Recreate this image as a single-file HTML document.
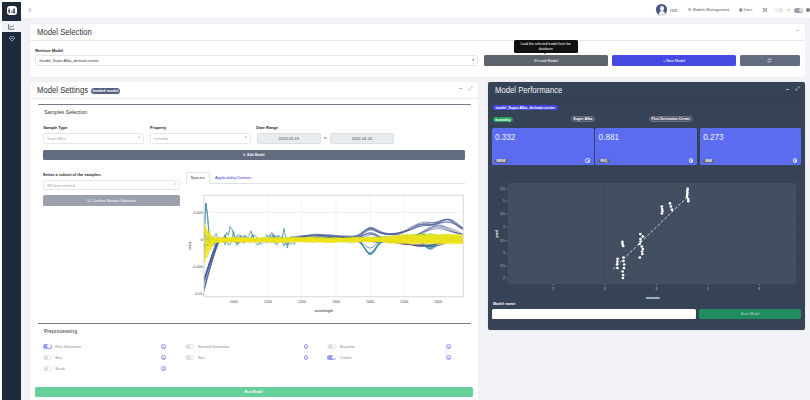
<!DOCTYPE html>
<html><head><meta charset="utf-8">
<style>
html,body{margin:0;padding:0;width:810px;height:400px;overflow:hidden;background:#fff;font-family:"Liberation Sans",sans-serif;}
.a{position:absolute;box-sizing:border-box;}
.t{position:absolute;white-space:nowrap;line-height:1;}
.main{left:21px;top:18px;width:789px;height:382px;background:#f1f3f6;}
.side{left:2px;top:2px;width:19px;height:398px;background:#1e293b;}
.card{background:#fff;border-radius:2px;box-shadow:0 0 1px rgba(0,0,0,.12);}
.hdr{border-bottom:0.6px solid #e7e9ec;}
.title{font-size:8.3px;color:#2f3338;transform:scaleX(0.93);transform-origin:0 0;}
.lbl{font-size:3.9px;font-weight:bold;color:#1a1a1a;}
.sel{background:#fff;border:0.5px solid #e5e8eb;border-radius:1.5px;}
.seltxt{font-size:3.8px;color:#666;}
.btn{border-radius:1.5px;color:#fff;font-size:3.8px;text-align:center;padding-top:0.9px;}
.tk{position:absolute;font-size:3.2px;color:#555;white-space:nowrap;line-height:4px;}
.tkx{position:absolute;font-size:3.2px;color:#555;white-space:nowrap;width:20px;text-align:center;line-height:4px;}
.pill{border-radius:3px;color:#fff;font-size:3.65px;font-weight:bold;text-align:center;line-height:6.1px;height:5.4px;white-space:nowrap;overflow:hidden;}
.tog{width:9.2px;height:5.2px;border-radius:2.6px;}
.toff{background:#fff;border:0.5px solid #e3e5e8;}
.toff::after{content:"";position:absolute;left:0.2px;top:0.2px;width:4.2px;height:4.2px;border-radius:50%;background:#dcdfe3;}
.ton{background:#9a9bf3;}
.ton::after{content:"";position:absolute;right:0.7px;top:0.7px;width:3.8px;height:3.8px;border-radius:50%;background:#fff;}
.plbl{font-size:3.9px;color:#858585;}
.info{width:4.4px;height:4.4px;border-radius:50%;border:0.6px solid #9e9ff4;background:#e9e9fd;}
.info::after{content:"";position:absolute;left:0.9px;top:1.4px;width:1.4px;height:0.6px;border-top:0.5px solid #9e9ff4;}
.metric{background:#5c6cf0;border-radius:1.5px;}
.mval{font-size:8.2px;color:#eef0ff;}
.mpill{background:#5d6372;height:4.4px;line-height:5.2px;font-size:3.1px;font-weight:bold;color:#fff;border-radius:2.2px;padding:0 2.4px;}
.minfo{width:4.4px;height:4.4px;border-radius:50%;border:0.6px solid #e8eaff;}
.minfo::after{content:"";position:absolute;left:1.45px;top:0.7px;width:0.9px;height:1.1px;border-left:0.5px solid #e8eaff;border-bottom:0.5px solid #e8eaff;}
</style></head><body>
<!-- header -->
<div class="a main"></div>
<div class="a side"></div>
<div class="a" style="left:2px;top:21px;width:19px;height:11px;background:#f1f3f6"></div>
<!-- logo -->
<div class="a" style="left:7px;top:5.6px;width:9.8px;height:9.6px;background:#fff;border-radius:3px"></div>
<svg class="a" style="left:7px;top:5.6px" width="10" height="10" viewBox="0 0 10 10">
 <g fill="#1e293b">
  <rect x="1.7" y="2.4" width="0.9" height="4.8"/><rect x="1.2" y="4" width="1.9" height="0.8"/><rect x="1.2" y="5.6" width="1.9" height="0.8"/>
  <rect x="4.3" y="4.6" width="1.2" height="0.9"/><rect x="4.3" y="6.2" width="1.2" height="0.9"/>
  <rect x="6.6" y="2.4" width="0.9" height="4.8"/><rect x="6.1" y="3.3" width="1.9" height="0.8"/><rect x="6.1" y="4.8" width="1.9" height="0.8"/><rect x="6.1" y="6.3" width="1.9" height="0.8"/>
 </g>
</svg>
<!-- side icons -->
<svg class="a" style="left:8px;top:23.5px" width="7" height="6" viewBox="0 0 7 6">
 <path d="M0.6 0.3 V5.2 H6.4" stroke="#3a3f4a" stroke-width="0.75" fill="none"/>
 <path d="M1.6 3.6 L2.8 2.2 L4 3 L5.8 1.2" stroke="#3a3f4a" stroke-width="0.65" fill="none"/>
</svg>
<svg class="a" style="left:8.6px;top:35.6px" width="6" height="6" viewBox="0 0 6 6">
 <path d="M3 5.2 L0.6 2.6 A1.3 1.3 0 0 1 3 1.3 A1.3 1.3 0 0 1 5.4 2.6 Z" stroke="#c3cad6" stroke-width="0.7" fill="none"/>
 <path d="M1.3 2.6 H4.7" stroke="#c3cad6" stroke-width="0.5"/>
</svg>
<!-- hamburger -->
<svg class="a" style="left:27.5px;top:7.5px" width="4" height="4" viewBox="0 0 4 4">
 <path d="M0.3 0.8H3.3M0.3 2H3.3M0.3 3.2H3.3" stroke="#9ca3af" stroke-width="0.5"/>
</svg>
<!-- top right -->
<div class="a" style="left:656.4px;top:4.4px;width:10.8px;height:10.8px;border-radius:50%;background:#4a5683;overflow:hidden;box-shadow:0 0.5px 1px rgba(0,0,0,.3)">
 <div class="a" style="left:3.4px;top:1.8px;width:4px;height:4.6px;border-radius:50%;background:#f1f3f6"></div>
 <div class="a" style="left:2.2px;top:6.6px;width:6.4px;height:6px;border-radius:3px 3px 0 0;background:#f1f3f6"></div>
</div>
<div class="t" style="left:669.8px;top:8.9px;font-size:4.6px;color:#666;transform:scaleX(0.92);transform-origin:0 0">root</div>
<div class="t" style="left:687.5px;top:7.9px;font-size:4.4px;color:#555;transform:scaleX(0.89);transform-origin:0 0">&#9881; Models Management</div>
<div class="t" style="left:739px;top:7.9px;font-size:4.4px;color:#555;transform:scaleX(0.88);transform-origin:0 0">&#9641; Docs</div>
<svg class="a" style="left:762.6px;top:8px" width="4.6" height="4.4" viewBox="0 0 4.6 4.4"><path d="M0.5 0.5L4.1 3.9M4.1 0.5L0.5 3.9M0.4 0.4h1.3M0.4 0.4v1.3M4.2 0.4h-1.3M4.2 0.4v1.3M0.4 4h1.3M0.4 4v-1.3M4.2 4h-1.3M4.2 4v-1.3" stroke="#555" stroke-width="0.6" fill="none"/></svg>
<div class="a" style="left:774.4px;top:7.8px;width:9px;height:5px;border-radius:2.5px;background:#f0f2f5"><div class="a" style="left:4.6px;top:0.5px;width:4px;height:4px;border-radius:50%;background:#e3e6ea"></div></div>
<div class="t" style="left:786.9px;top:8.6px;font-size:4.4px;color:#6a707a">?</div>
<div class="a" style="left:794px;top:7.8px;width:9.3px;height:5.2px;border-radius:2.6px;background:#9aa1ab"><div class="a" style="left:4.7px;top:0.6px;width:4px;height:4px;border-radius:50%;background:#dfe3e8"></div></div>
<div class="a" style="left:806.3px;top:8.3px;width:3.8px;height:3.8px;border-radius:50%;background:#7d7f84"></div>

<!-- ============ Model Selection card ============ -->
<div class="a card" style="left:30px;top:23.7px;width:775px;height:53px"></div>
<div class="a hdr" style="left:30px;top:23.7px;width:775px;height:17.1px"></div>
<div class="t title" style="left:36.8px;top:27.6px">Model Selection</div>
<div class="a" style="left:795.5px;top:30.3px;width:3px;height:0.6px;background:#c5c5c5"></div>
<div class="t lbl" style="left:35.3px;top:48.6px">Retrieve Model</div>
<div class="a sel" style="left:35.4px;top:55px;width:443.1px;height:10.8px"></div>
<div class="t seltxt" style="left:39.3px;top:60.0px;color:#333">/model_Super.Alba_derivate.center</div>
<div class="t" style="left:471.8px;top:58.6px;font-size:3px;color:#555">&#9660;</div>
<div class="a btn" style="left:484.2px;top:55px;width:123.5px;height:10.7px;line-height:10.7px;background:#5d636a">&#10227; Load Model</div>
<div class="a btn" style="left:612.4px;top:55px;width:123.3px;height:10.7px;line-height:10.7px;background:#4649e1">+ New Model</div>
<div class="a btn" style="left:740.2px;top:55px;width:59.5px;height:10.5px;line-height:10.5px;background:#646c7f"><svg width="5" height="5" viewBox="0 0 5 5" style="vertical-align:middle"><path d="M1 2.2 A1.6 1.6 0 0 1 4 1.8 M4 2.8 A1.6 1.6 0 0 1 1 3.2" stroke="#fff" stroke-width="0.6" fill="none"/><path d="M3.2 1.2 L4.2 1.9 L4.3 0.8Z M1.8 3.8 L0.8 3.1 L0.7 4.2Z" fill="#fff"/></svg></div>
<!-- tooltip -->
<div class="a" style="left:513.5px;top:40.3px;width:64.6px;height:12.3px;background:#111;border-radius:1.5px;color:#fff;font-size:3.4px;text-align:center;line-height:5px;padding-top:1.4px">Load the selected model from the<br>database</div>
<div class="a" style="left:543.8px;top:52.5px;width:0;height:0;border-left:1.6px solid transparent;border-right:1.6px solid transparent;border-top:1.6px solid #111"></div>

<!-- ============ Model Settings card ============ -->
<div class="a card" style="left:30px;top:81.5px;width:448px;height:330px"></div>
<div class="a hdr" style="left:30px;top:81.5px;width:448px;height:17.2px"></div>
<div class="t title" style="left:36.9px;top:86px">Model Settings</div>
<div class="a pill" style="left:90.8px;top:87.9px;width:29.6px;height:5.8px;line-height:6.6px;background:#56607f;font-size:4px;letter-spacing:0.05px">loaded model</div>
<div class="a" style="left:458.5px;top:88.3px;width:3px;height:0.6px;background:#bbb"></div>
<svg class="a" style="left:467.5px;top:86px" width="5" height="5" viewBox="0 0 5 5"><path d="M0.8 4.2 L4.2 0.8 M2.6 0.8H4.2V2.4 M0.8 2.6V4.2H2.4" stroke="#aab" stroke-width="0.5" fill="none"/></svg>

<!-- Samples selection inner -->
<div class="a" style="left:38px;top:104px;width:432.5px;height:1.1px;background:#737a8a;border-radius:1px"></div>
<div class="t" style="left:44.2px;top:110.3px;font-size:5.2px;color:#333">Samples Selection</div>
<div class="t lbl" style="left:43.2px;top:126.4px;font-size:3.95px">Sample Type</div>
<div class="t lbl" style="left:150px;top:126.4px;font-size:3.95px">Property</div>
<div class="t lbl" style="left:256.3px;top:126.4px;font-size:3.95px">Date Range</div>
<div class="a sel" style="left:42.7px;top:132.8px;width:101.7px;height:11px"></div>
<div class="t seltxt" style="left:47px;top:137.7px;color:#aaa">Super Alba</div>
<div class="t" style="left:137.5px;top:136.3px;font-size:2.8px;color:#888">&#9660;</div>
<div class="a sel" style="left:149.7px;top:132.8px;width:101.6px;height:11px"></div>
<div class="t seltxt" style="left:154px;top:137.7px;color:#aaa">humidity</div>
<div class="t" style="left:244.5px;top:136.3px;font-size:2.8px;color:#888">&#9660;</div>
<div class="a" style="left:256.6px;top:132.8px;width:64.3px;height:11px;background:#e9ecef;border:0.5px solid #dcdfe3;border-radius:1.5px;font-size:4px;color:#444;text-align:center;line-height:10.4px">2024-03-19</div>
<div class="t" style="left:323.8px;top:136.9px;font-size:3.6px;color:#666">to</div>
<div class="a" style="left:329.8px;top:132.8px;width:64.2px;height:11px;background:#e9ecef;border:0.5px solid #dcdfe3;border-radius:1.5px;font-size:4px;color:#444;text-align:center;line-height:10.4px">2024-04-20</div>
<div class="a btn" style="left:42.7px;top:149.6px;width:422.5px;height:10px;line-height:10px;background:#636c80;font-weight:bold;font-size:3.4px">&#9998; Edit Model</div>

<div class="t lbl" style="left:42.8px;top:173.4px;font-size:3.95px">Select a subset of the samples:</div>
<div class="a sel" style="left:42.8px;top:180.4px;width:137.4px;height:9.3px"></div>
<div class="t seltxt" style="left:47px;top:184.7px;color:#999;font-size:3.3px">389 items selected</div>
<div class="t" style="left:174px;top:183.6px;font-size:2.6px;color:#aaa">&#9660;</div>
<div class="a btn" style="left:42.8px;top:195.2px;width:137.4px;height:10.9px;line-height:10.9px;background:#9aa1ad;font-size:3.8px">&#9745; Confirm Sample Selection</div>

<!-- tabs -->
<div class="a" style="left:185.5px;top:183px;width:279.5px;height:0.6px;background:#dfe3e8"></div>
<div class="a" style="left:185.5px;top:171.9px;width:24.1px;height:11.7px;background:#fff;border:0.6px solid #dfe3e8;border-bottom:none;border-radius:1.5px 1.5px 0 0"></div>
<div class="t" style="left:190.6px;top:175.9px;font-size:4px;color:#333">Spectra</div>
<div class="t" style="left:215.1px;top:175.9px;font-size:4px;color:#3d3ddc">Applicability Domain</div>

<!-- spectra plot -->
<svg class="a" style="left:0;top:0" width="810" height="400" viewBox="0 0 810 400">
 <defs><clipPath id="cp"><rect x="204" y="195.2" width="259.2" height="101.6"/></clipPath></defs>
 <g clip-path="url(#cp)">
<line x1="267.8" y1="296.8" x2="267.8" y2="298.0" stroke="#555" stroke-width="0.5"/>
<line x1="267.8" y1="195.2" x2="267.8" y2="296.8" stroke="#ebebeb" stroke-width="0.6"/>
<line x1="301.9" y1="296.8" x2="301.9" y2="298.0" stroke="#555" stroke-width="0.5"/>
<line x1="301.9" y1="195.2" x2="301.9" y2="296.8" stroke="#ebebeb" stroke-width="0.6"/>
<line x1="336.0" y1="296.8" x2="336.0" y2="298.0" stroke="#555" stroke-width="0.5"/>
<line x1="336.0" y1="195.2" x2="336.0" y2="296.8" stroke="#ebebeb" stroke-width="0.6"/>
<line x1="370.1" y1="296.8" x2="370.1" y2="298.0" stroke="#555" stroke-width="0.5"/>
<line x1="370.1" y1="195.2" x2="370.1" y2="296.8" stroke="#ebebeb" stroke-width="0.6"/>
<line x1="404.2" y1="296.8" x2="404.2" y2="298.0" stroke="#555" stroke-width="0.5"/>
<line x1="404.2" y1="195.2" x2="404.2" y2="296.8" stroke="#ebebeb" stroke-width="0.6"/>
<line x1="204.0" y1="212.5" x2="463.2" y2="212.5" stroke="#ebebeb" stroke-width="0.6"/>
<line x1="204.0" y1="239.8" x2="463.2" y2="239.8" stroke="#ebebeb" stroke-width="0.6"/>
<polyline points="204.0,246.6 205.8,245.6 207.5,244.6 209.2,243.6 211.0,242.4 212.7,241.2 214.5,240.1 216.2,240.0 217.9,239.9 219.7,239.9 221.4,239.9 223.1,240.0 224.9,240.1 226.6,240.3 228.4,240.6 230.1,241.0 231.8,241.3 233.6,241.6 235.3,241.9 237.0,242.0 238.8,241.9 240.5,241.8 242.2,241.6 244.0,241.5 245.7,241.4 247.5,241.3 249.2,241.3 250.9,241.3 252.7,241.3 254.4,241.2 256.1,241.2 257.9,241.0 259.6,240.9 261.4,240.7 263.1,240.4 264.8,240.2 266.6,240.1 268.3,240.0 270.0,240.0 271.8,240.0 273.5,240.0 275.3,240.0 277.0,240.0 278.7,239.9 280.5,239.8 282.2,239.7 283.9,239.5 285.7,239.4 287.4,239.3 289.1,239.2 290.9,239.2 292.6,239.3 294.4,239.3 296.1,239.3 297.8,239.2 299.6,239.2 301.3,239.2 303.0,239.2 304.8,239.4 306.5,239.5 308.3,239.8 310.0,240.0 311.7,240.1 313.5,240.2 315.2,240.2 316.9,240.2 318.7,240.2 320.4,240.2 322.2,240.3 323.9,240.4 325.6,240.4 327.4,240.4 329.1,240.2 330.8,240.0 332.6,239.8 334.3,239.7 336.0,239.6 337.8,239.5 339.5,239.5 341.3,239.6 343.0,239.7 344.7,239.8 346.5,239.9 348.2,240.0 349.9,240.0 351.7,240.0 353.4,239.8 355.2,239.7 356.9,239.5 358.6,239.3 360.4,239.3 362.1,239.3 363.8,239.4 365.6,239.7 367.3,240.0 369.1,240.4 370.8,240.9 372.5,241.2 374.3,241.5 376.0,241.6 377.7,241.6 379.5,241.4 381.2,241.3 382.9,241.2 384.7,241.2 386.4,241.3 388.2,241.4 389.9,241.7 391.6,242.0 393.4,242.3 395.1,242.6 396.8,243.0 398.6,243.4 400.3,243.7 402.1,244.0 403.8,244.2 405.5,244.4 407.3,244.5 409.0,244.7 410.7,244.9 412.5,245.1 414.2,245.5 416.0,245.8 417.7,246.0 419.4,246.2 421.2,246.3 422.9,246.3 424.6,246.2 426.4,246.0 428.1,245.8 429.8,245.5 431.6,245.2 433.3,244.9 435.1,244.5 436.8,244.1 438.5,243.7 440.3,243.4 442.0,243.1 443.7,242.8 445.5,242.5 447.2,242.2 449.0,241.9 450.7,241.6 452.4,241.3 454.2,241.0 455.9,240.6 457.6,240.3 459.4,240.0 461.1,239.8 462.9,239.7" stroke="#3b2a78" stroke-width="0.7" fill="none" opacity="1.0"/>
<polyline points="204.0,246.9 205.8,245.9 207.5,244.8 209.2,243.8 211.0,242.7 212.7,241.5 214.5,240.5 216.2,240.4 217.9,240.3 219.7,240.2 221.4,240.2 223.1,240.2 224.9,240.3 226.6,240.4 228.4,240.5 230.1,240.5 231.8,240.5 233.6,240.4 235.3,240.4 237.0,240.3 238.8,240.3 240.5,240.4 242.2,240.4 244.0,240.4 245.7,240.4 247.5,240.3 249.2,240.2 250.9,240.1 252.7,240.0 254.4,240.0 256.1,239.9 257.9,239.9 259.6,239.8 261.4,239.7 263.1,239.5 264.8,239.5 266.6,239.4 268.3,239.4 270.0,239.4 271.8,239.4 273.5,239.4 275.3,239.3 277.0,239.2 278.7,239.0 280.5,238.9 282.2,238.8 283.9,238.8 285.7,238.8 287.4,238.8 289.1,238.8 290.9,238.8 292.6,238.8 294.4,238.7 296.1,238.8 297.8,239.0 299.6,239.2 301.3,239.5 303.0,239.9 304.8,240.2 306.5,240.4 308.3,240.6 310.0,240.7 311.7,240.8 313.5,240.8 315.2,240.9 316.9,240.8 318.7,240.9 320.4,240.9 322.2,241.0 323.9,241.0 325.6,241.1 327.4,241.0 329.1,240.9 330.8,240.8 332.6,240.8 334.3,240.7 336.0,240.7 337.8,240.7 339.5,240.6 341.3,240.5 343.0,240.3 344.7,240.1 346.5,239.8 348.2,239.7 349.9,239.6 351.7,239.6 353.4,239.7 355.2,239.9 356.9,240.0 358.6,240.1 360.4,240.1 362.1,240.1 363.8,240.1 365.6,240.3 367.3,240.5 369.1,240.8 370.8,241.2 372.5,241.7 374.3,242.0 376.0,242.3 377.7,242.3 379.5,242.2 381.2,242.0 382.9,241.9 384.7,241.7 386.4,241.7 388.2,241.7 389.9,241.8 391.6,241.9 393.4,242.1 395.1,242.3 396.8,242.6 398.6,242.9 400.3,243.2 402.1,243.6 403.8,243.9 405.5,244.2 407.3,244.3 409.0,244.4 410.7,244.5 412.5,244.4 414.2,244.3 416.0,244.3 417.7,244.3 419.4,244.5 421.2,244.7 422.9,245.0 424.6,245.3 426.4,245.5 428.1,245.6 429.8,245.5 431.6,245.3 433.3,245.0 435.1,244.6 436.8,244.2 438.5,243.7 440.3,243.3 442.0,242.8 443.7,242.4 445.5,241.9 447.2,241.4 449.0,240.9 450.7,240.4 452.4,240.1 454.2,239.8 455.9,239.8 457.6,239.8 459.4,239.8 461.1,239.8 462.9,239.9" stroke="#3b2a78" stroke-width="0.7" fill="none" opacity="1.0"/>
<polyline points="204.0,245.6 205.8,244.5 207.5,243.4 209.2,242.4 211.0,241.4 212.7,240.4 214.5,239.5 216.2,239.7 217.9,239.8 219.7,240.0 221.4,240.1 223.1,240.2 224.9,240.4 226.6,240.5 228.4,240.6 230.1,240.7 231.8,240.7 233.6,240.6 235.3,240.4 237.0,240.1 238.8,239.8 240.5,239.6 242.2,239.5 244.0,239.5 245.7,239.6 247.5,239.6 249.2,239.6 250.9,239.6 252.7,239.6 254.4,239.7 256.1,239.8 257.9,240.0 259.6,240.2 261.4,240.3 263.1,240.3 264.8,240.0 266.6,239.6 268.3,239.2 270.0,238.8 271.8,238.5 273.5,238.3 275.3,238.4 277.0,238.7 278.7,239.0 280.5,239.2 282.2,239.5 283.9,239.6 285.7,239.8 287.4,239.9 289.1,240.0 290.9,240.1 292.6,240.1 294.4,240.1 296.1,240.0 297.8,239.8 299.6,239.7 301.3,239.5 303.0,239.3 304.8,239.2 306.5,239.0 308.3,239.0 310.0,239.2 311.7,239.5 313.5,240.0 315.2,240.4 316.9,240.8 318.7,241.0 320.4,241.0 322.2,240.9 323.9,240.8 325.6,240.7 327.4,240.4 329.1,240.2 330.8,240.0 332.6,239.8 334.3,239.8 336.0,239.9 337.8,240.1 339.5,240.3 341.3,240.5 343.0,240.5 344.7,240.4 346.5,240.1 348.2,239.8 349.9,239.5 351.7,239.3 353.4,239.3 355.2,239.4 356.9,239.7 358.6,240.1 360.4,240.5 362.1,240.7 363.8,240.9 365.6,240.9 367.3,240.9 369.1,240.8 370.8,240.7 372.5,240.7 374.3,240.8 376.0,240.8 377.7,240.8 379.5,240.9 381.2,241.0 382.9,241.2 384.7,241.4 386.4,241.6 388.2,241.8 389.9,242.0 391.6,242.0 393.4,242.1 395.1,242.1 396.8,242.2 398.6,242.4 400.3,242.6 402.1,242.7 403.8,242.9 405.5,243.1 407.3,243.4 409.0,243.7 410.7,244.1 412.5,244.5 414.2,244.8 416.0,245.0 417.7,245.1 419.4,245.2 421.2,245.3 422.9,245.5 424.6,245.8 426.4,246.0 428.1,246.2 429.8,246.4 431.6,246.5 433.3,246.5 435.1,246.3 436.8,246.0 438.5,245.6 440.3,245.1 442.0,244.5 443.7,243.9 445.5,243.3 447.2,242.6 449.0,242.0 450.7,241.4 452.4,240.9 454.2,240.6 455.9,240.3 457.6,240.2 459.4,240.1 461.1,240.0 462.9,239.9" stroke="#3b2a78" stroke-width="0.7" fill="none" opacity="1.0"/>
<polyline points="204.0,246.4 205.8,245.4 207.5,244.3 209.2,243.3 211.0,242.3 212.7,241.3 214.5,240.4 216.2,240.6 217.9,240.8 219.7,241.0 221.4,241.1 223.1,241.2 224.9,241.3 226.6,241.3 228.4,241.3 230.1,241.4 231.8,241.4 233.6,241.3 235.3,241.2 237.0,241.1 238.8,241.0 240.5,240.9 242.2,240.8 244.0,240.8 245.7,240.8 247.5,240.8 249.2,240.7 250.9,240.5 252.7,240.3 254.4,240.0 256.1,239.8 257.9,239.7 259.6,239.7 261.4,239.9 263.1,240.1 264.8,240.4 266.6,240.7 268.3,240.8 270.0,240.9 271.8,240.9 273.5,240.9 275.3,240.9 277.0,240.9 278.7,240.9 280.5,240.9 282.2,240.9 283.9,240.9 285.7,240.9 287.4,240.9 289.1,240.9 290.9,240.8 292.6,240.7 294.4,240.6 296.1,240.6 297.8,240.6 299.6,240.7 301.3,240.8 303.0,240.9 304.8,240.9 306.5,240.8 308.3,240.6 310.0,240.3 311.7,240.1 313.5,239.8 315.2,239.5 316.9,239.4 318.7,239.4 320.4,239.5 322.2,239.8 323.9,240.1 325.6,240.3 327.4,240.4 329.1,240.5 330.8,240.5 332.6,240.4 334.3,240.4 336.0,240.4 337.8,240.5 339.5,240.6 341.3,240.7 343.0,240.8 344.7,240.9 346.5,240.9 348.2,241.0 349.9,241.2 351.7,241.3 353.4,241.4 355.2,241.4 356.9,241.4 358.6,241.3 360.4,241.2 362.1,241.1 363.8,241.0 365.6,241.0 367.3,241.0 369.1,241.1 370.8,241.1 372.5,241.1 374.3,241.1 376.0,241.1 377.7,241.1 379.5,241.2 381.2,241.2 382.9,241.4 384.7,241.5 386.4,241.6 388.2,241.8 389.9,241.9 391.6,242.1 393.4,242.3 395.1,242.5 396.8,242.7 398.6,243.0 400.3,243.2 402.1,243.3 403.8,243.5 405.5,243.6 407.3,243.8 409.0,244.1 410.7,244.4 412.5,244.8 414.2,245.3 416.0,245.7 417.7,246.0 419.4,246.1 421.2,246.1 422.9,245.9 424.6,245.6 426.4,245.1 428.1,244.7 429.8,244.4 431.6,244.2 433.3,244.1 435.1,244.1 436.8,244.1 438.5,244.0 440.3,243.6 442.0,243.2 443.7,242.6 445.5,242.0 447.2,241.4 449.0,240.9 450.7,240.4 452.4,240.0 454.2,239.7 455.9,239.6 457.6,239.6 459.4,239.7 461.1,239.8 462.9,239.9" stroke="#3b2a78" stroke-width="0.7" fill="none" opacity="1.0"/>
<polyline points="204.0,289.2 205.8,282.9 207.5,276.8 209.2,270.9 211.0,265.2 212.7,259.5 214.5,254.1 216.2,249.0 217.9,244.2 219.7,240.5 221.4,240.3 223.1,240.2 224.9,240.1 226.6,240.1 228.4,239.9 230.1,239.7 231.8,239.4 233.6,239.2 235.3,239.0 237.0,238.9 238.8,238.8 240.5,238.9 242.2,238.9 244.0,239.0 245.7,239.0 247.5,239.0 249.2,238.9 250.9,239.0 252.7,239.0 254.4,239.0 256.1,239.1 257.9,239.2 259.6,239.3 261.4,239.4 263.1,239.6 264.8,239.7 266.6,239.9 268.3,240.0 270.0,240.1 271.8,240.2 273.5,240.2 275.3,240.1 277.0,240.0 278.7,239.8 280.5,239.7 282.2,239.6 283.9,239.5 285.7,239.4 287.4,239.2 289.1,239.0 290.9,238.9 292.6,238.7 294.4,238.4 296.1,238.1 297.8,237.8 299.6,237.4 301.3,237.0 303.0,236.5 304.8,236.0 306.5,235.6 308.3,235.3 310.0,234.9 311.7,234.5 313.5,234.3 315.2,234.2 316.9,234.2 318.7,234.4 320.4,234.7 322.2,235.1 323.9,235.5 325.6,235.9 327.4,236.3 329.1,236.5 330.8,236.8 332.6,236.9 334.3,236.9 336.0,236.9 337.8,236.8 339.5,236.8 341.3,236.8 343.0,236.9 344.7,237.0 346.5,237.1 348.2,237.2 349.9,237.2 351.7,237.2 353.4,237.0 355.2,236.8 356.9,236.5 358.6,235.9 360.4,234.9 362.1,233.5 363.8,231.9 365.6,230.4 367.3,229.0 369.1,227.9 370.8,227.5 372.5,227.8 374.3,228.4 376.0,229.4 377.7,230.4 379.5,231.3 381.2,232.0 382.9,232.6 384.7,232.9 386.4,233.2 388.2,233.4 389.9,233.5 391.6,233.6 393.4,233.6 395.1,233.6 396.8,233.4 398.6,233.1 400.3,232.7 402.1,232.2 403.8,231.6 405.5,231.0 407.3,230.3 409.0,229.4 410.7,228.6 412.5,227.6 414.2,226.6 416.0,225.7 417.7,225.0 419.4,224.4 421.2,224.2 422.9,224.1 424.6,224.3 426.4,224.5 428.1,224.7 429.8,224.8 431.6,224.7 433.3,224.5 435.1,224.1 436.8,223.5 438.5,222.8 440.3,222.0 442.0,221.3 443.7,220.6 445.5,220.0 447.2,219.5 449.0,219.3 450.7,219.5 452.4,220.0 454.2,220.9 455.9,222.1 457.6,223.6 459.4,225.1 461.1,226.6 462.9,228.0" stroke="#3e4f8c" stroke-width="0.6" fill="none" opacity="1.0"/>
<polyline points="204.0,281.2 205.8,275.8 207.5,270.5 209.2,265.3 211.0,260.2 212.7,255.3 214.5,250.6 216.2,246.3 217.9,242.5 219.7,239.5 221.4,239.4 223.1,239.4 224.9,239.4 226.6,239.4 228.4,239.3 230.1,239.4 231.8,239.4 233.6,239.6 235.3,239.7 237.0,239.9 238.8,240.0 240.5,240.1 242.2,240.0 244.0,240.0 245.7,239.8 247.5,239.8 249.2,239.8 250.9,239.9 252.7,240.0 254.4,240.3 256.1,240.5 257.9,240.7 259.6,240.9 261.4,241.0 263.1,241.0 264.8,240.9 266.6,240.6 268.3,240.4 270.0,240.3 271.8,240.3 273.5,240.4 275.3,240.6 277.0,240.8 278.7,240.9 280.5,240.9 282.2,240.9 283.9,240.7 285.7,240.3 287.4,239.8 289.1,239.2 290.9,238.7 292.6,238.1 294.4,237.7 296.1,237.3 297.8,237.0 299.6,236.8 301.3,236.6 303.0,236.4 304.8,236.3 306.5,236.2 308.3,236.2 310.0,236.2 311.7,236.1 313.5,236.1 315.2,236.2 316.9,236.3 318.7,236.3 320.4,236.3 322.2,236.3 323.9,236.2 325.6,236.1 327.4,236.0 329.1,235.9 330.8,235.8 332.6,235.8 334.3,235.8 336.0,236.0 337.8,236.3 339.5,236.6 341.3,237.0 343.0,237.3 344.7,237.6 346.5,237.9 348.2,238.1 349.9,238.3 351.7,238.5 353.4,238.4 355.2,238.2 356.9,237.9 358.6,237.2 360.4,236.3 362.1,234.9 363.8,233.5 365.6,232.2 367.3,231.0 369.1,230.2 370.8,229.9 372.5,230.2 374.3,230.7 376.0,231.4 377.7,232.2 379.5,232.8 381.2,233.2 382.9,233.5 384.7,233.6 386.4,233.7 388.2,233.7 389.9,233.6 391.6,233.4 393.4,233.3 395.1,233.1 396.8,233.0 398.6,232.8 400.3,232.5 402.1,232.1 403.8,231.7 405.5,231.1 407.3,230.4 409.0,229.5 410.7,228.6 412.5,227.7 414.2,226.8 416.0,226.1 417.7,225.4 419.4,224.9 421.2,224.5 422.9,224.2 424.6,224.2 426.4,224.2 428.1,224.4 429.8,224.5 431.6,224.6 433.3,224.5 435.1,224.3 436.8,224.0 438.5,223.6 440.3,223.2 442.0,222.7 443.7,222.3 445.5,221.9 447.2,221.8 449.0,221.9 450.7,222.2 452.4,222.9 454.2,223.7 455.9,224.7 457.6,225.7 459.4,226.7 461.1,227.7 462.9,228.5" stroke="#465a9b" stroke-width="0.6" fill="none" opacity="1.0"/>
<polyline points="204.0,288.9 205.8,282.3 207.5,275.9 209.2,269.7 211.0,263.7 212.7,257.9 214.5,252.5 216.2,247.4 217.9,242.9 219.7,239.3 221.4,239.4 223.1,239.5 224.9,239.6 226.6,239.7 228.4,239.8 230.1,239.9 231.8,239.9 233.6,239.8 235.3,239.7 237.0,239.6 238.8,239.6 240.5,239.6 242.2,239.7 244.0,239.8 245.7,239.8 247.5,239.9 249.2,239.9 250.9,240.0 252.7,240.0 254.4,240.0 256.1,240.0 257.9,239.9 259.6,239.8 261.4,239.7 263.1,239.6 264.8,239.5 266.6,239.4 268.3,239.5 270.0,239.5 271.8,239.7 273.5,239.8 275.3,239.9 277.0,240.0 278.7,240.0 280.5,240.0 282.2,239.8 283.9,239.6 285.7,239.2 287.4,238.7 289.1,238.1 290.9,237.6 292.6,237.2 294.4,236.8 296.1,236.5 297.8,236.3 299.6,236.1 301.3,235.9 303.0,235.7 304.8,235.5 306.5,235.5 308.3,235.4 310.0,235.3 311.7,235.2 313.5,235.0 315.2,235.0 316.9,235.0 318.7,235.1 320.4,235.3 322.2,235.5 323.9,235.7 325.6,235.9 327.4,236.1 329.1,236.3 330.8,236.5 332.6,236.8 334.3,237.0 336.0,237.1 337.8,237.2 339.5,237.1 341.3,237.0 343.0,236.8 344.7,236.6 346.5,236.4 348.2,236.3 349.9,236.3 351.7,236.2 353.4,236.2 355.2,236.1 356.9,235.8 358.6,235.4 360.4,234.6 362.1,233.4 363.8,232.0 365.6,230.7 367.3,229.5 369.1,228.6 370.8,228.2 372.5,228.3 374.3,228.8 376.0,229.5 377.7,230.3 379.5,231.2 381.2,232.0 382.9,232.8 384.7,233.4 386.4,233.9 388.2,234.3 389.9,234.6 391.6,234.8 393.4,234.9 395.1,234.9 396.8,234.7 398.6,234.3 400.3,233.7 402.1,233.1 403.8,232.4 405.5,231.8 407.3,231.1 409.0,230.4 410.7,229.6 412.5,228.8 414.2,227.9 416.0,226.9 417.7,226.1 419.4,225.3 421.2,224.7 422.9,224.2 424.6,223.9 426.4,223.6 428.1,223.4 429.8,223.2 431.6,223.0 433.3,222.9 435.1,222.6 436.8,222.2 438.5,221.6 440.3,221.0 442.0,220.3 443.7,219.8 445.5,219.4 447.2,219.3 449.0,219.6 450.7,220.2 452.4,221.0 454.2,222.1 455.9,223.3 457.6,224.5 459.4,225.7 461.1,226.9 462.9,227.9" stroke="#3e4f8c" stroke-width="0.6" fill="none" opacity="1.0"/>
<polyline points="204.0,284.0 205.8,278.2 207.5,272.6 209.2,267.1 211.0,261.9 212.7,256.9 214.5,252.2 216.2,247.9 217.9,244.0 219.7,240.9 221.4,240.8 223.1,240.6 224.9,240.3 226.6,239.9 228.4,239.6 230.1,239.4 231.8,239.2 233.6,239.3 235.3,239.5 237.0,239.7 238.8,240.0 240.5,240.3 242.2,240.5 244.0,240.7 245.7,240.8 247.5,240.8 249.2,240.8 250.9,240.6 252.7,240.5 254.4,240.3 256.1,240.2 257.9,240.2 259.6,240.2 261.4,240.3 263.1,240.3 264.8,240.3 266.6,240.3 268.3,240.1 270.0,240.0 271.8,239.8 273.5,239.5 275.3,239.2 277.0,238.9 278.7,238.7 280.5,238.6 282.2,238.5 283.9,238.5 285.7,238.5 287.4,238.5 289.1,238.4 290.9,238.4 292.6,238.4 294.4,238.3 296.1,238.2 297.8,238.0 299.6,237.8 301.3,237.5 303.0,237.1 304.8,236.6 306.5,236.3 308.3,235.9 310.0,235.6 311.7,235.4 313.5,235.2 315.2,235.2 316.9,235.2 318.7,235.2 320.4,235.3 322.2,235.4 323.9,235.5 325.6,235.7 327.4,235.9 329.1,236.2 330.8,236.4 332.6,236.6 334.3,236.9 336.0,237.1 337.8,237.4 339.5,237.7 341.3,237.8 343.0,237.9 344.7,237.8 346.5,237.6 348.2,237.4 349.9,237.1 351.7,236.7 353.4,236.3 355.2,235.8 356.9,235.2 358.6,234.4 360.4,233.5 362.1,232.3 363.8,231.1 365.6,230.2 367.3,229.5 369.1,229.0 370.8,229.1 372.5,229.6 374.3,230.3 376.0,231.0 377.7,231.8 379.5,232.5 381.2,233.1 382.9,233.6 384.7,233.9 386.4,234.2 388.2,234.4 389.9,234.6 391.6,234.7 393.4,234.7 395.1,234.6 396.8,234.4 398.6,233.9 400.3,233.4 402.1,232.7 403.8,232.1 405.5,231.4 407.3,230.7 409.0,230.1 410.7,229.4 412.5,228.8 414.2,228.1 416.0,227.5 417.7,226.9 419.4,226.4 421.2,226.0 422.9,225.7 424.6,225.6 426.4,225.5 428.1,225.5 429.8,225.5 431.6,225.4 433.3,225.1 435.1,224.6 436.8,223.9 438.5,223.0 440.3,222.2 442.0,221.2 443.7,220.4 445.5,219.8 447.2,219.6 449.0,219.7 450.7,220.3 452.4,221.3 454.2,222.5 455.9,224.0 457.6,225.5 459.4,226.9 461.1,228.2 462.9,229.3" stroke="#465a9b" stroke-width="0.6" fill="none" opacity="1.0"/>
<polyline points="204.0,291.6 205.8,284.9 207.5,278.2 209.2,271.7 211.0,265.3 212.7,259.3 214.5,253.5 216.2,248.2 217.9,243.4 219.7,239.7 221.4,239.7 223.1,239.7 224.9,239.9 226.6,240.1 228.4,240.3 230.1,240.5 231.8,240.6 233.6,240.5 235.3,240.4 237.0,240.2 238.8,240.0 240.5,239.9 242.2,239.7 244.0,239.6 245.7,239.5 247.5,239.3 249.2,239.1 250.9,238.8 252.7,238.7 254.4,238.6 256.1,238.6 257.9,238.8 259.6,239.1 261.4,239.3 263.1,239.5 264.8,239.6 266.6,239.6 268.3,239.6 270.0,239.5 271.8,239.3 273.5,239.2 275.3,239.2 277.0,239.2 278.7,239.4 280.5,239.6 282.2,239.9 283.9,240.2 285.7,240.2 287.4,240.0 289.1,239.6 290.9,239.2 292.6,238.8 294.4,238.4 296.1,238.0 297.8,237.6 299.6,237.3 301.3,237.0 303.0,236.7 304.8,236.3 306.5,236.2 308.3,236.0 310.0,235.9 311.7,235.7 313.5,235.5 315.2,235.3 316.9,235.0 318.7,234.8 320.4,234.7 322.2,234.6 323.9,234.5 325.6,234.6 327.4,234.7 329.1,234.9 330.8,235.0 332.6,235.2 334.3,235.4 336.0,235.6 337.8,235.7 339.5,235.8 341.3,235.8 343.0,235.8 344.7,235.8 346.5,235.9 348.2,236.1 349.9,236.3 351.7,236.6 353.4,236.7 355.2,236.5 356.9,236.1 358.6,235.3 360.4,234.1 362.1,232.6 363.8,231.0 365.6,229.6 367.3,228.5 369.1,227.8 370.8,227.7 372.5,228.3 374.3,229.1 376.0,230.2 377.7,231.3 379.5,232.3 381.2,233.1 382.9,233.7 384.7,234.1 386.4,234.3 388.2,234.3 389.9,234.3 391.6,234.2 393.4,234.0 395.1,233.9 396.8,233.6 398.6,233.3 400.3,232.7 402.1,232.0 403.8,231.2 405.5,230.3 407.3,229.2 409.0,228.2 410.7,227.2 412.5,226.3 414.2,225.4 416.0,224.6 417.7,224.0 419.4,223.4 421.2,222.9 422.9,222.5 424.6,222.3 426.4,222.2 428.1,222.3 429.8,222.4 431.6,222.6 433.3,222.6 435.1,222.4 436.8,222.0 438.5,221.4 440.3,220.8 442.0,220.3 443.7,219.8 445.5,219.6 447.2,219.7 449.0,220.1 450.7,220.9 452.4,221.9 454.2,223.3 455.9,224.7 457.6,226.2 459.4,227.5 461.1,228.6 462.9,229.5" stroke="#3e4f8c" stroke-width="0.6" fill="none" opacity="1.0"/>
<polyline points="204.0,280.3 205.8,275.0 207.5,269.8 209.2,264.8 211.0,259.9 212.7,255.3 214.5,251.0 216.2,247.0 217.9,243.4 219.7,240.6 221.4,240.6 223.1,240.6 224.9,240.5 226.6,240.4 228.4,240.3 230.1,240.2 231.8,240.2 233.6,240.2 235.3,240.3 237.0,240.5 238.8,240.6 240.5,240.6 242.2,240.6 244.0,240.5 245.7,240.2 247.5,239.9 249.2,239.6 250.9,239.3 252.7,239.1 254.4,238.9 256.1,238.9 257.9,239.0 259.6,239.1 261.4,239.3 263.1,239.5 264.8,239.6 266.6,239.5 268.3,239.2 270.0,238.9 271.8,238.6 273.5,238.3 275.3,238.2 277.0,238.3 278.7,238.6 280.5,239.0 282.2,239.6 283.9,240.2 285.7,240.6 287.4,240.6 289.1,240.4 290.9,239.9 292.6,239.2 294.4,238.4 296.1,237.7 297.8,237.0 299.6,236.5 301.3,236.1 303.0,235.9 304.8,235.8 306.5,235.9 308.3,236.1 310.0,236.1 311.7,236.1 313.5,236.0 315.2,235.9 316.9,235.9 318.7,235.8 320.4,235.8 322.2,235.7 323.9,235.6 325.6,235.4 327.4,235.3 329.1,235.1 330.8,235.1 332.6,235.2 334.3,235.4 336.0,235.6 337.8,235.9 339.5,236.2 341.3,236.6 343.0,237.0 344.7,237.4 346.5,237.8 348.2,238.1 349.9,238.3 351.7,238.3 353.4,238.1 355.2,237.8 356.9,237.4 358.6,236.7 360.4,235.7 362.1,234.3 363.8,232.8 365.6,231.3 367.3,230.1 369.1,229.2 370.8,228.9 372.5,229.3 374.3,230.1 376.0,230.9 377.7,231.8 379.5,232.6 381.2,233.2 382.9,233.7 384.7,234.1 386.4,234.4 388.2,234.6 389.9,234.7 391.6,234.5 393.4,234.2 395.1,233.8 396.8,233.3 398.6,232.7 400.3,232.2 402.1,231.8 403.8,231.5 405.5,231.1 407.3,230.7 409.0,230.2 410.7,229.6 412.5,228.9 414.2,228.3 416.0,227.7 417.7,227.2 419.4,226.7 421.2,226.3 422.9,225.9 424.6,225.6 426.4,225.4 428.1,225.2 429.8,224.9 431.6,224.5 433.3,224.1 435.1,223.7 436.8,223.3 438.5,222.9 440.3,222.8 442.0,222.6 443.7,222.5 445.5,222.4 447.2,222.4 449.0,222.4 450.7,222.7 452.4,223.2 454.2,223.8 455.9,224.6 457.6,225.5 459.4,226.5 461.1,227.4 462.9,228.3" stroke="#465a9b" stroke-width="0.6" fill="none" opacity="1.0"/>
<polyline points="204.0,277.9 205.8,272.7 207.5,267.5 209.2,262.5 211.0,257.6 212.7,252.9 214.5,248.5 216.2,244.5 217.9,241.1 219.7,240.6 221.4,240.6 223.1,240.6 224.9,240.6 226.6,240.5 228.4,240.5 230.1,240.4 231.8,240.2 233.6,240.1 235.3,239.9 237.0,239.7 238.8,239.6 240.5,239.6 242.2,239.8 244.0,240.1 245.7,240.5 247.5,240.9 249.2,241.2 250.9,241.4 252.7,241.5 254.4,241.5 256.1,241.5 257.9,241.5 259.6,241.5 261.4,241.5 263.1,241.6 264.8,241.6 266.6,241.6 268.3,241.5 270.0,241.3 271.8,241.1 273.5,240.9 275.3,240.8 277.0,240.7 278.7,240.7 280.5,240.7 282.2,240.7 283.9,240.6 285.7,240.4 287.4,240.1 289.1,239.8 290.9,239.4 292.6,239.0 294.4,238.5 296.1,238.1 297.8,237.8 299.6,237.5 301.3,237.3 303.0,237.2 304.8,237.3 306.5,237.3 308.3,237.5 310.0,237.6 311.7,237.8 313.5,237.8 315.2,237.9 316.9,237.9 318.7,238.0 320.4,238.1 322.2,238.3 323.9,238.5 325.6,238.7 327.4,238.9 329.1,239.1 330.8,239.3 332.6,239.4 334.3,239.5 336.0,239.6 337.8,239.6 339.5,239.6 341.3,239.6 343.0,239.6 344.7,239.6 346.5,239.6 348.2,239.6 349.9,239.6 351.7,239.5 353.4,239.3 355.2,239.0 356.9,238.5 358.6,237.9 360.4,237.1 362.1,236.2 363.8,235.4 365.6,234.6 367.3,234.1 369.1,233.9 370.8,234.1 372.5,234.6 374.3,235.3 376.0,236.1 377.7,236.8 379.5,237.3 381.2,237.7 382.9,238.0 384.7,238.2 386.4,238.3 388.2,238.5 389.9,238.7 391.6,238.8 393.4,239.0 395.1,239.2 396.8,239.3 398.6,239.4 400.3,239.3 402.1,239.3 403.8,239.1 405.5,238.9 407.3,238.6 409.0,238.1 410.7,237.5 412.5,236.9 414.2,236.2 416.0,235.4 417.7,234.6 419.4,233.9 421.2,233.1 422.9,232.3 424.6,231.7 426.4,231.1 428.1,230.5 429.8,230.0 431.6,229.6 433.3,229.2 435.1,228.9 436.8,228.7 438.5,228.7 440.3,228.9 442.0,229.1 443.7,229.5 445.5,230.0 447.2,230.4 449.0,231.0 450.7,231.5 452.4,232.1 454.2,232.6 455.9,233.1 457.6,233.6 459.4,234.0 461.1,234.4 462.9,234.8" stroke="#3e4f8c" stroke-width="0.6" fill="none" opacity="1.0"/>
<polyline points="204.0,280.8 205.8,274.8 207.5,268.9 209.2,263.3 211.0,258.0 212.7,253.0 214.5,248.3 216.2,244.2 217.9,240.9 219.7,240.7 221.4,241.1 223.1,241.3 224.9,241.5 226.6,241.4 228.4,241.2 230.1,241.0 231.8,240.6 233.6,240.3 235.3,239.9 237.0,239.7 238.8,239.5 240.5,239.4 242.2,239.3 244.0,239.2 245.7,239.2 247.5,239.1 249.2,239.0 250.9,238.8 252.7,238.7 254.4,238.6 256.1,238.6 257.9,238.7 259.6,238.9 261.4,239.1 263.1,239.3 264.8,239.4 266.6,239.6 268.3,239.8 270.0,240.1 271.8,240.4 273.5,240.7 275.3,240.9 277.0,241.0 278.7,241.0 280.5,240.9 282.2,240.7 283.9,240.6 285.7,240.6 287.4,240.6 289.1,240.7 290.9,240.7 292.6,240.7 294.4,240.5 296.1,240.3 297.8,240.0 299.6,239.7 301.3,239.3 303.0,238.9 304.8,238.5 306.5,238.2 308.3,238.0 310.0,237.8 311.7,237.6 313.5,237.5 315.2,237.2 316.9,237.0 318.7,236.9 320.4,236.8 322.2,236.9 323.9,237.2 325.6,237.5 327.4,237.8 329.1,238.1 330.8,238.5 332.6,238.8 334.3,239.2 336.0,239.5 337.8,239.9 339.5,240.1 341.3,240.2 343.0,240.1 344.7,240.0 346.5,239.7 348.2,239.6 349.9,239.5 351.7,239.4 353.4,239.4 355.2,239.3 356.9,239.0 358.6,238.4 360.4,237.5 362.1,236.5 363.8,235.3 365.6,234.2 367.3,233.3 369.1,232.8 370.8,232.7 372.5,233.0 374.3,233.7 376.0,234.7 377.7,235.8 379.5,236.9 381.2,237.9 382.9,238.6 384.7,239.1 386.4,239.5 388.2,239.8 389.9,240.0 391.6,240.3 393.4,240.6 395.1,240.9 396.8,241.0 398.6,241.0 400.3,240.8 402.1,240.5 403.8,240.1 405.5,239.7 407.3,239.1 409.0,238.4 410.7,237.6 412.5,236.8 414.2,236.0 416.0,235.1 417.7,234.3 419.4,233.3 421.2,232.4 422.9,231.3 424.6,230.3 426.4,229.2 428.1,228.2 429.8,227.4 431.6,226.7 433.3,226.2 435.1,225.9 436.8,225.9 438.5,225.9 440.3,226.2 442.0,226.5 443.7,226.8 445.5,227.1 447.2,227.5 449.0,227.9 450.7,228.5 452.4,229.1 454.2,229.9 455.9,230.7 457.6,231.5 459.4,232.4 461.1,233.2 462.9,234.0" stroke="#465a9b" stroke-width="0.6" fill="none" opacity="1.0"/>
<polyline points="204.0,281.2 205.8,275.6 207.5,270.0 209.2,264.5 211.0,259.0 212.7,253.5 214.5,248.3 216.2,243.5 217.9,239.5 219.7,238.7 221.4,238.9 223.1,239.2 224.9,239.7 226.6,240.1 228.4,240.5 230.1,240.7 231.8,240.7 233.6,240.7 235.3,240.5 237.0,240.3 238.8,240.0 240.5,239.9 242.2,239.8 244.0,239.8 245.7,239.9 247.5,239.9 249.2,239.8 250.9,239.8 252.7,239.8 254.4,239.8 256.1,239.9 257.9,240.1 259.6,240.2 261.4,240.3 263.1,240.3 264.8,240.2 266.6,240.0 268.3,239.8 270.0,239.5 271.8,239.4 273.5,239.2 275.3,239.2 277.0,239.2 278.7,239.3 280.5,239.5 282.2,239.7 283.9,240.0 285.7,240.2 287.4,240.4 289.1,240.6 290.9,240.8 292.6,241.0 294.4,241.2 296.1,241.4 297.8,241.3 299.6,241.0 301.3,240.6 303.0,240.0 304.8,239.5 306.5,239.0 308.3,238.7 310.0,238.6 311.7,238.4 313.5,238.3 315.2,238.1 316.9,237.8 318.7,237.6 320.4,237.4 322.2,237.3 323.9,237.2 325.6,237.3 327.4,237.4 329.1,237.6 330.8,237.8 332.6,237.9 334.3,238.1 336.0,238.1 337.8,238.1 339.5,238.0 341.3,237.8 343.0,237.7 344.7,237.6 346.5,237.6 348.2,237.7 349.9,238.0 351.7,238.3 353.4,238.7 355.2,239.0 356.9,239.1 358.6,239.0 360.4,238.6 362.1,238.0 363.8,237.3 365.6,236.6 367.3,235.8 369.1,235.1 370.8,234.5 372.5,234.3 374.3,234.5 376.0,235.2 377.7,236.3 379.5,237.6 381.2,238.7 382.9,239.5 384.7,239.9 386.4,239.9 388.2,239.6 389.9,239.3 391.6,239.0 393.4,238.9 395.1,238.9 396.8,239.0 398.6,238.9 400.3,238.8 402.1,238.6 403.8,238.3 405.5,238.0 407.3,237.7 409.0,237.4 410.7,237.1 412.5,236.7 414.2,236.1 416.0,235.4 417.7,234.6 419.4,233.8 421.2,232.9 422.9,232.0 424.6,231.1 426.4,230.3 428.1,229.5 429.8,228.7 431.6,228.1 433.3,227.6 435.1,227.2 436.8,227.0 438.5,226.9 440.3,227.2 442.0,227.6 443.7,228.2 445.5,229.0 447.2,229.7 449.0,230.5 450.7,231.1 452.4,231.7 454.2,232.2 455.9,232.7 457.6,233.3 459.4,233.8 461.1,234.3 462.9,234.8" stroke="#3e4f8c" stroke-width="0.6" fill="none" opacity="1.0"/>
<polyline points="204.0,282.1 205.8,275.9 207.5,269.8 209.2,263.9 211.0,258.1 212.7,252.5 214.5,247.3 216.2,242.6 217.9,238.8 219.7,238.1 221.4,238.1 223.1,238.2 224.9,238.3 226.6,238.5 228.4,238.9 230.1,239.2 231.8,239.6 233.6,239.8 235.3,239.9 237.0,239.8 238.8,239.5 240.5,239.1 242.2,238.8 244.0,238.5 245.7,238.5 247.5,238.6 249.2,238.8 250.9,239.1 252.7,239.3 254.4,239.6 256.1,239.9 257.9,240.1 259.6,240.3 261.4,240.4 263.1,240.6 264.8,240.7 266.6,240.7 268.3,240.7 270.0,240.6 271.8,240.4 273.5,240.2 275.3,240.1 277.0,240.0 278.7,240.0 280.5,239.9 282.2,239.9 283.9,239.8 285.7,239.7 287.4,239.6 289.1,239.4 290.9,239.2 292.6,239.0 294.4,238.9 296.1,238.9 297.8,238.9 299.6,238.9 301.3,238.9 303.0,239.0 304.8,238.9 306.5,238.9 308.3,238.8 310.0,238.6 311.7,238.5 313.5,238.3 315.2,238.2 316.9,238.0 318.7,237.9 320.4,237.9 322.2,237.9 323.9,237.9 325.6,237.9 327.4,237.9 329.1,237.8 330.8,237.8 332.6,237.9 334.3,238.0 336.0,238.2 337.8,238.3 339.5,238.4 341.3,238.3 343.0,238.2 344.7,238.0 346.5,237.9 348.2,237.9 349.9,237.9 351.7,238.0 353.4,238.0 355.2,237.9 356.9,237.6 358.6,237.1 360.4,236.4 362.1,235.6 363.8,234.8 365.6,234.1 367.3,233.5 369.1,233.1 370.8,233.0 372.5,233.2 374.3,233.7 376.0,234.5 377.7,235.3 379.5,236.1 381.2,236.8 382.9,237.4 384.7,237.9 386.4,238.3 388.2,238.6 389.9,238.9 391.6,239.2 393.4,239.5 395.1,239.7 396.8,239.8 398.6,239.6 400.3,239.2 402.1,238.6 403.8,238.0 405.5,237.4 407.3,237.0 409.0,236.8 410.7,236.7 412.5,236.8 414.2,236.8 416.0,236.6 417.7,236.2 419.4,235.6 421.2,234.8 422.9,233.9 424.6,232.8 426.4,231.5 428.1,230.2 429.8,228.8 431.6,227.6 433.3,226.5 435.1,225.7 436.8,225.1 438.5,224.9 440.3,225.1 442.0,225.5 443.7,226.2 445.5,227.1 447.2,228.1 449.0,229.1 450.7,230.0 452.4,230.9 454.2,231.6 455.9,232.3 457.6,232.9 459.4,233.5 461.1,234.0 462.9,234.5" stroke="#465a9b" stroke-width="0.6" fill="none" opacity="1.0"/>
<polyline points="204.0,239.2 205.8,203.0 207.5,215.7 209.2,240.4 211.0,240.9 212.7,240.9 214.5,241.0 216.2,241.1 217.9,241.0 219.7,241.0 221.4,240.9 223.1,239.0 224.9,236.3 226.6,240.0 228.4,240.2 230.1,240.0 231.8,239.9 233.6,239.6 235.3,240.2 237.0,245.3 238.8,241.1 240.5,238.8 242.2,237.6 244.0,235.1 245.7,238.2 247.5,238.9 249.2,239.1 250.9,239.0 252.7,239.8 254.4,239.8 256.1,243.5 257.9,245.0 259.6,243.1 261.4,239.6 263.1,239.5 264.8,241.4 266.6,242.7 268.3,237.0 270.0,234.7 271.8,238.4 273.5,234.3 275.3,237.8 277.0,239.7 278.7,239.9 280.5,240.1 282.2,238.7 283.9,228.4 285.7,238.1 287.4,245.0 289.1,240.0 290.9,239.6 292.6,239.5 294.4,239.4 296.1,239.5 297.8,239.6 299.6,239.7 301.3,239.8 303.0,240.0 304.8,240.2 306.5,240.4 308.3,240.6 310.0,240.8 311.7,240.9 313.5,240.8 315.2,240.7 316.9,240.5 318.7,240.4 320.4,240.2 322.2,240.1 323.9,239.9 325.6,239.8 327.4,239.7 329.1,239.8 330.8,239.9 332.6,240.1 334.3,240.3 336.0,240.5 337.8,240.7 339.5,240.7 341.3,240.7 343.0,240.7 344.7,240.7 346.5,240.7 348.2,240.6 349.9,240.5 351.7,240.3 353.4,240.2 355.2,240.2 356.9,240.3 358.6,240.8 360.4,241.6 362.1,242.8 363.8,244.3 365.6,245.9 367.3,247.2 369.1,247.9 370.8,248.0 372.5,247.2 374.3,245.9 376.0,244.3 377.7,242.8 379.5,241.6 381.2,240.7 382.9,240.1 384.7,239.8 386.4,239.6 388.2,239.4 389.9,239.3 391.6,239.1 393.4,239.1 395.1,239.1 396.8,239.2 398.6,239.3 400.3,239.6 402.1,239.9 403.8,240.2 405.5,240.4 407.3,240.6 409.0,240.7 410.7,240.7 412.5,240.6 414.2,240.6 416.0,240.7 417.7,241.0 419.4,241.5 421.2,242.3 422.9,243.4 424.6,244.7 426.4,246.0 428.1,247.0 429.8,247.4 431.6,247.2 433.3,246.4 435.1,245.3 436.8,244.0 438.5,242.8 440.3,241.9 442.0,241.2 443.7,240.8 445.5,240.7 447.2,240.6 449.0,240.6 450.7,240.6 452.4,240.5 454.2,240.4 455.9,240.3 457.6,240.2 459.4,240.0 461.1,239.9 462.9,239.8" stroke="#2f7796" stroke-width="0.7" fill="none" opacity="1.0"/>
<polyline points="204.0,239.5 205.8,203.0 207.5,213.5 209.2,235.7 211.0,242.3 212.7,246.1 214.5,243.3 216.2,240.6 217.9,240.4 219.7,240.5 221.4,240.5 223.1,240.4 224.9,239.0 226.6,237.2 228.4,240.1 230.1,240.3 231.8,240.3 233.6,240.2 235.3,240.1 237.0,239.8 238.8,239.6 240.5,241.0 242.2,238.0 244.0,238.9 245.7,239.1 247.5,239.1 249.2,239.1 250.9,239.1 252.7,235.5 254.4,235.3 256.1,236.4 257.9,239.4 259.6,239.5 261.4,239.6 263.1,239.7 264.8,239.9 266.6,240.0 268.3,240.2 270.0,240.4 271.8,238.0 273.5,237.9 275.3,241.0 277.0,241.0 278.7,240.9 280.5,238.5 282.2,236.3 283.9,240.5 285.7,237.3 287.4,237.9 289.1,241.6 290.9,241.3 292.6,240.7 294.4,240.7 296.1,240.7 297.8,240.6 299.6,240.5 301.3,240.4 303.0,240.3 304.8,240.2 306.5,240.2 308.3,240.1 310.0,240.1 311.7,240.0 313.5,240.0 315.2,240.1 316.9,240.1 318.7,240.1 320.4,240.1 322.2,240.0 323.9,239.9 325.6,239.7 327.4,239.6 329.1,239.6 330.8,239.6 332.6,239.8 334.3,240.0 336.0,240.1 337.8,240.3 339.5,240.4 341.3,240.4 343.0,240.4 344.7,240.3 346.5,240.2 348.2,240.0 349.9,239.8 351.7,239.7 353.4,239.6 355.2,239.6 356.9,240.0 358.6,240.7 360.4,242.1 362.1,244.1 363.8,246.7 365.6,249.5 367.3,252.0 369.1,253.5 370.8,253.7 372.5,252.6 374.3,250.5 376.0,247.9 377.7,245.4 379.5,243.4 381.2,241.9 382.9,241.0 384.7,240.4 386.4,240.1 388.2,240.0 389.9,239.9 391.6,239.8 393.4,239.8 395.1,239.8 396.8,239.7 398.6,239.7 400.3,239.7 402.1,239.8 403.8,239.8 405.5,239.9 407.3,239.9 409.0,240.0 410.7,239.9 412.5,239.9 414.2,239.9 416.0,239.9 417.7,240.1 419.4,240.5 421.2,241.2 422.9,242.2 424.6,243.2 426.4,244.2 428.1,244.8 429.8,245.1 431.6,244.9 433.3,244.4 435.1,243.6 436.8,242.7 438.5,242.0 440.3,241.3 442.0,240.9 443.7,240.5 445.5,240.3 447.2,240.0 449.0,239.7 450.7,239.4 452.4,239.1 454.2,238.8 455.9,238.6 457.6,238.5 459.4,238.5 461.1,238.6 462.9,238.8" stroke="#3a8aa8" stroke-width="0.7" fill="none" opacity="1.0"/>
<polyline points="204.0,257.8 205.8,245.0 207.5,244.3 209.2,246.5 211.0,242.8 212.7,239.2 214.5,239.2 216.2,239.3 217.9,239.5 219.7,239.7 221.4,239.9 223.1,240.0 224.9,238.4 226.6,232.5 228.4,235.4 230.1,226.4 231.8,228.8 233.6,234.7 235.3,239.2 237.0,236.9 238.8,236.9 240.5,235.7 242.2,241.0 244.0,243.2 245.7,239.7 247.5,239.8 249.2,239.8 250.9,239.7 252.7,239.5 254.4,239.2 256.1,239.0 257.9,238.9 259.6,238.8 261.4,238.9 263.1,239.1 264.8,239.2 266.6,239.4 268.3,239.5 270.0,239.5 271.8,239.5 273.5,238.9 275.3,235.6 277.0,238.2 278.7,239.4 280.5,239.5 282.2,239.5 283.9,239.5 285.7,241.5 287.4,248.1 289.1,241.2 290.9,236.9 292.6,239.5 294.4,239.7 296.1,239.7 297.8,239.7 299.6,239.6 301.3,239.4 303.0,239.1 304.8,239.0 306.5,238.8 308.3,238.8 310.0,238.8 311.7,238.8 313.5,238.8 315.2,238.9 316.9,238.9 318.7,239.0 320.4,239.2 322.2,239.3 323.9,239.4 325.6,239.5 327.4,239.4 329.1,239.2 330.8,239.0 332.6,238.8 334.3,238.6 336.0,238.5 337.8,238.4 339.5,238.5 341.3,238.5 343.0,238.6 344.7,238.6 346.5,238.6 348.2,238.5 349.9,238.5 351.7,238.5 353.4,238.6 355.2,238.8 356.9,239.3 358.6,240.3 360.4,241.9 362.1,244.1 363.8,247.0 365.6,250.0 367.3,252.7 369.1,254.3 370.8,254.5 372.5,253.3 374.3,251.0 376.0,248.2 377.7,245.6 379.5,243.4 381.2,241.9 382.9,241.1 384.7,240.6 386.4,240.3 388.2,240.2 389.9,240.1 391.6,240.0 393.4,240.0 395.1,240.1 396.8,240.3 398.6,240.5 400.3,240.6 402.1,240.6 403.8,240.6 405.5,240.5 407.3,240.4 409.0,240.3 410.7,240.3 412.5,240.3 414.2,240.4 416.0,240.6 417.7,241.0 419.4,241.7 421.2,242.8 422.9,244.3 424.6,245.9 426.4,247.5 428.1,248.7 429.8,249.2 431.6,249.1 433.3,248.2 435.1,246.9 436.8,245.3 438.5,243.7 440.3,242.3 442.0,241.3 443.7,240.5 445.5,240.0 447.2,239.7 449.0,239.5 450.7,239.5 452.4,239.5 454.2,239.6 455.9,239.6 457.6,239.6 459.4,239.6 461.1,239.5 462.9,239.5" stroke="#2f7796" stroke-width="0.7" fill="none" opacity="1.0"/>
<polyline points="204.0,246.9 205.8,236.3 207.5,237.9 209.2,242.2 211.0,236.4 212.7,237.5 214.5,239.6 216.2,239.7 217.9,239.7 219.7,239.9 221.4,240.1 223.1,239.4 224.9,234.5 226.6,238.9 228.4,244.9 230.1,244.5 231.8,240.7 233.6,240.6 235.3,240.3 237.0,242.6 238.8,243.6 240.5,239.6 242.2,239.4 244.0,239.3 245.7,239.2 247.5,239.2 249.2,239.3 250.9,239.3 252.7,239.4 254.4,239.5 256.1,239.5 257.9,239.5 259.6,243.7 261.4,243.9 263.1,241.9 264.8,239.2 266.6,234.5 268.3,236.9 270.0,239.5 271.8,239.5 273.5,241.2 275.3,243.1 277.0,235.8 278.7,240.1 280.5,238.1 282.2,239.2 283.9,239.4 285.7,239.6 287.4,239.7 289.1,240.7 290.9,244.5 292.6,242.7 294.4,244.5 296.1,239.5 297.8,238.8 299.6,238.8 301.3,238.8 303.0,238.9 304.8,239.0 306.5,239.2 308.3,239.4 310.0,239.6 311.7,239.7 313.5,239.7 315.2,239.7 316.9,239.6 318.7,239.5 320.4,239.3 322.2,239.3 323.9,239.3 325.6,239.3 327.4,239.4 329.1,239.5 330.8,239.7 332.6,239.8 334.3,240.1 336.0,240.3 337.8,240.5 339.5,240.7 341.3,240.9 343.0,241.1 344.7,241.1 346.5,241.1 348.2,241.1 349.9,241.0 351.7,241.0 353.4,241.0 355.2,241.1 356.9,241.3 358.6,241.9 360.4,243.0 362.1,244.8 363.8,247.1 365.6,249.6 367.3,251.8 369.1,253.2 370.8,253.3 372.5,252.1 374.3,249.9 376.0,247.4 377.7,245.0 379.5,243.1 381.2,241.8 382.9,241.0 384.7,240.6 386.4,240.4 388.2,240.3 389.9,240.2 391.6,240.2 393.4,240.1 395.1,240.1 396.8,240.1 398.6,240.0 400.3,239.9 402.1,239.9 403.8,239.8 405.5,239.8 407.3,239.8 409.0,239.8 410.7,239.8 412.5,239.8 414.2,239.9 416.0,240.2 417.7,240.7 419.4,241.5 421.2,242.7 422.9,244.1 424.6,245.7 426.4,247.1 428.1,248.2 429.8,248.6 431.6,248.4 433.3,247.5 435.1,246.3 436.8,244.9 438.5,243.5 440.3,242.4 442.0,241.6 443.7,241.0 445.5,240.6 447.2,240.3 449.0,240.1 450.7,239.8 452.4,239.6 454.2,239.4 455.9,239.2 457.6,239.1 459.4,239.0 461.1,239.0 462.9,239.1" stroke="#3a8aa8" stroke-width="0.7" fill="none" opacity="1.0"/>
<polyline points="204.0,249.6 205.8,238.8 207.5,240.2 209.2,244.5 211.0,242.7 212.7,240.8 214.5,243.6 216.2,245.8 217.9,240.5 219.7,240.3 221.4,240.2 223.1,240.0 224.9,239.9 226.6,239.7 228.4,239.7 230.1,242.0 231.8,240.4 233.6,231.5 235.3,238.8 237.0,237.8 238.8,239.5 240.5,236.4 242.2,239.7 244.0,239.9 245.7,239.2 247.5,239.8 249.2,240.2 250.9,238.3 252.7,234.3 254.4,239.2 256.1,240.1 257.9,240.2 259.6,240.2 261.4,240.2 263.1,240.2 264.8,240.3 266.6,240.4 268.3,240.5 270.0,240.6 271.8,240.1 273.5,235.7 275.3,238.7 277.0,240.3 278.7,235.1 280.5,237.7 282.2,241.3 283.9,246.0 285.7,241.9 287.4,240.4 289.1,240.5 290.9,240.5 292.6,240.4 294.4,240.2 296.1,240.0 297.8,239.8 299.6,239.7 301.3,239.6 303.0,239.6 304.8,239.7 306.5,239.6 308.3,239.6 310.0,239.4 311.7,239.3 313.5,239.2 315.2,239.2 316.9,239.2 318.7,239.2 320.4,239.3 322.2,239.4 323.9,239.5 325.6,239.6 327.4,239.8 329.1,240.0 330.8,240.1 332.6,240.2 334.3,240.2 336.0,240.1 337.8,240.0 339.5,239.8 341.3,239.7 343.0,239.6 344.7,239.4 346.5,239.3 348.2,239.2 349.9,239.1 351.7,239.0 353.4,239.1 355.2,239.3 356.9,239.8 358.6,240.8 360.4,242.2 362.1,244.4 363.8,247.0 365.6,249.9 367.3,252.5 369.1,254.2 370.8,254.6 372.5,253.6 374.3,251.5 376.0,248.8 377.7,246.3 379.5,244.2 381.2,242.8 382.9,241.8 384.7,241.3 386.4,241.1 388.2,241.0 389.9,241.0 391.6,241.1 393.4,241.1 395.1,241.1 396.8,241.0 398.6,240.9 400.3,240.6 402.1,240.3 403.8,240.0 405.5,239.7 407.3,239.5 409.0,239.4 410.7,239.4 412.5,239.6 414.2,239.9 416.0,240.4 417.7,241.0 419.4,241.9 421.2,243.1 422.9,244.4 424.6,245.9 426.4,247.1 428.1,247.9 429.8,248.1 431.6,247.6 433.3,246.6 435.1,245.1 436.8,243.6 438.5,242.2 440.3,241.2 442.0,240.6 443.7,240.3 445.5,240.2 447.2,240.2 449.0,240.3 450.7,240.3 452.4,240.3 454.2,240.2 455.9,240.1 457.6,240.0 459.4,240.0 461.1,239.9 462.9,240.0" stroke="#2f7796" stroke-width="0.7" fill="none" opacity="1.0"/>
<polyline points="204.0,248.2 205.8,237.3 207.5,238.7 209.2,243.0 211.0,241.2 212.7,239.4 214.5,236.0 216.2,233.5 217.9,238.8 219.7,238.8 221.4,238.8 223.1,239.3 224.9,244.7 226.6,241.3 228.4,238.6 230.1,238.5 231.8,240.0 233.6,241.5 235.3,238.5 237.0,235.2 238.8,234.5 240.5,235.4 242.2,236.7 244.0,238.8 245.7,235.5 247.5,237.8 249.2,234.9 250.9,230.8 252.7,236.4 254.4,240.2 256.1,240.2 257.9,240.3 259.6,240.3 261.4,240.3 263.1,240.4 264.8,240.5 266.6,240.5 268.3,240.6 270.0,237.6 271.8,232.4 273.5,237.4 275.3,244.1 277.0,244.8 278.7,240.2 280.5,240.1 282.2,240.0 283.9,240.0 285.7,240.0 287.4,240.1 289.1,240.2 290.9,237.1 292.6,236.7 294.4,240.3 296.1,240.3 297.8,240.3 299.6,240.4 301.3,240.5 303.0,240.7 304.8,240.7 306.5,240.6 308.3,240.5 310.0,240.2 311.7,240.0 313.5,239.8 315.2,239.7 316.9,239.6 318.7,239.7 320.4,239.9 322.2,240.1 323.9,240.2 325.6,240.2 327.4,240.2 329.1,240.1 330.8,240.0 332.6,240.0 334.3,240.0 336.0,240.1 337.8,240.2 339.5,240.3 341.3,240.3 343.0,240.3 344.7,240.2 346.5,240.2 348.2,240.2 349.9,240.2 351.7,240.3 353.4,240.4 355.2,240.6 356.9,241.1 358.6,241.8 360.4,243.0 362.1,244.7 363.8,246.9 365.6,249.2 367.3,251.3 369.1,252.5 370.8,252.5 372.5,251.4 374.3,249.3 376.0,246.8 377.7,244.4 379.5,242.4 381.2,241.1 382.9,240.3 384.7,239.8 386.4,239.7 388.2,239.6 389.9,239.6 391.6,239.6 393.4,239.6 395.1,239.6 396.8,239.6 398.6,239.6 400.3,239.6 402.1,239.6 403.8,239.6 405.5,239.6 407.3,239.7 409.0,239.9 410.7,240.1 412.5,240.3 414.2,240.6 416.0,241.0 417.7,241.4 419.4,242.0 421.2,242.8 422.9,243.8 424.6,244.8 426.4,245.6 428.1,246.2 429.8,246.4 431.6,246.0 433.3,245.2 435.1,244.0 436.8,242.8 438.5,241.8 440.3,241.0 442.0,240.4 443.7,239.9 445.5,239.6 447.2,239.3 449.0,239.1 450.7,238.9 452.4,238.9 454.2,239.0 455.9,239.2 457.6,239.4 459.4,239.6 461.1,239.7 462.9,239.8" stroke="#3a8aa8" stroke-width="0.7" fill="none" opacity="1.0"/>
<polyline points="204.0,251.3 205.8,249.9 207.5,248.5 209.2,249.2 211.0,243.2 212.7,241.6 214.5,239.5 216.2,238.7 217.9,238.2 219.7,238.0 221.4,238.1 223.1,238.4 224.9,238.9 226.6,239.5 228.4,240.2 230.1,240.6 231.8,240.7 233.6,240.4 235.3,239.9 237.0,239.3 238.8,238.7 240.5,238.1 242.2,237.7 244.0,237.8 245.7,238.2 247.5,238.8 249.2,239.4 250.9,239.6 252.7,239.6 254.4,239.5 256.1,239.4 257.9,239.2 259.6,239.0 261.4,238.6 263.1,238.3 264.8,238.4 266.6,238.8 268.3,239.4 270.0,239.8 271.8,239.9 273.5,239.6 275.3,239.3 277.0,239.2 278.7,239.3 280.5,239.3 282.2,239.4 283.9,239.4 285.7,239.5 287.4,239.8 289.1,240.0 290.9,239.8 292.6,239.5 294.4,239.3 296.1,239.5 297.8,240.0 299.6,240.6 301.3,240.8 303.0,240.7 304.8,240.4 306.5,240.1 308.3,240.0 310.0,240.1 311.7,240.3 313.5,240.6 315.2,241.0 316.9,241.3 318.7,241.3 320.4,241.0 322.2,240.6 323.9,240.1 325.6,239.6 327.4,239.2 329.1,238.8 330.8,238.6 332.6,238.8 334.3,239.2 336.0,239.7 337.8,239.9 339.5,240.0 341.3,240.1 343.0,240.4 344.7,240.8 346.5,241.1 348.2,241.0 349.9,240.5 351.7,239.9 353.4,239.5 355.2,239.5 356.9,239.7 358.6,239.8 360.4,239.7 362.1,239.3 363.8,238.9 365.6,238.7 367.3,238.8 369.1,238.9 370.8,238.9 372.5,238.7 374.3,238.5 376.0,238.3 377.7,238.2 379.5,238.1 381.2,237.8 382.9,237.6 384.7,237.6 386.4,238.0 388.2,238.5 389.9,238.9 391.6,239.1 393.4,239.2 395.1,239.4 396.8,239.5 398.6,239.3 400.3,238.7 402.1,238.0 403.8,237.3 405.5,236.7 407.3,236.2 409.0,235.9 410.7,235.6 412.5,235.4 414.2,235.3 416.0,235.5 417.7,236.1 419.4,236.5 421.2,236.7 422.9,236.4 424.6,235.9 426.4,235.4 428.1,235.1 429.8,235.1 431.6,235.2 433.3,235.5 435.1,235.7 436.8,235.9 438.5,236.0 440.3,236.3 442.0,236.6 443.7,237.0 445.5,237.4 447.2,237.6 449.0,237.4 450.7,236.9 452.4,236.4 454.2,236.2 455.9,236.5 457.6,237.2 459.4,237.9 461.1,238.5 462.9,238.8" stroke="#7ad151" stroke-width="0.55" fill="none" opacity="0.9"/>
<polyline points="204.0,235.3 205.8,237.9 207.5,237.6 209.2,237.6 211.0,239.3 212.7,240.5 214.5,241.4 216.2,241.7 217.9,242.1 219.7,241.9 221.4,241.4 223.1,240.8 224.9,240.3 226.6,240.2 228.4,240.3 230.1,240.5 231.8,240.7 233.6,240.7 235.3,240.5 237.0,240.2 238.8,239.9 240.5,239.6 242.2,239.4 244.0,239.3 245.7,239.2 247.5,239.0 249.2,238.9 250.9,238.8 252.7,238.7 254.4,238.6 256.1,238.6 257.9,238.9 259.6,239.1 261.4,239.2 263.1,238.9 264.8,238.4 266.6,238.1 268.3,238.1 270.0,238.3 271.8,238.7 273.5,239.1 275.3,239.4 277.0,239.5 278.7,239.6 280.5,239.8 282.2,240.2 283.9,240.6 285.7,240.8 287.4,240.7 289.1,240.5 290.9,240.3 292.6,240.1 294.4,239.9 296.1,239.6 297.8,239.4 299.6,239.4 301.3,239.6 303.0,239.9 304.8,240.0 306.5,240.1 308.3,240.4 310.0,240.9 311.7,241.7 313.5,242.1 315.2,242.0 316.9,241.3 318.7,240.4 320.4,239.7 322.2,239.3 323.9,239.3 325.6,239.4 327.4,239.7 329.1,240.0 330.8,240.4 332.6,240.5 334.3,240.4 336.0,240.2 337.8,240.1 339.5,240.1 341.3,240.2 343.0,240.3 344.7,240.6 346.5,241.3 348.2,242.1 349.9,242.7 351.7,242.9 353.4,242.5 355.2,241.8 356.9,241.0 358.6,240.4 360.4,240.0 362.1,239.8 363.8,239.8 365.6,240.1 367.3,240.6 369.1,241.0 370.8,241.3 372.5,241.3 374.3,241.1 376.0,240.8 377.7,240.6 379.5,240.4 381.2,240.0 382.9,239.6 384.7,239.2 386.4,239.1 388.2,239.1 389.9,239.2 391.6,239.0 393.4,238.5 395.1,237.9 396.8,237.3 398.6,236.8 400.3,236.6 402.1,236.6 403.8,236.8 405.5,237.1 407.3,237.3 409.0,237.1 410.7,236.7 412.5,236.2 414.2,235.8 416.0,235.5 417.7,235.5 419.4,235.6 421.2,235.9 422.9,236.0 424.6,236.1 426.4,236.3 428.1,236.6 429.8,237.1 431.6,237.5 433.3,237.7 435.1,237.7 436.8,237.6 438.5,237.7 440.3,237.9 442.0,238.1 443.7,238.2 445.5,238.1 447.2,238.0 449.0,238.0 450.7,238.2 452.4,238.6 454.2,239.0 455.9,239.2 457.6,239.2 459.4,238.9 461.1,238.6 462.9,238.4" stroke="#54c568" stroke-width="0.55" fill="none" opacity="0.9"/>
<polyline points="204.0,229.5 205.8,234.7 207.5,235.9 209.2,241.8 211.0,239.8 212.7,241.8 214.5,242.2 216.2,241.5 217.9,241.4 219.7,241.3 221.4,241.3 223.1,240.9 224.9,240.3 226.6,239.4 228.4,238.8 230.1,238.8 231.8,239.4 233.6,240.1 235.3,240.5 237.0,240.6 238.8,240.5 240.5,240.4 242.2,240.5 244.0,240.8 245.7,241.2 247.5,241.5 249.2,241.7 250.9,241.8 252.7,241.6 254.4,241.2 256.1,240.6 257.9,239.9 259.6,239.5 261.4,239.3 263.1,239.5 264.8,239.8 266.6,240.3 268.3,240.8 270.0,241.2 271.8,241.3 273.5,241.2 275.3,240.9 277.0,240.5 278.7,240.2 280.5,240.0 282.2,239.7 283.9,239.2 285.7,238.7 287.4,238.5 289.1,238.8 290.9,239.5 292.6,240.1 294.4,240.4 296.1,240.3 297.8,240.2 299.6,240.3 301.3,240.5 303.0,240.5 304.8,240.1 306.5,239.4 308.3,238.5 310.0,238.1 311.7,238.2 313.5,238.9 315.2,239.8 316.9,240.5 318.7,240.6 320.4,240.1 322.2,239.4 323.9,239.0 325.6,239.1 327.4,239.5 329.1,239.9 330.8,240.2 332.6,240.5 334.3,240.6 336.0,240.5 337.8,240.2 339.5,239.8 341.3,239.5 343.0,239.2 344.7,238.9 346.5,238.7 348.2,238.7 349.9,239.1 351.7,239.8 353.4,240.7 355.2,241.4 356.9,241.6 358.6,241.2 360.4,240.7 362.1,240.4 363.8,240.5 365.6,240.6 367.3,240.5 369.1,240.1 370.8,239.5 372.5,238.9 374.3,238.4 376.0,238.1 377.7,238.1 379.5,238.5 381.2,239.2 382.9,239.7 384.7,239.8 386.4,239.5 388.2,239.0 389.9,238.5 391.6,238.0 393.4,237.5 395.1,237.1 396.8,236.9 398.6,236.8 400.3,236.7 402.1,236.3 403.8,235.8 405.5,235.3 407.3,235.0 409.0,235.1 410.7,235.7 412.5,236.5 414.2,237.2 416.0,237.4 417.7,237.3 419.4,236.9 421.2,236.4 422.9,236.2 424.6,236.2 426.4,236.4 428.1,236.6 429.8,236.6 431.6,236.5 433.3,236.1 435.1,235.7 436.8,235.5 438.5,235.6 440.3,236.2 442.0,237.2 443.7,238.1 445.5,238.7 447.2,239.0 449.0,239.0 450.7,239.2 452.4,239.6 454.2,240.0 455.9,240.2 457.6,240.0 459.4,239.6 461.1,239.2 462.9,239.0" stroke="#35b779" stroke-width="0.55" fill="none" opacity="0.9"/>
<polyline points="204.0,241.0 205.8,242.3 207.5,241.1 209.2,237.7 211.0,240.0 212.7,238.6 214.5,238.5 216.2,239.0 217.9,239.1 219.7,239.2 221.4,239.1 223.1,239.1 224.9,239.3 226.6,239.7 228.4,240.1 230.1,240.1 231.8,239.8 233.6,239.4 235.3,239.3 237.0,239.3 238.8,239.5 240.5,239.8 242.2,240.1 244.0,240.2 245.7,240.2 247.5,240.0 249.2,239.8 250.9,239.5 252.7,239.2 254.4,238.7 256.1,238.3 257.9,238.1 259.6,238.0 261.4,238.2 263.1,238.6 264.8,238.9 266.6,239.0 268.3,239.0 270.0,239.0 271.8,239.3 273.5,239.6 275.3,239.9 277.0,239.8 278.7,239.5 280.5,239.0 282.2,238.5 283.9,238.1 285.7,238.0 287.4,238.0 289.1,238.1 290.9,238.4 292.6,238.9 294.4,239.4 296.1,239.7 297.8,239.7 299.6,239.5 301.3,239.4 303.0,239.7 304.8,240.2 306.5,240.6 308.3,240.7 310.0,240.4 311.7,240.0 313.5,239.8 315.2,239.6 316.9,239.6 318.7,239.7 320.4,239.9 322.2,240.3 323.9,240.7 325.6,241.0 327.4,241.2 329.1,241.0 330.8,240.6 332.6,240.1 334.3,239.6 336.0,239.3 337.8,239.1 339.5,239.2 341.3,239.5 343.0,240.0 344.7,240.2 346.5,240.2 348.2,240.0 349.9,239.8 351.7,239.9 353.4,240.2 355.2,240.5 356.9,240.8 358.6,240.9 360.4,240.8 362.1,240.6 363.8,240.3 365.6,239.7 367.3,239.0 369.1,238.2 370.8,237.7 372.5,237.3 374.3,237.1 376.0,236.8 377.7,236.6 379.5,236.5 381.2,236.9 382.9,237.7 384.7,238.8 386.4,239.9 388.2,240.4 389.9,240.2 391.6,239.3 393.4,238.2 395.1,237.2 396.8,236.4 398.6,235.8 400.3,235.4 402.1,235.1 403.8,235.1 405.5,235.3 407.3,235.6 409.0,235.9 410.7,236.1 412.5,236.1 414.2,235.9 416.0,235.5 417.7,235.0 419.4,234.7 421.2,234.7 422.9,235.0 424.6,235.2 426.4,235.2 428.1,235.0 429.8,234.7 431.6,234.6 433.3,234.8 435.1,235.0 436.8,235.3 438.5,235.5 440.3,235.7 442.0,235.8 443.7,235.9 445.5,235.9 447.2,236.1 449.0,236.4 450.7,236.9 452.4,237.6 454.2,238.6 455.9,239.4 457.6,239.8 459.4,239.7 461.1,239.3 462.9,239.0" stroke="#a0da39" stroke-width="0.55" fill="none" opacity="0.9"/>
<polyline points="204.0,244.1 205.8,241.4 207.5,240.0 209.2,237.4 211.0,237.6 212.7,239.2 214.5,239.7 216.2,239.8 217.9,239.9 219.7,240.0 221.4,240.1 223.1,240.1 224.9,240.0 226.6,239.9 228.4,240.1 230.1,240.3 231.8,240.4 233.6,240.2 235.3,239.8 237.0,239.3 238.8,238.8 240.5,238.6 242.2,238.6 244.0,238.8 245.7,238.8 247.5,238.7 249.2,238.5 250.9,238.5 252.7,238.7 254.4,239.2 256.1,239.8 257.9,240.3 259.6,240.5 261.4,240.6 263.1,240.4 264.8,240.3 266.6,240.3 268.3,240.4 270.0,240.6 271.8,240.8 273.5,240.9 275.3,240.9 277.0,240.8 278.7,240.5 280.5,240.2 282.2,239.9 283.9,239.7 285.7,239.8 287.4,239.9 289.1,239.9 290.9,239.6 292.6,239.2 294.4,238.8 296.1,238.5 297.8,238.4 299.6,238.6 301.3,239.0 303.0,239.4 304.8,239.7 306.5,239.8 308.3,239.7 310.0,239.6 311.7,239.6 313.5,239.7 315.2,239.8 316.9,240.0 318.7,240.1 320.4,240.3 322.2,240.6 323.9,240.9 325.6,241.2 327.4,241.5 329.1,241.7 330.8,241.6 332.6,241.2 334.3,240.7 336.0,240.2 337.8,239.6 339.5,239.1 341.3,238.6 343.0,238.3 344.7,238.5 346.5,238.9 348.2,239.3 349.9,239.7 351.7,240.0 353.4,240.5 355.2,241.0 356.9,241.5 358.6,241.8 360.4,241.9 362.1,241.7 363.8,241.4 365.6,241.0 367.3,240.6 369.1,240.3 370.8,240.1 372.5,240.0 374.3,239.7 376.0,239.3 377.7,238.8 379.5,238.2 381.2,237.7 382.9,237.2 384.7,236.8 386.4,236.6 388.2,236.6 389.9,236.8 391.6,237.1 393.4,237.3 395.1,237.5 396.8,237.6 398.6,237.8 400.3,238.1 402.1,238.3 403.8,238.2 405.5,237.7 407.3,236.7 409.0,235.7 410.7,234.8 412.5,234.3 414.2,234.1 416.0,234.1 417.7,234.2 419.4,234.5 421.2,235.1 422.9,235.7 424.6,236.3 426.4,236.7 428.1,236.9 429.8,236.7 431.6,236.3 433.3,235.9 435.1,235.6 436.8,235.4 438.5,235.6 440.3,235.9 442.0,236.3 443.7,236.7 445.5,237.1 447.2,237.5 449.0,238.0 450.7,238.2 452.4,238.1 454.2,237.8 455.9,237.4 457.6,237.1 459.4,237.0 461.1,237.2 462.9,237.5" stroke="#7ad151" stroke-width="0.55" fill="none" opacity="0.9"/>
<polyline points="204.0,231.0 205.8,233.7 207.5,240.9 209.2,238.0 211.0,239.1 212.7,240.8 214.5,241.0 216.2,240.5 217.9,240.2 219.7,240.0 221.4,240.0 223.1,240.2 224.9,240.4 226.6,240.5 228.4,240.5 230.1,240.8 231.8,241.1 233.6,241.2 235.3,240.8 237.0,240.1 238.8,239.3 240.5,238.8 242.2,238.9 244.0,239.4 245.7,240.1 247.5,240.3 249.2,240.0 250.9,239.5 252.7,238.9 254.4,238.5 256.1,238.5 257.9,238.9 259.6,239.8 261.4,240.8 263.1,241.5 264.8,241.7 266.6,241.2 268.3,240.2 270.0,239.2 271.8,238.8 273.5,238.9 275.3,239.3 277.0,239.6 278.7,239.6 280.5,239.5 282.2,239.6 283.9,239.7 285.7,239.9 287.4,240.0 289.1,240.0 290.9,239.7 292.6,239.2 294.4,238.5 296.1,237.9 297.8,237.7 299.6,238.2 301.3,239.0 303.0,239.9 304.8,240.6 306.5,240.9 308.3,240.7 310.0,240.1 311.7,239.4 313.5,238.8 315.2,238.8 316.9,239.1 318.7,239.5 320.4,239.7 322.2,239.7 323.9,239.7 325.6,239.6 327.4,239.6 329.1,239.6 330.8,239.6 332.6,239.8 334.3,240.3 336.0,240.8 337.8,241.2 339.5,241.4 341.3,241.4 343.0,241.5 344.7,241.5 346.5,241.3 348.2,240.9 349.9,240.6 351.7,240.4 353.4,240.5 355.2,240.8 356.9,241.0 358.6,240.9 360.4,240.7 362.1,240.2 363.8,239.8 365.6,239.6 367.3,239.8 369.1,240.2 370.8,240.7 372.5,240.9 374.3,240.9 376.0,240.6 377.7,240.2 379.5,239.7 381.2,239.3 382.9,239.1 384.7,239.1 386.4,239.1 388.2,238.9 389.9,238.5 391.6,238.0 393.4,237.6 395.1,237.5 396.8,237.6 398.6,238.1 400.3,238.5 402.1,238.6 403.8,238.5 405.5,238.3 407.3,238.0 409.0,237.8 410.7,237.7 412.5,237.4 414.2,237.0 416.0,236.5 417.7,235.9 419.4,235.4 421.2,235.1 422.9,234.9 424.6,234.7 426.4,234.4 428.1,234.0 429.8,233.8 431.6,233.9 433.3,234.2 435.1,234.8 436.8,235.5 438.5,236.4 440.3,237.4 442.0,238.1 443.7,238.3 445.5,238.2 447.2,237.9 449.0,237.6 450.7,237.3 452.4,237.2 454.2,237.4 455.9,237.7 457.6,238.2 459.4,238.5 461.1,238.8 462.9,238.9" stroke="#54c568" stroke-width="0.55" fill="none" opacity="0.9"/>
<polyline points="204.0,254.0 205.8,247.1 207.5,241.5 209.2,242.5 211.0,240.9 212.7,241.6 214.5,240.9 216.2,240.5 217.9,240.3 219.7,240.0 221.4,239.6 223.1,239.4 224.9,239.4 226.6,239.5 228.4,239.5 230.1,239.5 231.8,239.6 233.6,239.6 235.3,239.6 237.0,239.5 238.8,239.5 240.5,239.5 242.2,239.6 244.0,239.7 245.7,239.8 247.5,240.0 249.2,240.2 250.9,240.5 252.7,240.7 254.4,240.9 256.1,240.8 257.9,240.6 259.6,240.4 261.4,240.5 263.1,240.8 264.8,241.2 266.6,241.6 268.3,241.9 270.0,242.0 271.8,241.8 273.5,241.5 275.3,241.0 277.0,240.4 278.7,239.9 280.5,239.6 282.2,239.3 283.9,239.2 285.7,239.1 287.4,239.0 289.1,239.0 290.9,239.0 292.6,239.0 294.4,239.1 296.1,239.3 297.8,239.5 299.6,239.7 301.3,239.8 303.0,240.0 304.8,240.1 306.5,240.0 308.3,239.9 310.0,239.8 311.7,239.7 313.5,239.7 315.2,239.7 316.9,239.6 318.7,239.2 320.4,238.8 322.2,238.4 323.9,238.2 325.6,238.2 327.4,238.1 329.1,238.1 330.8,238.0 332.6,237.8 334.3,237.7 336.0,237.8 337.8,238.0 339.5,238.4 341.3,238.7 343.0,238.9 344.7,238.9 346.5,238.9 348.2,238.9 349.9,238.9 351.7,239.0 353.4,239.2 355.2,239.4 356.9,239.6 358.6,239.8 360.4,239.9 362.1,239.7 363.8,239.3 365.6,238.7 367.3,238.1 369.1,237.5 370.8,237.3 372.5,237.2 374.3,237.4 376.0,237.6 377.7,237.9 379.5,238.2 381.2,238.5 382.9,238.7 384.7,238.9 386.4,238.9 388.2,238.9 389.9,238.6 391.6,238.2 393.4,237.8 395.1,237.5 396.8,237.4 398.6,237.5 400.3,237.8 402.1,238.3 403.8,238.6 405.5,238.6 407.3,238.2 409.0,237.6 410.7,236.8 412.5,236.1 414.2,235.4 416.0,234.8 417.7,234.3 419.4,233.9 421.2,233.9 422.9,234.2 424.6,234.7 426.4,235.4 428.1,236.0 429.8,236.4 431.6,236.6 433.3,236.5 435.1,236.4 436.8,236.4 438.5,236.6 440.3,236.9 442.0,237.2 443.7,237.6 445.5,237.9 447.2,238.2 449.0,238.1 450.7,237.6 452.4,237.0 454.2,236.4 455.9,236.3 457.6,236.5 459.4,237.2 461.1,237.9 462.9,238.5" stroke="#35b779" stroke-width="0.55" fill="none" opacity="0.9"/>
<polyline points="204.0,229.8 205.8,231.1 207.5,234.3 209.2,234.8 211.0,240.0 212.7,240.7 214.5,242.9 216.2,242.2 217.9,242.0 219.7,241.5 221.4,241.0 223.1,240.6 224.9,240.3 226.6,240.1 228.4,239.9 230.1,239.5 231.8,239.1 233.6,239.1 235.3,239.6 237.0,240.4 238.8,241.2 240.5,241.6 242.2,241.3 244.0,240.8 245.7,240.2 247.5,239.8 249.2,239.7 250.9,239.8 252.7,240.0 254.4,240.2 256.1,240.4 257.9,240.7 259.6,240.9 261.4,241.1 263.1,241.0 264.8,240.7 266.6,240.2 268.3,239.6 270.0,239.1 271.8,238.8 273.5,238.8 275.3,238.9 277.0,239.1 278.7,239.3 280.5,239.5 282.2,239.5 283.9,239.4 285.7,239.4 287.4,239.4 289.1,239.5 290.9,239.7 292.6,239.7 294.4,239.6 296.1,239.4 297.8,239.2 299.6,239.1 301.3,239.1 303.0,239.2 304.8,239.1 306.5,238.8 308.3,238.5 310.0,238.2 311.7,238.0 313.5,237.9 315.2,237.8 316.9,237.7 318.7,237.7 320.4,237.7 322.2,237.9 323.9,238.3 325.6,238.7 327.4,239.3 329.1,239.9 330.8,240.5 332.6,240.9 334.3,240.9 336.0,240.6 337.8,240.1 339.5,239.7 341.3,239.4 343.0,239.2 344.7,239.3 346.5,239.3 348.2,239.3 349.9,239.1 351.7,238.6 353.4,238.1 355.2,237.9 356.9,238.0 358.6,238.5 360.4,239.0 362.1,239.3 363.8,239.1 365.6,238.7 367.3,238.2 369.1,237.8 370.8,237.6 372.5,237.8 374.3,238.3 376.0,238.9 377.7,239.4 379.5,239.6 381.2,239.6 382.9,239.4 384.7,239.3 386.4,239.2 388.2,238.8 389.9,238.1 391.6,237.4 393.4,236.8 395.1,236.4 396.8,236.3 398.6,236.4 400.3,236.5 402.1,236.6 403.8,236.9 405.5,237.0 407.3,236.8 409.0,236.5 410.7,236.2 412.5,236.0 414.2,236.1 416.0,236.5 417.7,236.9 419.4,237.3 421.2,237.3 422.9,236.9 424.6,236.3 426.4,235.8 428.1,235.7 429.8,235.9 431.6,236.2 433.3,236.4 435.1,236.3 436.8,235.9 438.5,235.6 440.3,235.5 442.0,235.6 443.7,235.7 445.5,235.8 447.2,235.8 449.0,236.1 450.7,236.8 452.4,237.6 454.2,238.5 455.9,239.0 457.6,239.0 459.4,238.8 461.1,238.6 462.9,238.5" stroke="#a0da39" stroke-width="0.55" fill="none" opacity="0.9"/>
<polyline points="204.0,250.9 205.8,245.7 207.5,246.3 209.2,244.9 211.0,241.1 212.7,240.1 214.5,239.2 216.2,240.0 217.9,240.6 219.7,241.2 221.4,241.6 223.1,241.9 224.9,241.9 226.6,241.4 228.4,240.6 230.1,239.6 231.8,238.6 233.6,238.0 235.3,238.1 237.0,238.4 238.8,238.8 240.5,239.0 242.2,239.1 244.0,239.4 245.7,239.7 247.5,240.1 249.2,240.6 250.9,241.0 252.7,241.2 254.4,241.1 256.1,240.8 257.9,240.4 259.6,240.1 261.4,239.9 263.1,239.9 264.8,240.2 266.6,240.5 268.3,240.9 270.0,241.1 271.8,241.3 273.5,241.3 275.3,241.2 277.0,241.0 278.7,240.7 280.5,240.4 282.2,240.2 283.9,240.0 285.7,239.9 287.4,239.8 289.1,239.9 290.9,240.2 292.6,240.4 294.4,240.5 296.1,240.4 297.8,240.1 299.6,239.9 301.3,239.6 303.0,239.3 304.8,239.2 306.5,239.4 308.3,239.7 310.0,239.9 311.7,239.8 313.5,239.5 315.2,239.3 316.9,239.2 318.7,239.3 320.4,239.6 322.2,239.9 323.9,240.3 325.6,240.5 327.4,240.5 329.1,240.4 330.8,240.4 332.6,240.6 334.3,240.8 336.0,241.0 337.8,241.2 339.5,241.4 341.3,241.4 343.0,241.1 344.7,240.2 346.5,239.1 348.2,238.2 349.9,237.6 351.7,237.6 353.4,238.0 355.2,238.5 356.9,239.0 358.6,239.3 360.4,239.4 362.1,239.5 363.8,239.7 365.6,239.7 367.3,239.6 369.1,239.4 370.8,239.2 372.5,239.3 374.3,239.7 376.0,240.1 377.7,240.2 379.5,239.7 381.2,238.8 382.9,237.9 384.7,237.5 386.4,237.7 388.2,238.3 389.9,238.8 391.6,238.9 393.4,238.7 395.1,238.4 396.8,238.2 398.6,238.3 400.3,238.3 402.1,238.1 403.8,237.8 405.5,237.7 407.3,237.8 409.0,238.0 410.7,238.1 412.5,238.1 414.2,238.1 416.0,238.0 417.7,237.8 419.4,237.4 421.2,236.8 422.9,236.4 424.6,236.2 426.4,236.5 428.1,237.0 429.8,237.5 431.6,237.5 433.3,237.0 435.1,236.4 436.8,236.1 438.5,236.3 440.3,236.7 442.0,237.1 443.7,237.5 445.5,237.8 447.2,238.0 449.0,238.0 450.7,237.6 452.4,237.1 454.2,236.8 455.9,236.8 457.6,237.0 459.4,237.1 461.1,237.2 462.9,237.5" stroke="#7ad151" stroke-width="0.55" fill="none" opacity="0.9"/>
<polyline points="204.0,246.9 205.8,244.9 207.5,243.3 209.2,241.9 211.0,239.9 212.7,239.7 214.5,239.6 216.2,239.7 217.9,240.0 219.7,240.3 221.4,240.4 223.1,240.4 224.9,240.3 226.6,240.1 228.4,239.9 230.1,239.7 231.8,239.7 233.6,239.9 235.3,240.2 237.0,240.5 238.8,240.9 240.5,241.1 242.2,241.1 244.0,240.7 245.7,239.9 247.5,238.9 249.2,238.2 250.9,238.0 252.7,238.2 254.4,238.6 256.1,239.1 257.9,239.4 259.6,239.7 261.4,239.7 263.1,239.4 264.8,238.8 266.6,238.2 268.3,237.7 270.0,237.6 271.8,238.1 273.5,238.9 275.3,239.7 277.0,240.2 278.7,240.3 280.5,240.0 282.2,239.6 283.9,239.2 285.7,239.0 287.4,239.0 289.1,239.2 290.9,239.3 292.6,239.4 294.4,239.4 296.1,239.5 297.8,239.5 299.6,239.4 301.3,239.2 303.0,239.2 304.8,239.4 306.5,239.9 308.3,240.4 310.0,240.8 311.7,240.9 313.5,240.5 315.2,239.9 316.9,239.4 318.7,239.2 320.4,239.6 322.2,240.2 323.9,240.7 325.6,240.9 327.4,240.8 329.1,240.7 330.8,240.8 332.6,241.0 334.3,241.4 336.0,241.7 337.8,241.7 339.5,241.6 341.3,241.5 343.0,241.4 344.7,241.4 346.5,241.2 348.2,240.8 349.9,240.2 351.7,239.7 353.4,239.4 355.2,239.1 356.9,238.8 358.6,238.5 360.4,238.2 362.1,238.2 363.8,238.3 365.6,238.6 367.3,238.9 369.1,239.3 370.8,239.6 372.5,239.7 374.3,239.7 376.0,239.4 377.7,239.1 379.5,238.9 381.2,238.8 382.9,238.8 384.7,238.6 386.4,238.2 388.2,237.8 389.9,237.6 391.6,237.8 393.4,238.2 395.1,238.6 396.8,238.8 398.6,238.6 400.3,238.2 402.1,237.7 403.8,237.3 405.5,237.0 407.3,237.0 409.0,237.2 410.7,237.2 412.5,237.2 414.2,237.0 416.0,236.7 417.7,236.3 419.4,235.9 421.2,235.5 422.9,235.2 424.6,235.1 426.4,235.2 428.1,235.4 429.8,235.7 431.6,236.3 433.3,237.0 435.1,237.4 436.8,237.3 438.5,236.6 440.3,235.5 442.0,234.7 443.7,234.3 445.5,234.5 447.2,234.9 449.0,235.5 450.7,235.9 452.4,236.3 454.2,236.8 455.9,237.4 457.6,238.1 459.4,238.6 461.1,238.9 462.9,238.9" stroke="#54c568" stroke-width="0.55" fill="none" opacity="0.9"/>
<polyline points="204.0,236.8 205.8,238.9 207.5,239.2 209.2,237.3 211.0,239.4 212.7,240.8 214.5,240.2 216.2,239.8 217.9,239.6 219.7,239.8 221.4,240.2 223.1,240.7 224.9,241.0 226.6,241.0 228.4,240.7 230.1,240.3 231.8,239.9 233.6,239.5 235.3,239.3 237.0,239.3 238.8,239.5 240.5,239.6 242.2,239.7 244.0,239.6 245.7,239.7 247.5,239.8 249.2,239.9 250.9,239.9 252.7,239.9 254.4,239.7 256.1,239.2 257.9,238.7 259.6,238.4 261.4,238.4 263.1,238.7 264.8,239.2 266.6,239.8 268.3,240.4 270.0,241.0 271.8,241.5 273.5,241.8 275.3,241.9 277.0,241.7 278.7,241.4 280.5,241.2 282.2,240.9 283.9,240.7 285.7,240.5 287.4,240.2 289.1,240.1 290.9,240.3 292.6,240.6 294.4,240.9 296.1,241.0 297.8,240.9 299.6,240.6 301.3,240.1 303.0,239.6 304.8,239.2 306.5,238.9 308.3,238.5 310.0,238.1 311.7,237.6 313.5,237.5 315.2,237.9 316.9,238.7 318.7,239.3 320.4,239.9 322.2,240.2 323.9,240.4 325.6,240.6 327.4,240.7 329.1,240.7 330.8,240.7 332.6,240.6 334.3,240.4 336.0,240.2 337.8,240.2 339.5,240.5 341.3,240.7 343.0,240.9 344.7,240.9 346.5,240.6 348.2,240.1 349.9,239.8 351.7,239.7 353.4,239.7 355.2,239.6 356.9,239.6 358.6,239.9 360.4,240.2 362.1,240.4 363.8,240.3 365.6,239.9 367.3,239.6 369.1,239.7 370.8,239.8 372.5,239.8 374.3,239.5 376.0,239.1 377.7,238.9 379.5,238.6 381.2,238.1 382.9,237.3 384.7,236.6 386.4,236.2 388.2,236.5 389.9,237.2 391.6,238.1 393.4,238.7 395.1,239.1 396.8,239.1 398.6,238.8 400.3,238.4 402.1,237.9 403.8,237.3 405.5,236.7 407.3,236.2 409.0,235.7 410.7,235.5 412.5,235.4 414.2,235.5 416.0,235.6 417.7,235.6 419.4,235.4 421.2,235.0 422.9,234.7 424.6,234.7 426.4,235.2 428.1,236.0 429.8,236.5 431.6,236.7 433.3,236.5 435.1,236.2 436.8,235.9 438.5,235.8 440.3,235.8 442.0,235.9 443.7,236.2 445.5,236.8 447.2,237.5 449.0,238.3 450.7,239.2 452.4,239.8 454.2,240.1 455.9,240.0 457.6,239.7 459.4,239.3 461.1,239.2 462.9,239.1" stroke="#35b779" stroke-width="0.55" fill="none" opacity="0.9"/>
<polyline points="204.0,257.1 205.8,254.4 207.5,249.7 209.2,247.8 211.0,244.4 212.7,239.0 214.5,238.5 216.2,239.1 217.9,239.7 219.7,240.4 221.4,240.9 223.1,241.2 224.9,241.2 226.6,241.0 228.4,240.8 230.1,240.7 231.8,240.7 233.6,240.6 235.3,240.6 237.0,240.7 238.8,240.9 240.5,241.2 242.2,241.2 244.0,241.0 245.7,240.7 247.5,240.4 249.2,240.5 250.9,240.8 252.7,241.1 254.4,241.0 256.1,240.5 257.9,239.8 259.6,239.4 261.4,239.4 263.1,239.9 264.8,240.6 266.6,241.2 268.3,241.6 270.0,241.9 271.8,242.1 273.5,242.2 275.3,242.2 277.0,242.3 278.7,242.3 280.5,242.1 282.2,241.8 283.9,241.4 285.7,241.0 287.4,240.7 289.1,240.6 290.9,240.7 292.6,240.9 294.4,240.8 296.1,240.4 297.8,239.9 299.6,239.6 301.3,239.4 303.0,239.4 304.8,239.6 306.5,239.9 308.3,240.2 310.0,240.4 311.7,240.6 313.5,240.6 315.2,240.3 316.9,239.9 318.7,239.4 320.4,239.2 322.2,239.5 323.9,240.0 325.6,240.7 327.4,241.3 329.1,241.6 330.8,241.6 332.6,241.5 334.3,241.3 336.0,241.0 337.8,240.8 339.5,240.5 341.3,240.3 343.0,240.2 344.7,240.1 346.5,239.9 348.2,239.9 349.9,239.9 351.7,240.1 353.4,240.2 355.2,240.3 356.9,240.6 358.6,240.8 360.4,241.0 362.1,241.0 363.8,240.9 365.6,240.8 367.3,240.7 369.1,240.7 370.8,240.6 372.5,240.4 374.3,240.3 376.0,240.5 377.7,240.8 379.5,241.1 381.2,240.9 382.9,240.3 384.7,239.7 386.4,239.2 388.2,238.6 389.9,237.8 391.6,237.1 393.4,236.5 395.1,236.3 396.8,236.3 398.6,236.4 400.3,236.3 402.1,236.1 403.8,235.8 405.5,235.6 407.3,235.7 409.0,236.1 410.7,236.8 412.5,237.5 414.2,238.2 416.0,238.5 417.7,238.3 419.4,237.8 421.2,237.2 422.9,236.8 424.6,236.3 426.4,235.8 428.1,235.4 429.8,235.2 431.6,235.1 433.3,235.3 435.1,235.6 436.8,236.1 438.5,236.5 440.3,236.5 442.0,236.4 443.7,236.4 445.5,236.5 447.2,236.9 449.0,237.5 450.7,238.1 452.4,238.5 454.2,238.6 455.9,238.3 457.6,237.8 459.4,237.4 461.1,237.3 462.9,237.6" stroke="#a0da39" stroke-width="0.55" fill="none" opacity="0.9"/>
<polyline points="204.0,256.0 205.8,257.4 207.5,257.0 209.2,251.0 211.0,249.7 212.7,245.1 214.5,242.2 216.2,241.5 217.9,241.3 219.7,241.1 221.4,240.9 223.1,240.6 224.9,240.3 226.6,240.0 228.4,239.8 230.1,239.6 231.8,239.5 233.6,239.7 235.3,240.2 237.0,240.6 238.8,240.7 240.5,240.3 242.2,239.7 244.0,239.0 245.7,238.7 247.5,238.8 249.2,239.2 250.9,239.5 252.7,239.8 254.4,239.9 256.1,239.8 257.9,239.4 259.6,238.6 261.4,237.8 263.1,237.4 264.8,237.5 266.6,238.1 268.3,238.9 270.0,239.5 271.8,239.8 273.5,239.7 275.3,239.4 277.0,238.9 278.7,238.4 280.5,238.2 282.2,238.4 283.9,238.9 285.7,239.2 287.4,239.3 289.1,239.3 290.9,239.4 292.6,239.7 294.4,240.0 296.1,240.3 297.8,240.8 299.6,241.2 301.3,241.5 303.0,241.6 304.8,241.4 306.5,241.0 308.3,240.7 310.0,240.3 311.7,240.1 313.5,239.9 315.2,240.0 316.9,240.4 318.7,241.0 320.4,241.6 322.2,241.7 323.9,241.2 325.6,240.4 327.4,239.7 329.1,239.3 330.8,239.2 332.6,239.3 334.3,239.3 336.0,239.3 337.8,239.4 339.5,239.6 341.3,239.9 343.0,240.2 344.7,240.5 346.5,240.6 348.2,240.7 349.9,240.7 351.7,240.5 353.4,240.2 355.2,239.7 356.9,239.3 358.6,239.1 360.4,238.9 362.1,238.7 363.8,238.5 365.6,238.6 367.3,238.8 369.1,239.2 370.8,239.5 372.5,239.4 374.3,239.0 376.0,238.6 377.7,238.5 379.5,238.6 381.2,238.6 382.9,238.4 384.7,238.1 386.4,237.9 388.2,237.8 389.9,237.7 391.6,237.7 393.4,237.7 395.1,237.8 396.8,237.8 398.6,237.9 400.3,237.9 402.1,237.8 403.8,237.7 405.5,237.6 407.3,237.7 409.0,237.7 410.7,237.7 412.5,237.4 414.2,237.1 416.0,236.8 417.7,236.8 419.4,236.9 421.2,237.0 422.9,236.9 424.6,236.7 426.4,236.1 428.1,235.4 429.8,234.7 431.6,234.3 433.3,234.4 435.1,234.8 436.8,235.3 438.5,235.5 440.3,235.4 442.0,235.4 443.7,235.7 445.5,236.3 447.2,237.0 449.0,237.7 450.7,238.6 452.4,239.4 454.2,239.8 455.9,239.7 457.6,239.5 459.4,239.5 461.1,239.5 462.9,239.5" stroke="#7ad151" stroke-width="0.55" fill="none" opacity="0.9"/>
<polyline points="204.0,241.9 205.8,240.0 207.5,240.5 209.2,238.3 211.0,239.9 212.7,238.9 214.5,239.2 216.2,239.3 217.9,239.5 219.7,239.8 221.4,240.0 223.1,240.1 224.9,239.8 226.6,239.4 228.4,238.8 230.1,238.3 231.8,237.8 233.6,237.5 235.3,237.6 237.0,238.2 238.8,239.3 240.5,240.4 242.2,241.1 244.0,241.3 245.7,241.3 247.5,241.3 249.2,241.4 250.9,241.6 252.7,241.6 254.4,241.5 256.1,241.1 257.9,240.7 259.6,240.3 261.4,240.0 263.1,239.9 264.8,239.7 266.6,239.3 268.3,239.0 270.0,238.9 271.8,239.0 273.5,239.2 275.3,239.4 277.0,239.8 278.7,240.3 280.5,241.0 282.2,241.6 283.9,241.7 285.7,241.3 287.4,240.7 289.1,240.0 290.9,239.4 292.6,238.9 294.4,238.8 296.1,239.1 297.8,239.9 299.6,240.6 301.3,240.8 303.0,240.3 304.8,239.4 306.5,238.5 308.3,238.2 310.0,238.5 311.7,239.0 313.5,239.6 315.2,240.0 316.9,240.1 318.7,239.8 320.4,239.2 322.2,238.5 323.9,238.1 325.6,238.0 327.4,238.1 329.1,238.1 330.8,238.2 332.6,238.2 334.3,238.5 336.0,238.9 337.8,239.5 339.5,239.8 341.3,239.7 343.0,239.4 344.7,239.1 346.5,239.0 348.2,239.2 349.9,239.5 351.7,239.9 353.4,240.1 355.2,240.2 356.9,240.0 358.6,240.0 360.4,240.0 362.1,240.1 363.8,240.0 365.6,239.5 367.3,239.0 369.1,238.8 370.8,239.0 372.5,239.3 374.3,239.5 376.0,239.6 377.7,239.5 379.5,239.1 381.2,238.5 382.9,238.1 384.7,237.7 386.4,237.6 388.2,237.4 389.9,237.3 391.6,237.1 393.4,236.9 395.1,236.9 396.8,236.8 398.6,236.7 400.3,236.7 402.1,237.0 403.8,237.4 405.5,237.5 407.3,237.2 409.0,236.7 410.7,236.2 412.5,235.9 414.2,236.0 416.0,236.4 417.7,236.8 419.4,236.9 421.2,236.7 422.9,236.3 424.6,236.1 426.4,236.4 428.1,237.1 429.8,237.9 431.6,238.3 433.3,238.1 435.1,237.6 436.8,237.1 438.5,236.6 440.3,236.2 442.0,236.1 443.7,236.3 445.5,236.4 447.2,236.4 449.0,236.2 450.7,236.0 452.4,235.9 454.2,236.0 455.9,236.3 457.6,236.6 459.4,236.8 461.1,237.1 462.9,237.4" stroke="#54c568" stroke-width="0.55" fill="none" opacity="0.9"/>
<polyline points="204.0,237.8 205.8,244.0 207.5,237.6 209.2,237.3 211.0,238.9 212.7,239.7 214.5,240.1 216.2,240.6 217.9,240.8 219.7,240.8 221.4,240.8 223.1,240.7 224.9,240.7 226.6,240.8 228.4,240.9 230.1,241.1 231.8,241.2 233.6,241.3 235.3,241.4 237.0,241.5 238.8,241.4 240.5,241.4 242.2,241.4 244.0,241.4 245.7,241.5 247.5,241.5 249.2,241.4 250.9,241.2 252.7,241.0 254.4,240.8 256.1,240.4 257.9,240.1 259.6,239.9 261.4,239.8 263.1,239.9 264.8,239.8 266.6,239.7 268.3,239.4 270.0,239.2 271.8,239.1 273.5,239.2 275.3,239.2 277.0,239.2 278.7,239.1 280.5,239.0 282.2,238.9 283.9,239.0 285.7,239.1 287.4,239.3 289.1,239.5 290.9,239.6 292.6,239.6 294.4,239.5 296.1,239.6 297.8,239.8 299.6,240.1 301.3,240.5 303.0,240.8 304.8,241.0 306.5,241.0 308.3,241.0 310.0,241.0 311.7,241.0 313.5,241.1 315.2,241.0 316.9,240.9 318.7,240.7 320.4,240.6 322.2,240.6 323.9,240.8 325.6,241.0 327.4,241.2 329.1,241.3 330.8,241.3 332.6,241.3 334.3,241.2 336.0,241.0 337.8,240.7 339.5,240.4 341.3,240.2 343.0,240.1 344.7,240.1 346.5,240.2 348.2,240.2 349.9,240.2 351.7,240.1 353.4,240.0 355.2,240.0 356.9,240.1 358.6,240.3 360.4,240.4 362.1,240.5 363.8,240.5 365.6,240.5 367.3,240.6 369.1,240.9 370.8,241.3 372.5,241.6 374.3,241.6 376.0,241.4 377.7,241.1 379.5,240.8 381.2,240.5 382.9,240.4 384.7,240.4 386.4,240.5 388.2,240.6 389.9,240.7 391.6,240.9 393.4,241.2 395.1,241.4 396.8,241.7 398.6,241.8 400.3,241.6 402.1,241.4 403.8,241.0 405.5,240.9 407.3,241.0 409.0,241.4 410.7,241.9 412.5,242.2 414.2,242.3 416.0,242.2 417.7,242.1 419.4,242.0 421.2,242.1 422.9,242.0 424.6,241.9 426.4,241.6 428.1,241.3 429.8,241.2 431.6,241.3 433.3,241.7 435.1,242.1 436.8,242.3 438.5,242.3 440.3,242.0 442.0,241.7 443.7,241.5 445.5,241.5 447.2,241.5 449.0,241.6 450.7,241.6 452.4,241.6 454.2,241.4 455.9,241.3 457.6,241.3 459.4,241.5 461.1,241.8 462.9,242.1" stroke="#fde725" stroke-width="0.6" fill="none" opacity="0.9"/>
<polyline points="204.0,229.2 205.8,231.7 207.5,237.3 209.2,233.5 211.0,235.8 212.7,237.1 214.5,238.1 216.2,238.0 217.9,237.8 219.7,237.8 221.4,238.0 223.1,238.2 224.9,238.5 226.6,238.7 228.4,238.8 230.1,238.7 231.8,238.6 233.6,238.4 235.3,238.1 237.0,237.9 238.8,237.6 240.5,237.3 242.2,237.3 244.0,237.5 245.7,238.1 247.5,238.6 249.2,238.8 250.9,238.9 252.7,238.9 254.4,238.9 256.1,238.9 257.9,238.9 259.6,238.8 261.4,238.5 263.1,238.4 264.8,238.5 266.6,238.7 268.3,239.0 270.0,239.2 271.8,239.3 273.5,239.4 275.3,239.5 277.0,239.6 278.7,239.5 280.5,239.4 282.2,239.1 283.9,239.0 285.7,238.9 287.4,238.9 289.1,239.0 290.9,238.9 292.6,238.8 294.4,238.6 296.1,238.6 297.8,238.7 299.6,238.9 301.3,239.0 303.0,239.2 304.8,239.5 306.5,239.7 308.3,239.9 310.0,239.9 311.7,239.8 313.5,239.5 315.2,239.1 316.9,238.4 318.7,237.8 320.4,237.4 322.2,237.4 323.9,237.8 325.6,238.5 327.4,239.2 329.1,239.6 330.8,239.8 332.6,239.9 334.3,239.8 336.0,239.6 337.8,239.3 339.5,239.0 341.3,238.8 343.0,238.8 344.7,238.9 346.5,239.1 348.2,239.3 349.9,239.2 351.7,239.0 353.4,238.7 355.2,238.2 356.9,237.9 358.6,237.7 360.4,237.7 362.1,237.9 363.8,238.3 365.6,238.5 367.3,238.5 369.1,238.2 370.8,237.9 372.5,237.9 374.3,238.2 376.0,238.7 377.7,239.2 379.5,239.5 381.2,239.6 382.9,239.4 384.7,239.1 386.4,238.7 388.2,238.4 389.9,238.0 391.6,237.7 393.4,237.3 395.1,237.0 396.8,236.7 398.6,236.3 400.3,236.0 402.1,235.7 403.8,235.4 405.5,235.3 407.3,235.2 409.0,235.1 410.7,235.1 412.5,235.2 414.2,235.4 416.0,235.7 417.7,235.9 419.4,236.0 421.2,235.9 422.9,235.7 424.6,235.5 426.4,235.2 428.1,235.0 429.8,234.7 431.6,234.6 433.3,234.7 435.1,235.0 436.8,235.3 438.5,235.7 440.3,236.1 442.0,236.5 443.7,236.8 445.5,237.0 447.2,236.9 449.0,236.6 450.7,236.2 452.4,236.0 454.2,236.0 455.9,236.1 457.6,236.2 459.4,236.3 461.1,236.3 462.9,236.3" stroke="#f1e41c" stroke-width="0.6" fill="none" opacity="0.9"/>
<polyline points="204.0,237.4 205.8,240.2 207.5,242.2 209.2,242.4 211.0,240.1 212.7,239.1 214.5,238.7 216.2,238.9 217.9,239.0 219.7,239.0 221.4,238.8 223.1,238.7 224.9,238.7 226.6,238.7 228.4,238.9 230.1,239.2 231.8,239.4 233.6,239.4 235.3,239.3 237.0,239.1 238.8,239.2 240.5,239.3 242.2,239.5 244.0,239.7 245.7,240.0 247.5,240.1 249.2,239.9 250.9,239.6 252.7,239.2 254.4,238.8 256.1,238.7 257.9,238.7 259.6,238.8 261.4,238.8 263.1,238.8 264.8,238.7 266.6,238.8 268.3,238.9 270.0,239.1 271.8,239.4 273.5,239.6 275.3,239.6 277.0,239.5 278.7,239.5 280.5,239.5 282.2,239.4 283.9,239.4 285.7,239.1 287.4,238.7 289.1,238.2 290.9,237.9 292.6,237.8 294.4,237.9 296.1,238.1 297.8,238.2 299.6,238.1 301.3,238.0 303.0,237.9 304.8,237.8 306.5,237.9 308.3,238.1 310.0,238.4 311.7,238.8 313.5,239.1 315.2,239.2 316.9,239.1 318.7,238.8 320.4,238.3 322.2,238.0 323.9,237.7 325.6,237.7 327.4,238.0 329.1,238.4 330.8,238.8 332.6,239.1 334.3,239.2 336.0,239.2 337.8,239.3 339.5,239.3 341.3,239.4 343.0,239.4 344.7,239.4 346.5,239.2 348.2,238.8 349.9,238.3 351.7,237.7 353.4,237.4 355.2,237.4 356.9,237.7 358.6,238.0 360.4,238.1 362.1,238.0 363.8,237.8 365.6,237.6 367.3,237.6 369.1,237.6 370.8,237.8 372.5,237.9 374.3,238.1 376.0,238.3 377.7,238.5 379.5,238.6 381.2,238.7 382.9,238.6 384.7,238.4 386.4,238.1 388.2,237.7 389.9,237.3 391.6,237.0 393.4,236.8 395.1,236.4 396.8,236.0 398.6,235.5 400.3,235.0 402.1,234.7 403.8,234.5 405.5,234.5 407.3,234.7 409.0,235.0 410.7,235.3 412.5,235.6 414.2,235.8 416.0,235.9 417.7,235.9 419.4,235.8 421.2,235.8 422.9,235.9 424.6,235.9 426.4,235.9 428.1,235.7 429.8,235.6 431.6,235.7 433.3,236.0 435.1,236.3 436.8,236.4 438.5,236.4 440.3,236.2 442.0,235.9 443.7,235.4 445.5,235.0 447.2,234.7 449.0,234.6 450.7,234.8 452.4,235.1 454.2,235.3 455.9,235.3 457.6,235.3 459.4,235.1 461.1,235.0 462.9,235.0" stroke="#e2e31a" stroke-width="0.6" fill="none" opacity="0.9"/>
<polyline points="204.0,258.6 205.8,256.6 207.5,251.2 209.2,250.5 211.0,248.0 212.7,243.1 214.5,241.6 216.2,240.9 217.9,240.3 219.7,239.9 221.4,239.7 223.1,239.7 224.9,239.7 226.6,239.6 228.4,239.7 230.1,239.9 231.8,240.2 233.6,240.6 235.3,241.0 237.0,241.3 238.8,241.4 240.5,241.4 242.2,241.3 244.0,241.1 245.7,241.0 247.5,240.8 249.2,240.6 250.9,240.4 252.7,240.3 254.4,240.4 256.1,240.6 257.9,240.7 259.6,240.8 261.4,240.8 263.1,240.8 264.8,240.8 266.6,240.9 268.3,241.2 270.0,241.7 271.8,242.3 273.5,242.4 275.3,242.0 277.0,241.1 278.7,240.2 280.5,239.6 282.2,239.5 283.9,240.0 285.7,240.6 287.4,241.3 289.1,241.6 290.9,241.5 292.6,241.0 294.4,240.4 296.1,240.1 297.8,240.2 299.6,240.7 301.3,241.4 303.0,242.1 304.8,242.6 306.5,242.8 308.3,242.6 310.0,242.2 311.7,241.7 313.5,241.4 315.2,241.2 316.9,241.1 318.7,241.2 320.4,241.4 322.2,241.5 323.9,241.6 325.6,241.7 327.4,241.7 329.1,241.6 330.8,241.3 332.6,240.8 334.3,240.4 336.0,240.1 337.8,240.0 339.5,240.0 341.3,240.2 343.0,240.3 344.7,240.4 346.5,240.5 348.2,240.4 349.9,240.5 351.7,240.7 353.4,241.0 355.2,241.4 356.9,241.6 358.6,241.6 360.4,241.5 362.1,241.4 363.8,241.3 365.6,241.2 367.3,240.8 369.1,240.4 370.8,240.2 372.5,240.1 374.3,240.2 376.0,240.4 377.7,240.6 379.5,240.8 381.2,240.9 382.9,241.0 384.7,241.2 386.4,241.5 388.2,241.7 389.9,242.0 391.6,242.0 393.4,241.9 395.1,241.5 396.8,241.3 398.6,241.1 400.3,241.0 402.1,240.9 403.8,240.8 405.5,240.8 407.3,240.9 409.0,241.1 410.7,241.4 412.5,241.4 414.2,241.4 416.0,241.4 417.7,241.4 419.4,241.6 421.2,241.7 422.9,241.6 424.6,241.5 426.4,241.4 428.1,241.5 429.8,241.8 431.6,242.0 433.3,242.3 435.1,242.5 436.8,242.7 438.5,242.8 440.3,242.8 442.0,242.6 443.7,242.3 445.5,242.0 447.2,241.8 449.0,241.8 450.7,242.0 452.4,242.4 454.2,242.6 455.9,242.6 457.6,242.3 459.4,242.0 461.1,241.9 462.9,242.0" stroke="#fde725" stroke-width="0.6" fill="none" opacity="0.9"/>
<polyline points="204.0,256.3 205.8,250.1 207.5,249.8 209.2,243.8 211.0,243.6 212.7,241.0 214.5,239.4 216.2,239.2 217.9,239.0 219.7,238.7 221.4,238.3 223.1,237.9 224.9,237.5 226.6,237.3 228.4,237.2 230.1,237.3 231.8,237.6 233.6,238.0 235.3,238.5 237.0,238.9 238.8,239.2 240.5,239.3 242.2,239.4 244.0,239.4 245.7,239.4 247.5,239.5 249.2,239.5 250.9,239.5 252.7,239.6 254.4,239.6 256.1,239.8 257.9,239.9 259.6,240.0 261.4,240.1 263.1,240.1 264.8,240.1 266.6,240.2 268.3,240.3 270.0,240.3 271.8,240.0 273.5,239.7 275.3,239.4 277.0,239.3 278.7,239.3 280.5,239.3 282.2,239.3 283.9,239.1 285.7,239.0 287.4,238.8 289.1,238.7 290.9,238.6 292.6,238.7 294.4,238.8 296.1,239.0 297.8,239.1 299.6,239.3 301.3,239.4 303.0,239.5 304.8,239.6 306.5,239.6 308.3,239.6 310.0,239.7 311.7,239.9 313.5,239.8 315.2,239.6 316.9,239.4 318.7,239.1 320.4,239.0 322.2,239.1 323.9,239.2 325.6,239.4 327.4,239.5 329.1,239.6 330.8,239.6 332.6,239.6 334.3,239.7 336.0,239.8 337.8,240.0 339.5,240.1 341.3,240.1 343.0,240.0 344.7,240.0 346.5,240.1 348.2,240.3 349.9,240.4 351.7,240.5 353.4,240.3 355.2,239.9 356.9,239.3 358.6,238.8 360.4,238.6 362.1,238.6 363.8,238.7 365.6,238.8 367.3,238.8 369.1,238.8 370.8,239.0 372.5,239.3 374.3,239.7 376.0,239.8 377.7,239.7 379.5,239.4 381.2,239.1 382.9,238.9 384.7,238.6 386.4,238.3 388.2,238.0 389.9,237.7 391.6,237.6 393.4,237.5 395.1,237.6 396.8,237.6 398.6,237.8 400.3,238.0 402.1,238.2 403.8,238.2 405.5,238.0 407.3,237.7 409.0,237.5 410.7,237.3 412.5,237.2 414.2,237.2 416.0,237.3 417.7,237.3 419.4,237.2 421.2,237.0 422.9,236.7 424.6,236.4 426.4,236.3 428.1,236.3 429.8,236.4 431.6,236.3 433.3,236.1 435.1,236.1 436.8,236.3 438.5,236.7 440.3,237.2 442.0,237.7 443.7,238.1 445.5,238.4 447.2,238.4 449.0,238.2 450.7,238.0 452.4,237.8 454.2,237.8 455.9,237.7 457.6,237.6 459.4,237.6 461.1,237.7 462.9,237.8" stroke="#f1e41c" stroke-width="0.6" fill="none" opacity="0.9"/>
<polyline points="204.0,239.0 205.8,240.1 207.5,244.0 209.2,240.2 211.0,240.0 212.7,239.2 214.5,238.9 216.2,239.3 217.9,239.5 219.7,239.6 221.4,239.5 223.1,239.5 224.9,239.5 226.6,239.6 228.4,239.8 230.1,239.9 231.8,239.8 233.6,239.6 235.3,239.5 237.0,239.5 238.8,239.7 240.5,239.9 242.2,240.1 244.0,240.1 245.7,239.9 247.5,239.6 249.2,239.4 250.9,239.5 252.7,240.0 254.4,240.5 256.1,240.8 257.9,240.8 259.6,240.7 261.4,240.6 263.1,240.7 264.8,240.9 266.6,241.0 268.3,240.9 270.0,240.7 271.8,240.5 273.5,240.5 275.3,240.3 277.0,240.0 278.7,239.6 280.5,239.3 282.2,239.2 283.9,239.2 285.7,239.3 287.4,239.4 289.1,239.7 290.9,240.0 292.6,240.4 294.4,240.7 296.1,240.6 297.8,240.4 299.6,239.9 301.3,239.5 303.0,239.3 304.8,239.3 306.5,239.7 308.3,240.3 310.0,240.8 311.7,241.1 313.5,241.2 315.2,241.1 316.9,240.8 318.7,240.4 320.4,239.9 322.2,239.5 323.9,239.1 325.6,238.9 327.4,238.8 329.1,238.8 330.8,238.8 332.6,238.8 334.3,238.9 336.0,239.0 337.8,239.2 339.5,239.2 341.3,239.1 343.0,239.2 344.7,239.4 346.5,239.7 348.2,240.0 349.9,240.3 351.7,240.4 353.4,240.4 355.2,240.3 356.9,240.1 358.6,239.9 360.4,239.5 362.1,239.2 363.8,238.8 365.6,238.6 367.3,238.6 369.1,238.7 370.8,238.9 372.5,239.3 374.3,239.5 376.0,239.6 377.7,239.6 379.5,239.6 381.2,239.5 382.9,239.5 384.7,239.5 386.4,239.5 388.2,239.5 389.9,239.5 391.6,239.6 393.4,239.9 395.1,240.3 396.8,240.7 398.6,240.9 400.3,240.8 402.1,240.6 403.8,240.4 405.5,240.3 407.3,240.3 409.0,240.2 410.7,239.8 412.5,239.4 414.2,239.0 416.0,238.8 417.7,238.7 419.4,238.7 421.2,238.9 422.9,239.2 424.6,239.7 426.4,240.0 428.1,240.2 429.8,240.3 431.6,240.4 433.3,240.3 435.1,240.3 436.8,240.3 438.5,240.3 440.3,240.2 442.0,239.9 443.7,239.5 445.5,239.1 447.2,239.0 449.0,239.3 450.7,239.8 452.4,240.4 454.2,240.9 455.9,241.1 457.6,241.1 459.4,241.0 461.1,240.8 462.9,240.7" stroke="#e2e31a" stroke-width="0.6" fill="none" opacity="0.9"/>
<polyline points="204.0,238.2 205.8,241.0 207.5,242.4 209.2,240.6 211.0,239.1 212.7,240.5 214.5,240.5 216.2,240.4 217.9,240.5 219.7,240.6 221.4,240.6 223.1,240.6 224.9,240.4 226.6,240.3 228.4,240.3 230.1,240.2 231.8,239.9 233.6,239.5 235.3,239.3 237.0,239.3 238.8,239.6 240.5,240.2 242.2,240.8 244.0,241.4 245.7,241.8 247.5,242.0 249.2,241.9 250.9,241.6 252.7,241.3 254.4,241.1 256.1,241.0 257.9,241.0 259.6,241.0 261.4,241.1 263.1,241.2 264.8,241.3 266.6,241.5 268.3,241.6 270.0,241.5 271.8,241.1 273.5,240.6 275.3,240.0 277.0,239.7 278.7,239.6 280.5,239.7 282.2,239.8 283.9,240.0 285.7,240.1 287.4,240.3 289.1,240.4 290.9,240.4 292.6,240.5 294.4,240.6 296.1,240.6 297.8,240.5 299.6,240.5 301.3,240.6 303.0,240.9 304.8,241.2 306.5,241.4 308.3,241.5 310.0,241.6 311.7,241.7 313.5,241.6 315.2,241.5 316.9,241.3 318.7,241.2 320.4,241.2 322.2,241.3 323.9,241.4 325.6,241.3 327.4,241.1 329.1,240.9 330.8,240.7 332.6,240.7 334.3,240.7 336.0,240.8 337.8,240.9 339.5,241.2 341.3,241.5 343.0,241.8 344.7,241.9 346.5,241.8 348.2,241.4 349.9,240.9 351.7,240.6 353.4,240.5 355.2,240.5 356.9,240.5 358.6,240.5 360.4,240.6 362.1,240.7 363.8,240.9 365.6,241.0 367.3,241.2 369.1,241.2 370.8,241.2 372.5,241.1 374.3,240.7 376.0,240.3 377.7,240.1 379.5,240.1 381.2,240.5 382.9,241.1 384.7,241.8 386.4,242.6 388.2,243.0 389.9,243.0 391.6,242.6 393.4,242.3 395.1,242.0 396.8,242.1 398.6,242.4 400.3,242.7 402.1,242.8 403.8,242.7 405.5,242.4 407.3,242.3 409.0,242.1 410.7,242.1 412.5,241.9 414.2,241.7 416.0,241.8 417.7,242.0 419.4,242.3 421.2,242.5 422.9,242.5 424.6,242.2 426.4,241.8 428.1,241.5 429.8,241.4 431.6,241.5 433.3,241.7 435.1,242.0 436.8,242.2 438.5,242.5 440.3,242.6 442.0,242.6 443.7,242.3 445.5,241.9 447.2,241.7 449.0,241.7 450.7,241.8 452.4,242.0 454.2,242.2 455.9,242.2 457.6,242.2 459.4,242.3 461.1,242.3 462.9,242.3" stroke="#fde725" stroke-width="0.6" fill="none" opacity="0.9"/>
<polyline points="204.0,231.5 205.8,226.7 207.5,230.6 209.2,232.4 211.0,237.5 212.7,238.1 214.5,239.5 216.2,239.7 217.9,240.1 219.7,240.5 221.4,240.9 223.1,241.0 224.9,240.6 226.6,239.8 228.4,239.0 230.1,238.6 231.8,238.7 233.6,239.2 235.3,239.5 237.0,239.5 238.8,239.3 240.5,239.0 242.2,239.1 244.0,239.6 245.7,240.4 247.5,240.9 249.2,240.9 250.9,240.5 252.7,239.9 254.4,239.4 256.1,239.1 257.9,239.1 259.6,239.1 261.4,239.2 263.1,239.3 264.8,239.4 266.6,239.5 268.3,239.7 270.0,240.1 271.8,240.7 273.5,241.3 275.3,241.6 277.0,241.5 278.7,240.9 280.5,240.1 282.2,239.3 283.9,238.7 285.7,238.5 287.4,238.7 289.1,239.1 290.9,239.5 292.6,239.9 294.4,240.1 296.1,240.2 297.8,240.3 299.6,240.5 301.3,240.6 303.0,240.6 304.8,240.4 306.5,240.3 308.3,240.2 310.0,240.3 311.7,240.4 313.5,240.4 315.2,240.3 316.9,240.2 318.7,240.1 320.4,239.9 322.2,239.7 323.9,239.6 325.6,239.4 327.4,239.3 329.1,239.2 330.8,239.0 332.6,238.8 334.3,238.5 336.0,238.3 337.8,238.1 339.5,238.1 341.3,238.3 343.0,238.6 344.7,239.0 346.5,239.4 348.2,239.6 349.9,239.5 351.7,239.3 353.4,239.3 355.2,239.4 356.9,239.7 358.6,240.0 360.4,240.1 362.1,239.8 363.8,239.4 365.6,239.0 367.3,238.9 369.1,239.1 370.8,239.4 372.5,239.5 374.3,239.6 376.0,239.6 377.7,239.8 379.5,239.9 381.2,239.8 382.9,239.7 384.7,239.5 386.4,239.6 388.2,239.8 389.9,240.0 391.6,240.1 393.4,239.9 395.1,239.6 396.8,239.3 398.6,238.9 400.3,238.8 402.1,238.8 403.8,238.9 405.5,239.0 407.3,238.9 409.0,238.7 410.7,238.6 412.5,238.5 414.2,238.5 416.0,238.6 417.7,238.7 419.4,238.7 421.2,238.5 422.9,238.3 424.6,238.0 426.4,237.9 428.1,237.9 429.8,238.1 431.6,238.3 433.3,238.6 435.1,239.0 436.8,239.2 438.5,239.3 440.3,239.2 442.0,239.1 443.7,238.9 445.5,238.7 447.2,238.4 449.0,238.1 450.7,238.0 452.4,238.1 454.2,238.4 455.9,238.6 457.6,238.9 459.4,239.0 461.1,239.1 462.9,239.0" stroke="#f1e41c" stroke-width="0.6" fill="none" opacity="0.9"/>
<polyline points="204.0,227.1 205.8,230.7 207.5,232.2 209.2,230.4 211.0,236.3 212.7,236.6 214.5,238.4 216.2,238.6 217.9,239.0 219.7,239.3 221.4,239.5 223.1,239.6 224.9,239.6 226.6,239.5 228.4,239.4 230.1,239.3 231.8,239.2 233.6,239.2 235.3,239.1 237.0,238.9 238.8,238.5 240.5,238.1 242.2,237.9 244.0,237.9 245.7,238.1 247.5,238.4 249.2,238.8 250.9,239.0 252.7,239.2 254.4,239.5 256.1,239.6 257.9,239.7 259.6,239.7 261.4,239.6 263.1,239.6 264.8,239.7 266.6,239.9 268.3,240.1 270.0,240.1 271.8,240.1 273.5,239.9 275.3,239.8 277.0,239.9 278.7,239.9 280.5,239.9 282.2,239.6 283.9,239.2 285.7,238.6 287.4,238.2 289.1,238.0 290.9,238.1 292.6,238.4 294.4,238.7 296.1,239.0 297.8,239.2 299.6,239.2 301.3,239.0 303.0,238.8 304.8,238.6 306.5,238.6 308.3,238.6 310.0,238.7 311.7,238.8 313.5,238.9 315.2,239.0 316.9,239.2 318.7,239.4 320.4,239.5 322.2,239.6 323.9,239.7 325.6,239.8 327.4,240.0 329.1,240.4 330.8,240.9 332.6,241.2 334.3,241.1 336.0,240.8 337.8,240.5 339.5,240.2 341.3,240.0 343.0,239.7 344.7,239.3 346.5,238.8 348.2,238.4 349.9,238.3 351.7,238.4 353.4,238.8 355.2,239.4 356.9,239.8 358.6,239.9 360.4,239.7 362.1,239.4 363.8,239.0 365.6,238.7 367.3,238.5 369.1,238.4 370.8,238.4 372.5,238.6 374.3,238.9 376.0,239.2 377.7,239.3 379.5,239.3 381.2,239.2 382.9,238.9 384.7,238.7 386.4,238.5 388.2,238.3 389.9,238.2 391.6,238.1 393.4,238.0 395.1,237.9 396.8,237.8 398.6,237.8 400.3,237.9 402.1,238.0 403.8,238.0 405.5,238.0 407.3,237.8 409.0,237.8 410.7,237.7 412.5,237.7 414.2,237.7 416.0,237.6 417.7,237.5 419.4,237.4 421.2,237.2 422.9,237.0 424.6,236.8 426.4,236.7 428.1,236.7 429.8,236.7 431.6,236.9 433.3,237.2 435.1,237.5 436.8,237.8 438.5,238.0 440.3,238.2 442.0,238.3 443.7,238.3 445.5,238.3 447.2,238.1 449.0,237.8 450.7,237.7 452.4,237.7 454.2,237.8 455.9,238.0 457.6,238.1 459.4,238.0 461.1,238.0 462.9,238.0" stroke="#e2e31a" stroke-width="0.6" fill="none" opacity="0.9"/>
<polyline points="204.0,239.0 205.8,238.0 207.5,238.9 209.2,238.5 211.0,241.0 212.7,241.7 214.5,241.3 216.2,240.7 217.9,240.3 219.7,240.1 221.4,240.2 223.1,240.2 224.9,240.2 226.6,240.3 228.4,240.4 230.1,240.4 231.8,240.4 233.6,240.2 235.3,239.9 237.0,239.7 238.8,239.5 240.5,239.6 242.2,239.8 244.0,240.0 245.7,240.0 247.5,239.8 249.2,239.5 250.9,239.2 252.7,239.1 254.4,239.1 256.1,239.1 257.9,239.2 259.6,239.2 261.4,239.4 263.1,239.8 264.8,240.1 266.6,240.2 268.3,240.1 270.0,240.0 271.8,239.8 273.5,239.8 275.3,239.8 277.0,239.9 278.7,240.2 280.5,240.6 282.2,240.9 283.9,241.0 285.7,240.9 287.4,240.8 289.1,240.9 290.9,241.1 292.6,241.5 294.4,241.6 296.1,241.5 297.8,241.1 299.6,240.9 301.3,240.8 303.0,240.8 304.8,240.9 306.5,240.9 308.3,240.9 310.0,240.9 311.7,240.8 313.5,240.7 315.2,240.7 316.9,240.7 318.7,240.8 320.4,240.8 322.2,240.8 323.9,240.7 325.6,240.6 327.4,240.3 329.1,240.0 330.8,239.7 332.6,239.7 334.3,239.8 336.0,240.0 337.8,240.2 339.5,240.3 341.3,240.3 343.0,240.3 344.7,240.3 346.5,240.3 348.2,240.4 349.9,240.4 351.7,240.3 353.4,240.1 355.2,239.9 356.9,239.6 358.6,239.4 360.4,239.2 362.1,239.1 363.8,239.1 365.6,239.2 367.3,239.4 369.1,239.6 370.8,239.9 372.5,240.1 374.3,240.2 376.0,240.1 377.7,239.9 379.5,239.5 381.2,239.0 382.9,238.5 384.7,238.1 386.4,238.1 388.2,238.4 389.9,238.8 391.6,239.4 393.4,239.8 395.1,240.0 396.8,240.1 398.6,240.1 400.3,240.1 402.1,239.9 403.8,239.7 405.5,239.6 407.3,239.5 409.0,239.4 410.7,239.5 412.5,239.6 414.2,239.7 416.0,239.7 417.7,239.6 419.4,239.6 421.2,239.7 422.9,240.0 424.6,240.1 426.4,240.1 428.1,239.9 429.8,239.6 431.6,239.4 433.3,239.2 435.1,239.1 436.8,239.2 438.5,239.3 440.3,239.4 442.0,239.5 443.7,239.5 445.5,239.5 447.2,239.4 449.0,239.5 450.7,239.7 452.4,240.1 454.2,240.5 455.9,240.6 457.6,240.5 459.4,240.3 461.1,240.1 462.9,240.1" stroke="#fde725" stroke-width="0.6" fill="none" opacity="0.9"/>
<polyline points="204.0,224.3 205.8,232.3 207.5,234.4 209.2,237.2 211.0,236.0 212.7,238.5 214.5,239.8 216.2,239.8 217.9,240.1 219.7,240.3 221.4,240.5 223.1,240.5 224.9,240.5 226.6,240.5 228.4,240.7 230.1,241.0 231.8,241.4 233.6,241.8 235.3,242.0 237.0,242.0 238.8,241.9 240.5,241.8 242.2,241.8 244.0,241.8 245.7,241.7 247.5,241.5 249.2,241.2 250.9,240.9 252.7,240.7 254.4,240.7 256.1,240.7 257.9,240.9 259.6,241.0 261.4,241.0 263.1,240.8 264.8,240.6 266.6,240.5 268.3,240.6 270.0,241.0 271.8,241.3 273.5,241.4 275.3,241.2 277.0,240.9 278.7,240.8 280.5,240.9 282.2,241.1 283.9,241.2 285.7,241.2 287.4,241.3 289.1,241.2 290.9,240.8 292.6,240.5 294.4,240.3 296.1,240.4 297.8,240.7 299.6,240.8 301.3,240.7 303.0,240.7 304.8,240.6 306.5,240.4 308.3,240.2 310.0,239.9 311.7,239.6 313.5,239.5 315.2,239.7 316.9,240.2 318.7,240.7 320.4,241.2 322.2,241.6 323.9,241.9 325.6,242.1 327.4,242.3 329.1,242.5 330.8,242.6 332.6,242.4 334.3,242.0 336.0,241.5 337.8,241.2 339.5,240.9 341.3,240.8 343.0,240.7 344.7,240.5 346.5,240.3 348.2,240.1 349.9,240.1 351.7,240.3 353.4,240.7 355.2,241.1 356.9,241.3 358.6,241.3 360.4,241.0 362.1,240.6 363.8,240.1 365.6,239.8 367.3,239.5 369.1,239.4 370.8,239.3 372.5,239.3 374.3,239.3 376.0,239.5 377.7,239.9 379.5,240.3 381.2,240.6 382.9,240.5 384.7,240.3 386.4,240.0 388.2,240.0 389.9,240.0 391.6,240.0 393.4,240.2 395.1,240.6 396.8,241.1 398.6,241.6 400.3,242.1 402.1,242.2 403.8,242.2 405.5,242.0 407.3,241.7 409.0,241.4 410.7,241.2 412.5,241.0 414.2,241.0 416.0,241.4 417.7,241.8 419.4,241.9 421.2,241.8 422.9,241.4 424.6,241.2 426.4,241.1 428.1,241.2 429.8,241.4 431.6,241.5 433.3,241.6 435.1,241.5 436.8,241.4 438.5,241.3 440.3,241.3 442.0,241.4 443.7,241.4 445.5,241.5 447.2,241.6 449.0,241.7 450.7,241.7 452.4,241.6 454.2,241.4 455.9,241.2 457.6,241.2 459.4,241.3 461.1,241.5 462.9,241.8" stroke="#f1e41c" stroke-width="0.6" fill="none" opacity="0.9"/>
<polyline points="204.0,235.8 205.8,241.3 207.5,240.6 209.2,239.1 211.0,239.6 212.7,238.7 214.5,238.3 216.2,238.1 217.9,238.1 219.7,238.1 221.4,238.3 223.1,238.4 224.9,238.4 226.6,238.5 228.4,238.5 230.1,238.6 231.8,238.7 233.6,238.6 235.3,238.5 237.0,238.4 238.8,238.3 240.5,238.5 242.2,238.6 244.0,238.5 245.7,238.3 247.5,238.1 249.2,238.0 250.9,238.0 252.7,238.3 254.4,238.6 256.1,238.9 257.9,239.1 259.6,239.1 261.4,239.2 263.1,239.3 264.8,239.6 266.6,239.9 268.3,240.2 270.0,240.2 271.8,239.9 273.5,239.5 275.3,239.0 277.0,238.7 278.7,238.7 280.5,238.9 282.2,239.0 283.9,239.0 285.7,238.9 287.4,238.7 289.1,238.7 290.9,238.7 292.6,238.7 294.4,238.8 296.1,239.0 297.8,239.3 299.6,239.4 301.3,239.5 303.0,239.4 304.8,239.4 306.5,239.5 308.3,239.7 310.0,239.9 311.7,239.8 313.5,239.5 315.2,239.1 316.9,238.8 318.7,238.7 320.4,238.8 322.2,238.9 323.9,239.0 325.6,239.0 327.4,238.8 329.1,238.6 330.8,238.4 332.6,238.3 334.3,238.5 336.0,238.9 337.8,239.2 339.5,239.3 341.3,239.0 343.0,238.5 344.7,238.2 346.5,238.3 348.2,238.5 349.9,238.7 351.7,238.8 353.4,238.9 355.2,239.1 356.9,239.3 358.6,239.5 360.4,239.6 362.1,239.5 363.8,239.4 365.6,239.3 367.3,239.1 369.1,238.9 370.8,238.6 372.5,238.5 374.3,238.5 376.0,238.7 377.7,238.8 379.5,238.9 381.2,238.8 382.9,238.7 384.7,238.5 386.4,238.2 388.2,237.9 389.9,237.6 391.6,237.2 393.4,236.8 395.1,236.4 396.8,236.2 398.6,236.2 400.3,236.4 402.1,236.6 403.8,236.8 405.5,236.8 407.3,236.6 409.0,236.4 410.7,236.1 412.5,236.1 414.2,236.3 416.0,236.6 417.7,237.1 419.4,237.5 421.2,237.7 422.9,237.8 424.6,237.7 426.4,237.5 428.1,237.2 429.8,236.8 431.6,236.4 433.3,236.0 435.1,235.8 436.8,235.7 438.5,235.8 440.3,235.9 442.0,236.1 443.7,236.4 445.5,236.7 447.2,236.9 449.0,236.8 450.7,236.4 452.4,235.8 454.2,235.2 455.9,234.9 457.6,234.7 459.4,234.7 461.1,234.8 462.9,235.1" stroke="#e2e31a" stroke-width="0.6" fill="none" opacity="0.9"/>
<polyline points="204.0,243.0 205.8,246.1 207.5,239.9 209.2,242.8 211.0,242.6 212.7,239.8 214.5,239.0 216.2,238.9 217.9,239.0 219.7,239.1 221.4,239.4 223.1,239.7 224.9,239.9 226.6,240.0 228.4,240.0 230.1,239.8 231.8,239.7 233.6,239.6 235.3,239.8 237.0,240.1 238.8,240.4 240.5,240.6 242.2,240.5 244.0,240.2 245.7,240.0 247.5,239.9 249.2,240.0 250.9,240.1 252.7,240.2 254.4,240.0 256.1,239.8 257.9,239.4 259.6,239.1 261.4,238.8 263.1,238.6 264.8,238.6 266.6,238.7 268.3,238.9 270.0,239.1 271.8,239.1 273.5,239.0 275.3,238.9 277.0,239.0 278.7,239.0 280.5,239.0 282.2,238.8 283.9,238.6 285.7,238.3 287.4,238.2 289.1,238.2 290.9,238.4 292.6,238.5 294.4,238.7 296.1,238.7 297.8,238.6 299.6,238.5 301.3,238.4 303.0,238.5 304.8,238.6 306.5,238.8 308.3,238.9 310.0,239.1 311.7,239.2 313.5,239.3 315.2,239.2 316.9,239.1 318.7,238.9 320.4,238.9 322.2,239.1 323.9,239.3 325.6,239.4 327.4,239.3 329.1,239.1 330.8,238.8 332.6,238.6 334.3,238.4 336.0,238.4 337.8,238.4 339.5,238.7 341.3,239.1 343.0,239.5 344.7,239.9 346.5,240.2 348.2,240.4 349.9,240.6 351.7,240.5 353.4,240.3 355.2,239.9 356.9,239.8 358.6,239.9 360.4,240.2 362.1,240.3 363.8,240.3 365.6,240.2 367.3,240.3 369.1,240.4 370.8,240.6 372.5,240.8 374.3,240.7 376.0,240.5 377.7,240.0 379.5,239.4 381.2,238.9 382.9,238.5 384.7,238.4 386.4,238.3 388.2,238.1 389.9,238.0 391.6,237.8 393.4,237.7 395.1,237.6 396.8,237.3 398.6,237.1 400.3,237.1 402.1,237.3 403.8,237.6 405.5,237.9 407.3,238.0 409.0,237.8 410.7,237.6 412.5,237.5 414.2,237.5 416.0,237.4 417.7,237.4 419.4,237.4 421.2,237.4 422.9,237.4 424.6,237.3 426.4,237.2 428.1,237.2 429.8,237.2 431.6,237.1 433.3,237.0 435.1,236.9 436.8,236.9 438.5,237.1 440.3,237.3 442.0,237.5 443.7,237.5 445.5,237.3 447.2,236.9 449.0,236.7 450.7,236.6 452.4,236.5 454.2,236.5 455.9,236.6 457.6,236.8 459.4,237.1 461.1,237.5 462.9,237.9" stroke="#fde725" stroke-width="0.6" fill="none" opacity="0.9"/>
<polyline points="204.0,251.2 205.8,249.9 207.5,248.4 209.2,244.7 211.0,243.0 212.7,240.7 214.5,241.0 216.2,240.6 217.9,240.2 219.7,239.9 221.4,239.8 223.1,240.0 224.9,240.3 226.6,240.7 228.4,241.1 230.1,241.1 231.8,240.8 233.6,240.3 235.3,239.8 237.0,239.7 238.8,239.8 240.5,240.1 242.2,240.5 244.0,241.0 245.7,241.5 247.5,241.9 249.2,242.2 250.9,242.4 252.7,242.4 254.4,242.3 256.1,242.2 257.9,242.1 259.6,242.0 261.4,242.0 263.1,242.0 264.8,241.7 266.6,241.3 268.3,240.7 270.0,240.2 271.8,239.9 273.5,239.9 275.3,240.0 277.0,240.1 278.7,240.2 280.5,240.3 282.2,240.4 283.9,240.4 285.7,240.4 287.4,240.3 289.1,240.1 290.9,240.0 292.6,240.0 294.4,240.2 296.1,240.5 297.8,240.9 299.6,241.2 301.3,241.3 303.0,241.1 304.8,240.9 306.5,240.7 308.3,240.8 310.0,240.9 311.7,240.9 313.5,240.9 315.2,240.9 316.9,241.1 318.7,241.3 320.4,241.4 322.2,241.5 323.9,241.4 325.6,241.3 327.4,241.0 329.1,240.8 330.8,240.6 332.6,240.5 334.3,240.3 336.0,240.2 337.8,240.2 339.5,240.4 341.3,240.4 343.0,240.4 344.7,240.2 346.5,240.3 348.2,240.6 349.9,241.1 351.7,241.6 353.4,241.8 355.2,241.7 356.9,241.4 358.6,241.3 360.4,241.2 362.1,241.2 363.8,241.4 365.6,241.5 367.3,241.5 369.1,241.4 370.8,241.0 372.5,240.6 374.3,240.4 376.0,240.3 377.7,240.3 379.5,240.2 381.2,240.2 382.9,240.1 384.7,240.3 386.4,240.7 388.2,241.1 389.9,241.6 391.6,242.0 393.4,242.4 395.1,242.8 396.8,243.1 398.6,243.2 400.3,243.1 402.1,242.8 403.8,242.7 405.5,242.6 407.3,242.7 409.0,242.8 410.7,242.6 412.5,242.3 414.2,242.1 416.0,242.1 417.7,242.3 419.4,242.6 421.2,243.0 422.9,243.2 424.6,243.3 426.4,243.2 428.1,243.0 429.8,242.9 431.6,242.9 433.3,243.1 435.1,243.3 436.8,243.4 438.5,243.3 440.3,243.1 442.0,242.9 443.7,242.7 445.5,242.5 447.2,242.3 449.0,242.2 450.7,242.4 452.4,242.8 454.2,243.2 455.9,243.3 457.6,243.3 459.4,243.1 461.1,243.0 462.9,243.0" stroke="#f1e41c" stroke-width="0.6" fill="none" opacity="0.9"/>
<polyline points="204.0,249.4 205.8,244.2 207.5,243.7 209.2,242.8 211.0,241.1 212.7,240.2 214.5,239.6 216.2,239.6 217.9,239.4 219.7,239.0 221.4,238.6 223.1,238.4 224.9,238.4 226.6,238.6 228.4,238.8 230.1,238.9 231.8,238.9 233.6,238.9 235.3,239.0 237.0,239.2 238.8,239.3 240.5,239.4 242.2,239.3 244.0,239.1 245.7,238.7 247.5,238.4 249.2,238.3 250.9,238.5 252.7,238.8 254.4,239.2 256.1,239.5 257.9,239.9 259.6,240.2 261.4,240.5 263.1,240.6 264.8,240.5 266.6,240.4 268.3,240.2 270.0,239.7 271.8,239.3 273.5,238.9 275.3,238.7 277.0,238.7 278.7,239.0 280.5,239.5 282.2,239.9 283.9,240.2 285.7,240.0 287.4,239.7 289.1,239.2 290.9,238.8 292.6,238.7 294.4,238.9 296.1,239.4 297.8,239.8 299.6,240.0 301.3,240.0 303.0,239.7 304.8,239.4 306.5,239.0 308.3,238.7 310.0,238.5 311.7,238.6 313.5,238.8 315.2,239.1 316.9,239.5 318.7,239.8 320.4,240.0 322.2,240.2 323.9,240.3 325.6,240.4 327.4,240.1 329.1,239.6 330.8,238.8 332.6,238.2 334.3,237.8 336.0,237.9 337.8,238.2 339.5,238.7 341.3,239.1 343.0,239.4 344.7,239.5 346.5,239.3 348.2,239.1 349.9,239.0 351.7,239.0 353.4,239.1 355.2,239.2 356.9,239.2 358.6,239.2 360.4,239.2 362.1,239.3 363.8,239.4 365.6,239.5 367.3,239.6 369.1,239.6 370.8,239.4 372.5,239.0 374.3,238.6 376.0,238.4 377.7,238.2 379.5,237.9 381.2,237.6 382.9,237.4 384.7,237.4 386.4,237.5 388.2,237.5 389.9,237.3 391.6,237.2 393.4,237.1 395.1,237.3 396.8,237.5 398.6,237.7 400.3,237.8 402.1,238.0 403.8,238.1 405.5,238.3 407.3,238.2 409.0,238.0 410.7,237.6 412.5,237.1 414.2,236.7 416.0,236.5 417.7,236.4 419.4,236.3 421.2,236.2 422.9,236.3 424.6,236.5 426.4,236.9 428.1,237.5 429.8,237.9 431.6,238.1 433.3,238.1 435.1,237.9 436.8,237.7 438.5,237.7 440.3,237.9 442.0,238.2 443.7,238.3 445.5,238.2 447.2,237.8 449.0,237.5 450.7,237.2 452.4,237.0 454.2,236.7 455.9,236.5 457.6,236.4 459.4,236.5 461.1,236.8 462.9,237.1" stroke="#e2e31a" stroke-width="0.6" fill="none" opacity="0.9"/>
<polyline points="204.0,224.3 205.8,232.8 207.5,230.2 209.2,235.9 211.0,237.6 212.7,238.9 214.5,240.9 216.2,240.4 217.9,239.9 219.7,239.6 221.4,239.6 223.1,240.0 224.9,240.5 226.6,240.9 228.4,241.0 230.1,240.9 231.8,240.7 233.6,240.3 235.3,239.8 237.0,239.3 238.8,238.9 240.5,238.6 242.2,238.4 244.0,238.4 245.7,238.6 247.5,238.8 249.2,239.0 250.9,239.3 252.7,239.6 254.4,239.7 256.1,239.8 257.9,239.7 259.6,239.6 261.4,239.4 263.1,239.4 264.8,239.7 266.6,240.1 268.3,240.4 270.0,240.5 271.8,240.2 273.5,239.6 275.3,239.0 277.0,238.6 278.7,238.3 280.5,238.2 282.2,238.4 283.9,238.8 285.7,239.3 287.4,239.9 289.1,240.2 290.9,240.3 292.6,240.1 294.4,239.9 296.1,239.7 297.8,239.8 299.6,239.9 301.3,239.9 303.0,239.8 304.8,239.7 306.5,239.7 308.3,239.7 310.0,239.8 311.7,239.8 313.5,239.8 315.2,239.7 316.9,239.6 318.7,239.4 320.4,239.2 322.2,239.1 323.9,239.0 325.6,238.8 327.4,238.7 329.1,238.7 330.8,238.9 332.6,239.4 334.3,239.8 336.0,240.1 337.8,240.0 339.5,239.6 341.3,239.2 343.0,238.7 344.7,238.5 346.5,238.5 348.2,238.8 349.9,239.1 351.7,239.3 353.4,239.4 355.2,239.3 356.9,239.2 358.6,239.1 360.4,239.1 362.1,239.2 363.8,239.4 365.6,239.7 367.3,239.8 369.1,239.9 370.8,239.8 372.5,239.7 374.3,239.6 376.0,239.3 377.7,239.0 379.5,238.6 381.2,238.4 382.9,238.3 384.7,238.3 386.4,238.4 388.2,238.7 389.9,239.0 391.6,239.3 393.4,239.5 395.1,239.5 396.8,239.4 398.6,239.2 400.3,239.1 402.1,239.1 403.8,239.2 405.5,239.2 407.3,239.3 409.0,239.3 410.7,239.3 412.5,239.1 414.2,238.8 416.0,238.5 417.7,238.2 419.4,238.0 421.2,237.9 422.9,238.0 424.6,238.2 426.4,238.6 428.1,239.0 429.8,239.4 431.6,239.5 433.3,239.4 435.1,239.1 436.8,238.8 438.5,238.5 440.3,238.4 442.0,238.7 443.7,239.2 445.5,239.8 447.2,240.2 449.0,240.3 450.7,240.1 452.4,239.8 454.2,239.5 455.9,239.3 457.6,239.3 459.4,239.3 461.1,239.4 462.9,239.5" stroke="#fde725" stroke-width="0.6" fill="none" opacity="0.9"/>
<polyline points="204.0,250.7 205.8,248.7 207.5,247.2 209.2,247.3 211.0,244.5 212.7,243.4 214.5,242.2 216.2,242.3 217.9,242.1 219.7,241.8 221.4,241.7 223.1,241.8 224.9,242.0 226.6,242.1 228.4,241.9 230.1,241.6 231.8,241.2 233.6,240.8 235.3,240.4 237.0,240.0 238.8,239.8 240.5,239.7 242.2,240.0 244.0,240.3 245.7,240.7 247.5,240.8 249.2,240.6 250.9,240.4 252.7,240.2 254.4,240.2 256.1,240.2 257.9,240.3 259.6,240.4 261.4,240.5 263.1,240.6 264.8,240.6 266.6,240.6 268.3,240.7 270.0,240.9 271.8,241.1 273.5,241.2 275.3,241.0 277.0,240.6 278.7,240.1 280.5,239.7 282.2,239.6 283.9,239.8 285.7,240.1 287.4,240.5 289.1,240.7 290.9,240.8 292.6,240.9 294.4,240.9 296.1,240.9 297.8,241.1 299.6,241.4 301.3,241.7 303.0,241.8 304.8,241.5 306.5,240.9 308.3,240.2 310.0,239.6 311.7,239.2 313.5,239.1 315.2,239.2 316.9,239.4 318.7,239.4 320.4,239.4 322.2,239.4 323.9,239.5 325.6,239.7 327.4,240.0 329.1,240.3 330.8,240.5 332.6,240.4 334.3,240.1 336.0,239.9 337.8,239.7 339.5,239.8 341.3,240.1 343.0,240.4 344.7,240.6 346.5,240.7 348.2,240.6 349.9,240.6 351.7,240.5 353.4,240.5 355.2,240.6 356.9,240.7 358.6,240.8 360.4,240.8 362.1,240.8 363.8,240.9 365.6,241.0 367.3,241.2 369.1,241.2 370.8,241.0 372.5,240.7 374.3,240.4 376.0,240.4 377.7,240.6 379.5,240.9 381.2,241.1 382.9,241.0 384.7,240.7 386.4,240.4 388.2,240.1 389.9,240.0 391.6,239.9 393.4,239.9 395.1,239.8 396.8,239.7 398.6,239.7 400.3,239.6 402.1,239.7 403.8,239.9 405.5,240.1 407.3,240.3 409.0,240.5 410.7,240.7 412.5,240.7 414.2,240.6 416.0,240.3 417.7,240.1 419.4,240.0 421.2,240.1 422.9,240.4 424.6,240.6 426.4,240.7 428.1,240.7 429.8,240.7 431.6,240.7 433.3,240.5 435.1,240.3 436.8,240.2 438.5,240.3 440.3,240.5 442.0,240.7 443.7,240.9 445.5,241.0 447.2,241.2 449.0,241.4 450.7,241.6 452.4,241.6 454.2,241.5 455.9,241.4 457.6,241.2 459.4,241.1 461.1,241.0 462.9,241.0" stroke="#f1e41c" stroke-width="0.6" fill="none" opacity="0.9"/>
<polyline points="204.0,262.0 205.8,254.6 207.5,251.0 209.2,246.8 211.0,246.0 212.7,242.7 214.5,240.1 216.2,240.0 217.9,239.9 219.7,240.2 221.4,240.7 223.1,241.3 224.9,241.9 226.6,241.9 228.4,241.6 230.1,241.0 231.8,240.5 233.6,240.3 235.3,240.1 237.0,240.0 238.8,240.0 240.5,240.1 242.2,240.4 244.0,240.9 245.7,241.2 247.5,241.4 249.2,241.4 250.9,241.3 252.7,241.4 254.4,241.5 256.1,241.7 257.9,241.8 259.6,241.8 261.4,241.6 263.1,241.2 264.8,240.9 266.6,240.7 268.3,240.7 270.0,240.7 271.8,240.7 273.5,240.6 275.3,240.6 277.0,240.7 278.7,240.8 280.5,240.7 282.2,240.6 283.9,240.5 285.7,240.5 287.4,240.6 289.1,240.6 290.9,240.4 292.6,240.1 294.4,239.7 296.1,239.4 297.8,239.1 299.6,239.1 301.3,239.2 303.0,239.4 304.8,239.7 306.5,240.2 308.3,240.6 310.0,240.8 311.7,240.6 313.5,240.3 315.2,240.0 316.9,240.0 318.7,240.1 320.4,240.4 322.2,240.7 323.9,241.0 325.6,241.1 327.4,241.1 329.1,240.9 330.8,240.8 332.6,240.7 334.3,240.5 336.0,240.2 337.8,239.7 339.5,239.4 341.3,239.3 343.0,239.2 344.7,239.1 346.5,239.1 348.2,239.3 349.9,239.7 351.7,240.2 353.4,240.6 355.2,240.7 356.9,240.8 358.6,240.8 360.4,240.8 362.1,240.7 363.8,240.7 365.6,240.8 367.3,241.0 369.1,241.0 370.8,240.9 372.5,240.6 374.3,240.4 376.0,240.3 377.7,240.2 379.5,240.3 381.2,240.3 382.9,240.4 384.7,240.5 386.4,240.6 388.2,240.8 389.9,241.0 391.6,241.1 393.4,241.1 395.1,241.0 396.8,240.9 398.6,240.8 400.3,240.6 402.1,240.3 403.8,240.0 405.5,239.8 407.3,239.9 409.0,240.2 410.7,240.6 412.5,241.0 414.2,241.2 416.0,241.2 417.7,241.1 419.4,241.1 421.2,241.2 422.9,241.3 424.6,241.5 426.4,241.5 428.1,241.5 429.8,241.5 431.6,241.4 433.3,241.0 435.1,240.6 436.8,240.3 438.5,240.3 440.3,240.6 442.0,241.0 443.7,241.4 445.5,241.7 447.2,242.0 449.0,242.3 450.7,242.4 452.4,242.5 454.2,242.5 455.9,242.5 457.6,242.4 459.4,242.4 461.1,242.3 462.9,242.3" stroke="#e2e31a" stroke-width="0.6" fill="none" opacity="0.9"/>
<polyline points="204.0,259.9 205.8,254.7 207.5,249.8 209.2,246.5 211.0,245.0 212.7,242.6 214.5,240.2 216.2,240.3 217.9,240.3 219.7,240.3 221.4,240.4 223.1,240.5 224.9,240.5 226.6,240.3 228.4,239.9 230.1,239.7 231.8,239.7 233.6,239.8 235.3,240.0 237.0,240.1 238.8,240.1 240.5,240.1 242.2,240.0 244.0,239.8 245.7,239.6 247.5,239.6 249.2,239.5 250.9,239.6 252.7,239.6 254.4,239.7 256.1,239.6 257.9,239.5 259.6,239.4 261.4,239.5 263.1,239.6 264.8,239.9 266.6,240.3 268.3,240.5 270.0,240.5 271.8,240.3 273.5,240.1 275.3,239.9 277.0,239.7 278.7,239.6 280.5,239.4 282.2,239.3 283.9,239.3 285.7,239.3 287.4,239.4 289.1,239.4 290.9,239.4 292.6,239.5 294.4,239.5 296.1,239.5 297.8,239.5 299.6,239.3 301.3,239.1 303.0,238.8 304.8,238.6 306.5,238.6 308.3,238.6 310.0,238.7 311.7,238.9 313.5,239.2 315.2,239.5 316.9,239.9 318.7,240.2 320.4,240.5 322.2,240.9 323.9,241.1 325.6,241.2 327.4,241.1 329.1,241.0 330.8,240.8 332.6,240.7 334.3,240.7 336.0,240.7 337.8,240.6 339.5,240.3 341.3,239.9 343.0,239.4 344.7,239.1 346.5,238.8 348.2,238.8 349.9,238.8 351.7,239.0 353.4,239.4 355.2,239.9 356.9,240.3 358.6,240.3 360.4,240.1 362.1,239.8 363.8,239.7 365.6,239.7 367.3,239.8 369.1,239.9 370.8,239.9 372.5,239.7 374.3,239.5 376.0,239.2 377.7,238.9 379.5,238.6 381.2,238.5 382.9,238.4 384.7,238.4 386.4,238.5 388.2,238.6 389.9,238.9 391.6,239.3 393.4,239.7 395.1,240.0 396.8,240.0 398.6,239.8 400.3,239.3 402.1,238.8 403.8,238.5 405.5,238.5 407.3,238.5 409.0,238.6 410.7,238.7 412.5,238.6 414.2,238.3 416.0,237.9 417.7,237.5 419.4,237.3 421.2,237.3 422.9,237.4 424.6,237.6 426.4,237.8 428.1,238.0 429.8,238.1 431.6,238.2 433.3,238.1 435.1,238.0 436.8,237.7 438.5,237.5 440.3,237.5 442.0,237.7 443.7,238.0 445.5,238.3 447.2,238.6 449.0,238.8 450.7,239.1 452.4,239.2 454.2,239.3 455.9,239.4 457.6,239.4 459.4,239.4 461.1,239.3 462.9,239.3" stroke="#fde725" stroke-width="0.6" fill="none" opacity="0.9"/>
<polyline points="204.0,239.6 205.8,240.1 207.5,242.4 209.2,240.0 211.0,239.7 212.7,240.6 214.5,240.4 216.2,240.3 217.9,240.5 219.7,240.7 221.4,240.7 223.1,240.6 224.9,240.3 226.6,240.1 228.4,240.1 230.1,240.1 231.8,240.2 233.6,240.3 235.3,240.6 237.0,241.0 238.8,241.4 240.5,241.9 242.2,242.2 244.0,242.2 245.7,241.9 247.5,241.5 249.2,241.3 250.9,241.2 252.7,241.2 254.4,241.2 256.1,241.2 257.9,241.3 259.6,241.4 261.4,241.5 263.1,241.6 264.8,241.5 266.6,241.1 268.3,240.7 270.0,240.4 271.8,240.4 273.5,240.7 275.3,241.0 277.0,241.3 278.7,241.6 280.5,242.0 282.2,242.3 283.9,242.5 285.7,242.4 287.4,242.1 289.1,241.8 290.9,241.7 292.6,241.6 294.4,241.6 296.1,241.5 297.8,241.4 299.6,241.2 301.3,241.0 303.0,240.8 304.8,240.6 306.5,240.4 308.3,240.4 310.0,240.5 311.7,240.7 313.5,240.9 315.2,241.0 316.9,241.1 318.7,241.1 320.4,241.1 322.2,241.0 323.9,240.8 325.6,240.7 327.4,240.4 329.1,240.2 330.8,240.0 332.6,240.0 334.3,240.1 336.0,240.2 337.8,240.2 339.5,240.2 341.3,240.2 343.0,240.3 344.7,240.4 346.5,240.6 348.2,240.7 349.9,240.9 351.7,241.1 353.4,241.1 355.2,241.1 356.9,240.9 358.6,240.7 360.4,240.5 362.1,240.2 363.8,240.0 365.6,239.9 367.3,239.8 369.1,239.8 370.8,239.8 372.5,239.7 374.3,239.5 376.0,239.3 377.7,239.2 379.5,239.5 381.2,239.9 382.9,240.4 384.7,240.7 386.4,240.9 388.2,240.9 389.9,240.7 391.6,240.5 393.4,240.4 395.1,240.3 396.8,240.3 398.6,240.3 400.3,240.3 402.1,240.5 403.8,241.0 405.5,241.7 407.3,242.3 409.0,242.7 410.7,242.6 412.5,242.0 414.2,241.4 416.0,240.9 417.7,240.7 419.4,240.7 421.2,240.7 422.9,240.9 424.6,241.1 426.4,241.5 428.1,241.8 429.8,241.9 431.6,242.0 433.3,242.0 435.1,241.9 436.8,242.0 438.5,242.0 440.3,242.0 442.0,242.1 443.7,242.2 445.5,242.4 447.2,242.6 449.0,242.7 450.7,242.7 452.4,242.6 454.2,242.5 455.9,242.3 457.6,242.1 459.4,241.9 461.1,241.8 462.9,241.8" stroke="#f1e41c" stroke-width="0.6" fill="none" opacity="0.9"/>
<polyline points="204.0,232.3 205.8,234.7 207.5,233.7 209.2,235.7 211.0,238.6 212.7,240.1 214.5,240.7 216.2,240.9 217.9,240.8 219.7,240.6 221.4,240.4 223.1,240.3 224.9,240.4 226.6,240.7 228.4,240.9 230.1,241.0 231.8,240.9 233.6,240.7 235.3,240.6 237.0,240.7 238.8,240.9 240.5,241.2 242.2,241.3 244.0,241.4 245.7,241.4 247.5,241.3 249.2,241.2 250.9,241.0 252.7,240.8 254.4,240.6 256.1,240.3 257.9,240.1 259.6,240.0 261.4,240.2 263.1,240.6 264.8,241.2 266.6,241.8 268.3,242.1 270.0,242.3 271.8,242.4 273.5,242.4 275.3,242.3 277.0,242.1 278.7,241.8 280.5,241.5 282.2,241.0 283.9,240.6 285.7,240.4 287.4,240.6 289.1,241.1 290.9,241.5 292.6,241.5 294.4,241.2 296.1,240.7 297.8,240.3 299.6,240.2 301.3,240.2 303.0,240.3 304.8,240.3 306.5,240.2 308.3,240.2 310.0,240.0 311.7,240.0 313.5,240.0 315.2,240.1 316.9,240.4 318.7,240.7 320.4,241.0 322.2,241.2 323.9,241.4 325.6,241.6 327.4,241.6 329.1,241.6 330.8,241.4 332.6,241.0 334.3,240.8 336.0,240.8 337.8,241.0 339.5,241.2 341.3,241.1 343.0,240.7 344.7,240.0 346.5,239.4 348.2,239.3 349.9,239.7 351.7,240.4 353.4,241.0 355.2,241.2 356.9,241.0 358.6,240.8 360.4,240.6 362.1,240.5 363.8,240.5 365.6,240.6 367.3,240.8 369.1,241.1 370.8,241.2 372.5,241.1 374.3,240.9 376.0,240.5 377.7,240.3 379.5,240.3 381.2,240.7 382.9,241.3 384.7,241.8 386.4,242.0 388.2,242.0 389.9,241.7 391.6,241.4 393.4,241.2 395.1,241.2 396.8,241.5 398.6,241.8 400.3,242.1 402.1,242.5 403.8,242.9 405.5,243.2 407.3,243.4 409.0,243.4 410.7,243.2 412.5,242.9 414.2,242.7 416.0,242.5 417.7,242.2 419.4,241.8 421.2,241.4 422.9,241.3 424.6,241.4 426.4,241.7 428.1,241.9 429.8,242.2 431.6,242.4 433.3,242.6 435.1,242.7 436.8,242.6 438.5,242.5 440.3,242.4 442.0,242.6 443.7,243.0 445.5,243.5 447.2,243.9 449.0,244.1 450.7,244.1 452.4,244.0 454.2,243.9 455.9,243.7 457.6,243.7 459.4,243.7 461.1,243.7 462.9,243.6" stroke="#e2e31a" stroke-width="0.6" fill="none" opacity="0.9"/>
<polyline points="204.0,262.4 205.8,256.9 207.5,254.6 209.2,249.8 211.0,245.8 212.7,242.9 214.5,240.2 216.2,240.0 217.9,239.7 219.7,239.5 221.4,239.5 223.1,239.6 224.9,239.8 226.6,240.3 228.4,241.0 230.1,241.7 231.8,242.3 233.6,242.4 235.3,242.2 237.0,241.7 238.8,241.2 240.5,240.8 242.2,240.5 244.0,240.4 245.7,240.3 247.5,240.1 249.2,239.8 250.9,239.6 252.7,239.6 254.4,239.8 256.1,240.3 257.9,240.8 259.6,241.3 261.4,241.5 263.1,241.5 264.8,241.2 266.6,241.0 268.3,240.9 270.0,240.9 271.8,240.9 273.5,240.9 275.3,240.8 277.0,240.7 278.7,240.7 280.5,240.7 282.2,240.5 283.9,240.1 285.7,239.6 287.4,239.2 289.1,239.1 290.9,239.4 292.6,239.9 294.4,240.4 296.1,240.8 297.8,241.0 299.6,241.0 301.3,241.0 303.0,240.9 304.8,240.9 306.5,240.9 308.3,240.9 310.0,240.9 311.7,240.9 313.5,240.9 315.2,240.9 316.9,240.8 318.7,240.7 320.4,240.7 322.2,240.9 323.9,241.2 325.6,241.6 327.4,242.0 329.1,242.3 330.8,242.3 332.6,242.1 334.3,241.6 336.0,241.2 337.8,240.9 339.5,240.8 341.3,240.7 343.0,240.4 344.7,240.1 346.5,240.0 348.2,240.2 349.9,240.6 351.7,240.9 353.4,241.2 355.2,241.2 356.9,241.0 358.6,240.6 360.4,240.2 362.1,240.0 363.8,240.1 365.6,240.3 367.3,240.6 369.1,240.6 370.8,240.5 372.5,240.4 374.3,240.2 376.0,240.2 377.7,240.2 379.5,240.2 381.2,240.0 382.9,239.7 384.7,239.4 386.4,239.1 388.2,238.9 389.9,238.9 391.6,239.2 393.4,239.6 395.1,240.3 396.8,240.8 398.6,241.2 400.3,241.3 402.1,241.2 403.8,240.9 405.5,240.7 407.3,240.6 409.0,240.5 410.7,240.5 412.5,240.4 414.2,240.3 416.0,240.3 417.7,240.4 419.4,240.5 421.2,240.8 422.9,241.0 424.6,241.1 426.4,241.0 428.1,240.9 429.8,240.9 431.6,241.1 433.3,241.3 435.1,241.4 436.8,241.2 438.5,240.8 440.3,240.6 442.0,240.6 443.7,240.6 445.5,240.7 447.2,240.9 449.0,241.1 450.7,241.2 452.4,241.3 454.2,241.4 455.9,241.4 457.6,241.4 459.4,241.5 461.1,241.6 462.9,241.6" stroke="#fde725" stroke-width="0.6" fill="none" opacity="0.9"/>
<polyline points="204.0,248.6 205.8,244.6 207.5,248.3 209.2,243.8 211.0,241.4 212.7,240.1 214.5,239.8 216.2,239.7 217.9,239.5 219.7,239.4 221.4,239.4 223.1,239.3 224.9,239.1 226.6,238.9 228.4,238.7 230.1,238.8 231.8,239.1 233.6,239.5 235.3,239.8 237.0,239.9 238.8,239.7 240.5,239.6 242.2,239.7 244.0,239.8 245.7,239.9 247.5,239.9 249.2,239.6 250.9,239.2 252.7,238.9 254.4,238.8 256.1,239.0 257.9,239.4 259.6,239.9 261.4,240.4 263.1,240.7 264.8,240.8 266.6,241.0 268.3,241.0 270.0,241.0 271.8,240.8 273.5,240.6 275.3,240.4 277.0,240.1 278.7,239.7 280.5,239.4 282.2,239.1 283.9,238.9 285.7,238.9 287.4,239.0 289.1,239.2 290.9,239.4 292.6,239.7 294.4,240.1 296.1,240.6 297.8,241.0 299.6,241.1 301.3,240.9 303.0,240.5 304.8,240.0 306.5,239.6 308.3,239.3 310.0,239.1 311.7,239.0 313.5,239.2 315.2,239.4 316.9,239.7 318.7,240.0 320.4,240.3 322.2,240.5 323.9,240.7 325.6,240.9 327.4,241.0 329.1,241.1 330.8,241.0 332.6,240.8 334.3,240.6 336.0,240.4 337.8,240.2 339.5,240.0 341.3,239.7 343.0,239.5 344.7,239.2 346.5,239.1 348.2,239.1 349.9,239.2 351.7,239.6 353.4,239.8 355.2,240.0 356.9,240.1 358.6,240.1 360.4,240.2 362.1,240.1 363.8,240.2 365.6,240.3 367.3,240.4 369.1,240.2 370.8,239.9 372.5,239.6 374.3,239.4 376.0,239.4 377.7,239.5 379.5,239.7 381.2,239.8 382.9,239.8 384.7,239.6 386.4,239.3 388.2,238.9 389.9,238.7 391.6,238.5 393.4,238.3 395.1,238.3 396.8,238.4 398.6,238.7 400.3,239.1 402.1,239.6 403.8,239.9 405.5,240.0 407.3,240.0 409.0,239.8 410.7,239.7 412.5,239.8 414.2,239.9 416.0,239.9 417.7,239.7 419.4,239.2 421.2,238.6 422.9,238.1 424.6,237.9 426.4,237.9 428.1,238.3 429.8,238.7 431.6,239.1 433.3,239.4 435.1,239.6 436.8,239.8 438.5,240.0 440.3,240.2 442.0,240.2 443.7,240.0 445.5,239.7 447.2,239.2 449.0,238.7 450.7,238.4 452.4,238.4 454.2,238.7 455.9,239.0 457.6,239.3 459.4,239.5 461.1,239.6 462.9,239.6" stroke="#f1e41c" stroke-width="0.6" fill="none" opacity="0.9"/>
<polyline points="204.0,230.9 205.8,232.6 207.5,236.1 209.2,237.2 211.0,238.8 212.7,240.4 214.5,242.4 216.2,242.4 217.9,242.6 219.7,242.8 221.4,242.8 223.1,242.6 224.9,242.2 226.6,241.9 228.4,241.7 230.1,241.6 231.8,241.5 233.6,241.3 235.3,241.1 237.0,240.9 238.8,240.8 240.5,240.8 242.2,240.7 244.0,240.6 245.7,240.5 247.5,240.4 249.2,240.4 250.9,240.6 252.7,240.8 254.4,240.9 256.1,241.1 257.9,241.1 259.6,241.1 261.4,241.1 263.1,241.1 264.8,241.1 266.6,240.9 268.3,240.4 270.0,239.8 271.8,239.3 273.5,239.2 275.3,239.5 277.0,240.0 278.7,240.5 280.5,240.9 282.2,241.0 283.9,241.1 285.7,241.1 287.4,241.2 289.1,241.3 290.9,241.2 292.6,241.0 294.4,240.8 296.1,240.7 297.8,240.7 299.6,240.8 301.3,240.9 303.0,240.8 304.8,240.5 306.5,240.3 308.3,240.2 310.0,240.2 311.7,240.2 313.5,240.3 315.2,240.3 316.9,240.4 318.7,240.6 320.4,240.7 322.2,240.9 323.9,240.9 325.6,240.9 327.4,240.8 329.1,240.8 330.8,240.8 332.6,240.9 334.3,240.9 336.0,240.9 337.8,241.1 339.5,241.3 341.3,241.6 343.0,241.6 344.7,241.5 346.5,241.2 348.2,241.1 349.9,241.1 351.7,241.1 353.4,240.9 355.2,240.5 356.9,240.0 358.6,239.7 360.4,239.5 362.1,239.5 363.8,239.8 365.6,240.1 367.3,240.3 369.1,240.2 370.8,240.0 372.5,239.9 374.3,239.8 376.0,239.9 377.7,240.0 379.5,240.0 381.2,240.1 382.9,240.2 384.7,240.4 386.4,240.6 388.2,240.8 389.9,240.8 391.6,240.8 393.4,240.8 395.1,240.9 396.8,241.1 398.6,241.4 400.3,241.6 402.1,241.8 403.8,241.8 405.5,241.8 407.3,241.6 409.0,241.5 410.7,241.3 412.5,241.2 414.2,241.0 416.0,240.9 417.7,241.0 419.4,241.3 421.2,241.7 422.9,242.2 424.6,242.6 426.4,242.7 428.1,242.5 429.8,242.2 431.6,242.1 433.3,242.1 435.1,242.2 436.8,242.3 438.5,242.3 440.3,242.2 442.0,241.9 443.7,241.6 445.5,241.2 447.2,241.1 449.0,241.3 450.7,241.7 452.4,242.2 454.2,242.5 455.9,242.3 457.6,242.0 459.4,241.6 461.1,241.5 462.9,241.6" stroke="#e2e31a" stroke-width="0.6" fill="none" opacity="0.9"/>
<polyline points="204.0,250.7 205.8,245.9 207.5,242.7 209.2,245.4 211.0,242.3 212.7,241.4 214.5,241.2 216.2,241.0 217.9,241.0 219.7,241.0 221.4,241.1 223.1,241.2 224.9,241.3 226.6,241.3 228.4,241.2 230.1,241.2 231.8,241.1 233.6,241.0 235.3,240.7 237.0,240.6 238.8,240.6 240.5,240.7 242.2,240.8 244.0,240.6 245.7,240.3 247.5,240.0 249.2,239.8 250.9,239.8 252.7,240.0 254.4,240.3 256.1,240.7 257.9,241.0 259.6,241.1 261.4,240.9 263.1,240.7 264.8,240.5 266.6,240.5 268.3,240.7 270.0,240.9 271.8,241.0 273.5,241.0 275.3,240.9 277.0,240.8 278.7,240.7 280.5,240.8 282.2,241.1 283.9,241.5 285.7,241.9 287.4,242.1 289.1,242.0 290.9,241.8 292.6,241.6 294.4,241.6 296.1,241.6 297.8,241.5 299.6,241.2 301.3,240.7 303.0,240.1 304.8,239.7 306.5,239.5 308.3,239.4 310.0,239.4 311.7,239.6 313.5,240.0 315.2,240.6 316.9,241.0 318.7,241.4 320.4,241.6 322.2,241.6 323.9,241.5 325.6,241.3 327.4,241.0 329.1,240.7 330.8,240.6 332.6,240.7 334.3,240.9 336.0,241.1 337.8,241.2 339.5,241.3 341.3,241.3 343.0,241.5 344.7,241.7 346.5,241.8 348.2,241.8 349.9,241.7 351.7,241.5 353.4,241.3 355.2,241.1 356.9,241.0 358.6,240.8 360.4,240.6 362.1,240.3 363.8,240.0 365.6,239.8 367.3,239.8 369.1,240.0 370.8,240.2 372.5,240.3 374.3,240.4 376.0,240.4 377.7,240.6 379.5,240.9 381.2,241.2 382.9,241.5 384.7,241.9 386.4,242.2 388.2,242.5 389.9,242.6 391.6,242.8 393.4,243.0 395.1,243.2 396.8,243.5 398.6,243.6 400.3,243.4 402.1,243.2 403.8,243.1 405.5,243.1 407.3,243.1 409.0,243.1 410.7,243.1 412.5,242.9 414.2,242.7 416.0,242.5 417.7,242.4 419.4,242.3 421.2,242.3 422.9,242.3 424.6,242.3 426.4,242.4 428.1,242.5 429.8,242.7 431.6,242.9 433.3,243.2 435.1,243.5 436.8,244.0 438.5,244.3 440.3,244.3 442.0,243.9 443.7,243.3 445.5,242.7 447.2,242.2 449.0,242.1 450.7,242.3 452.4,242.6 454.2,243.0 455.9,243.2 457.6,243.2 459.4,243.1 461.1,243.0 462.9,243.0" stroke="#fde725" stroke-width="0.6" fill="none" opacity="0.9"/>
<polyline points="204.0,262.2 205.8,254.5 207.5,254.0 209.2,249.0 211.0,247.4 212.7,242.5 214.5,240.9 216.2,240.4 217.9,240.3 219.7,240.2 221.4,240.2 223.1,240.1 224.9,240.0 226.6,240.0 228.4,240.0 230.1,240.0 231.8,240.0 233.6,239.8 235.3,239.6 237.0,239.6 238.8,239.7 240.5,239.9 242.2,240.0 244.0,240.1 245.7,240.1 247.5,240.0 249.2,239.8 250.9,239.6 252.7,239.3 254.4,239.1 256.1,239.0 257.9,239.3 259.6,239.9 261.4,240.5 263.1,240.9 264.8,241.1 266.6,241.2 268.3,241.3 270.0,241.4 271.8,241.4 273.5,241.5 275.3,241.5 277.0,241.6 278.7,241.5 280.5,241.4 282.2,241.3 283.9,241.2 285.7,241.2 287.4,241.4 289.1,241.6 290.9,241.8 292.6,241.8 294.4,241.7 296.1,241.5 297.8,241.4 299.6,241.2 301.3,241.1 303.0,241.1 304.8,240.9 306.5,240.7 308.3,240.4 310.0,240.3 311.7,240.5 313.5,241.0 315.2,241.5 316.9,241.9 318.7,241.9 320.4,241.7 322.2,241.4 323.9,241.3 325.6,241.3 327.4,241.4 329.1,241.6 330.8,241.8 332.6,242.0 334.3,242.1 336.0,242.0 337.8,241.8 339.5,241.4 341.3,240.9 343.0,240.6 344.7,240.6 346.5,240.7 348.2,240.8 349.9,240.7 351.7,240.4 353.4,240.1 355.2,239.8 356.9,239.8 358.6,240.0 360.4,240.4 362.1,240.7 363.8,240.9 365.6,240.8 367.3,240.6 369.1,240.5 370.8,240.4 372.5,240.3 374.3,240.3 376.0,240.1 377.7,240.1 379.5,240.4 381.2,240.8 382.9,241.2 384.7,241.6 386.4,241.7 388.2,241.5 389.9,241.3 391.6,241.2 393.4,241.3 395.1,241.6 396.8,241.7 398.6,241.9 400.3,241.9 402.1,241.8 403.8,241.8 405.5,241.8 407.3,241.9 409.0,242.1 410.7,242.4 412.5,242.6 414.2,242.6 416.0,242.7 417.7,242.7 419.4,242.8 421.2,242.8 422.9,243.0 424.6,243.0 426.4,243.0 428.1,242.8 429.8,242.6 431.6,242.5 433.3,242.4 435.1,242.6 436.8,242.8 438.5,243.0 440.3,243.1 442.0,243.0 443.7,243.0 445.5,243.0 447.2,242.9 449.0,242.8 450.7,242.5 452.4,242.3 454.2,242.1 455.9,242.0 457.6,242.0 459.4,242.1 461.1,242.2 462.9,242.4" stroke="#f1e41c" stroke-width="0.6" fill="none" opacity="0.9"/>
<polyline points="204.0,220.4 205.8,230.5 207.5,232.2 209.2,236.2 211.0,237.7 212.7,238.6 214.5,240.9 216.2,240.5 217.9,240.2 219.7,240.1 221.4,240.0 223.1,239.9 224.9,239.9 226.6,240.0 228.4,240.1 230.1,240.2 231.8,240.2 233.6,240.3 235.3,240.2 237.0,240.1 238.8,239.8 240.5,239.5 242.2,239.2 244.0,239.2 245.7,239.6 247.5,240.2 249.2,240.8 250.9,240.8 252.7,240.4 254.4,239.6 256.1,239.0 257.9,238.9 259.6,239.1 261.4,239.6 263.1,239.9 264.8,239.9 266.6,239.7 268.3,239.5 270.0,239.3 271.8,239.2 273.5,239.1 275.3,239.1 277.0,239.4 278.7,240.0 280.5,240.6 282.2,240.9 283.9,240.7 285.7,240.3 287.4,240.1 289.1,240.1 290.9,240.2 292.6,240.2 294.4,240.1 296.1,239.9 297.8,239.8 299.6,239.7 301.3,239.7 303.0,239.7 304.8,239.7 306.5,239.7 308.3,239.6 310.0,239.6 311.7,239.5 313.5,239.5 315.2,239.6 316.9,239.7 318.7,239.7 320.4,239.7 322.2,239.6 323.9,239.6 325.6,239.6 327.4,239.8 329.1,240.0 330.8,240.3 332.6,240.5 334.3,240.5 336.0,240.5 337.8,240.3 339.5,240.3 341.3,240.4 343.0,240.8 344.7,241.2 346.5,241.4 348.2,241.3 349.9,240.8 351.7,240.0 353.4,239.2 355.2,238.6 356.9,238.5 358.6,238.7 360.4,239.2 362.1,239.5 363.8,239.7 365.6,239.7 367.3,239.6 369.1,239.6 370.8,239.8 372.5,240.1 374.3,240.3 376.0,240.4 377.7,240.3 379.5,240.2 381.2,240.0 382.9,239.7 384.7,239.4 386.4,239.3 388.2,239.4 389.9,239.4 391.6,239.3 393.4,239.1 395.1,238.9 396.8,238.8 398.6,239.0 400.3,239.4 402.1,239.8 403.8,240.1 405.5,240.1 407.3,239.8 409.0,239.5 410.7,239.2 412.5,239.0 414.2,239.0 416.0,239.1 417.7,239.2 419.4,239.2 421.2,239.4 422.9,239.7 424.6,240.0 426.4,240.2 428.1,240.2 429.8,240.2 431.6,240.0 433.3,239.6 435.1,239.2 436.8,239.1 438.5,239.3 440.3,239.7 442.0,240.0 443.7,240.1 445.5,240.1 447.2,240.2 449.0,240.4 450.7,240.5 452.4,240.6 454.2,240.6 455.9,240.5 457.6,240.2 459.4,239.9 461.1,239.5 462.9,239.2" stroke="#e2e31a" stroke-width="0.6" fill="none" opacity="0.9"/>
<polyline points="204.0,244.0 205.8,245.6 207.5,242.9 209.2,243.2 211.0,244.7 212.7,241.7 214.5,241.6 216.2,241.9 217.9,241.9 219.7,241.9 221.4,241.9 223.1,241.7 224.9,241.6 226.6,241.4 228.4,241.2 230.1,241.0 231.8,240.9 233.6,240.9 235.3,241.2 237.0,241.4 238.8,241.6 240.5,241.5 242.2,241.4 244.0,241.3 245.7,241.2 247.5,241.2 249.2,241.1 250.9,241.2 252.7,241.3 254.4,241.4 256.1,241.4 257.9,241.3 259.6,241.2 261.4,241.1 263.1,241.2 264.8,241.3 266.6,241.4 268.3,241.4 270.0,241.2 271.8,241.0 273.5,240.8 275.3,240.7 277.0,240.6 278.7,240.6 280.5,240.6 282.2,240.6 283.9,240.5 285.7,240.2 287.4,239.8 289.1,239.6 290.9,239.6 292.6,239.8 294.4,240.2 296.1,240.4 297.8,240.4 299.6,240.2 301.3,240.0 303.0,240.1 304.8,240.6 306.5,241.2 308.3,241.8 310.0,242.2 311.7,242.3 313.5,242.3 315.2,242.2 316.9,242.1 318.7,241.9 320.4,241.6 322.2,241.4 323.9,241.5 325.6,241.6 327.4,241.7 329.1,241.9 330.8,241.8 332.6,241.6 334.3,241.1 336.0,240.6 337.8,240.1 339.5,239.9 341.3,240.0 343.0,240.1 344.7,240.3 346.5,240.2 348.2,240.0 349.9,239.9 351.7,239.8 353.4,239.8 355.2,239.8 356.9,240.0 358.6,240.4 360.4,240.7 362.1,241.0 363.8,241.0 365.6,240.9 367.3,240.7 369.1,240.5 370.8,240.4 372.5,240.5 374.3,240.7 376.0,240.9 377.7,240.9 379.5,241.0 381.2,241.0 382.9,241.1 384.7,241.1 386.4,241.1 388.2,241.2 389.9,241.6 391.6,242.2 393.4,242.6 395.1,242.7 396.8,242.5 398.6,242.0 400.3,241.5 402.1,241.3 403.8,241.3 405.5,241.7 407.3,242.3 409.0,242.8 410.7,243.2 412.5,243.4 414.2,243.5 416.0,243.3 417.7,242.9 419.4,242.4 421.2,242.0 422.9,241.8 424.6,241.8 426.4,241.9 428.1,241.9 429.8,241.9 431.6,241.8 433.3,241.8 435.1,241.8 436.8,242.0 438.5,242.3 440.3,242.7 442.0,243.0 443.7,243.0 445.5,242.8 447.2,242.4 449.0,242.2 450.7,242.4 452.4,242.8 454.2,243.1 455.9,243.2 457.6,243.1 459.4,243.1 461.1,243.1 462.9,243.1" stroke="#fde725" stroke-width="0.6" fill="none" opacity="0.9"/>
<polyline points="204.0,257.7 205.8,254.8 207.5,250.8 209.2,248.2 211.0,243.5 212.7,240.6 214.5,238.5 216.2,238.5 217.9,238.8 219.7,238.9 221.4,239.2 223.1,239.6 224.9,240.1 226.6,240.4 228.4,240.5 230.1,240.2 231.8,239.9 233.6,239.6 235.3,239.3 237.0,239.1 238.8,238.9 240.5,238.9 242.2,238.9 244.0,239.1 245.7,239.3 247.5,239.5 249.2,239.7 250.9,239.7 252.7,239.6 254.4,239.4 256.1,239.3 257.9,239.4 259.6,239.7 261.4,239.8 263.1,239.7 264.8,239.5 266.6,239.4 268.3,239.5 270.0,239.7 271.8,239.8 273.5,239.6 275.3,239.2 277.0,238.7 278.7,238.3 280.5,238.1 282.2,238.0 283.9,238.0 285.7,238.0 287.4,238.0 289.1,238.0 290.9,238.3 292.6,238.7 294.4,239.1 296.1,239.4 297.8,239.4 299.6,239.4 301.3,239.3 303.0,239.4 304.8,239.3 306.5,239.2 308.3,238.8 310.0,238.4 311.7,238.1 313.5,237.9 315.2,238.0 316.9,238.3 318.7,238.8 320.4,239.3 322.2,239.8 323.9,240.0 325.6,239.9 327.4,239.6 329.1,239.5 330.8,239.4 332.6,239.4 334.3,239.5 336.0,239.6 337.8,239.9 339.5,240.2 341.3,240.4 343.0,240.4 344.7,240.3 346.5,240.1 348.2,239.9 349.9,239.6 351.7,239.2 353.4,238.9 355.2,238.7 356.9,238.5 358.6,238.5 360.4,238.6 362.1,238.8 363.8,239.2 365.6,239.5 367.3,239.6 369.1,239.5 370.8,239.2 372.5,239.0 374.3,238.8 376.0,238.7 377.7,238.5 379.5,238.1 381.2,237.7 382.9,237.4 384.7,237.3 386.4,237.4 388.2,237.7 389.9,238.0 391.6,238.3 393.4,238.2 395.1,237.8 396.8,237.4 398.6,237.0 400.3,236.6 402.1,236.4 403.8,236.2 405.5,236.3 407.3,236.3 409.0,236.2 410.7,236.1 412.5,236.0 414.2,236.1 416.0,236.2 417.7,236.4 419.4,236.5 421.2,236.5 422.9,236.4 424.6,236.3 426.4,236.1 428.1,236.0 429.8,236.0 431.6,235.8 433.3,235.6 435.1,235.5 436.8,235.6 438.5,235.8 440.3,236.1 442.0,236.2 443.7,236.0 445.5,235.7 447.2,235.3 449.0,235.1 450.7,235.2 452.4,235.7 454.2,236.4 455.9,237.1 457.6,237.7 459.4,238.1 461.1,238.1 462.9,237.9" stroke="#f1e41c" stroke-width="0.6" fill="none" opacity="0.9"/>
<polyline points="204.0,248.6 205.8,248.7 207.5,245.9 209.2,247.1 211.0,243.5 212.7,239.9 214.5,238.7 216.2,238.3 217.9,238.1 219.7,238.2 221.4,238.4 223.1,238.8 224.9,239.1 226.6,239.2 228.4,239.1 230.1,239.0 231.8,238.8 233.6,238.6 235.3,238.6 237.0,238.7 238.8,238.7 240.5,238.7 242.2,238.6 244.0,238.6 245.7,238.6 247.5,238.5 249.2,238.2 250.9,238.0 252.7,237.9 254.4,238.1 256.1,238.5 257.9,239.0 259.6,239.3 261.4,239.2 263.1,238.8 264.8,238.2 266.6,237.6 268.3,237.4 270.0,237.5 271.8,237.7 273.5,237.8 275.3,238.0 277.0,238.2 278.7,238.5 280.5,238.9 282.2,239.3 283.9,239.5 285.7,239.3 287.4,238.8 289.1,238.1 290.9,237.6 292.6,237.5 294.4,237.5 296.1,237.7 297.8,237.9 299.6,238.1 301.3,238.2 303.0,238.1 304.8,237.8 306.5,237.5 308.3,237.2 310.0,236.9 311.7,236.7 313.5,236.6 315.2,236.7 316.9,236.9 318.7,237.3 320.4,237.6 322.2,238.0 323.9,238.3 325.6,238.5 327.4,238.7 329.1,238.9 330.8,239.0 332.6,239.2 334.3,239.3 336.0,239.3 337.8,239.3 339.5,239.2 341.3,238.9 343.0,238.4 344.7,237.9 346.5,237.5 348.2,237.3 349.9,237.2 351.7,237.1 353.4,237.2 355.2,237.4 356.9,237.5 358.6,237.8 360.4,238.2 362.1,238.7 363.8,239.1 365.6,239.1 367.3,238.8 369.1,238.4 370.8,238.1 372.5,237.9 374.3,237.8 376.0,237.8 377.7,237.6 379.5,237.3 381.2,237.1 382.9,236.9 384.7,236.8 386.4,236.8 388.2,236.8 389.9,236.9 391.6,236.8 393.4,236.5 395.1,236.2 396.8,235.8 398.6,235.6 400.3,235.5 402.1,235.6 403.8,235.8 405.5,235.9 407.3,235.9 409.0,235.7 410.7,235.4 412.5,235.3 414.2,235.3 416.0,235.3 417.7,235.1 419.4,234.7 421.2,234.2 422.9,233.8 424.6,233.7 426.4,233.9 428.1,234.3 429.8,234.7 431.6,234.9 433.3,235.1 435.1,235.2 436.8,235.4 438.5,235.5 440.3,235.5 442.0,235.3 443.7,234.9 445.5,234.6 447.2,234.2 449.0,234.0 450.7,234.0 452.4,234.2 454.2,234.5 455.9,234.9 457.6,235.3 459.4,235.7 461.1,235.9 462.9,235.9" stroke="#e2e31a" stroke-width="0.6" fill="none" opacity="0.9"/>
<polyline points="204.0,242.8 205.8,243.3 207.5,242.8 209.2,242.5 211.0,241.3 212.7,240.5 214.5,239.4 216.2,239.4 217.9,239.4 219.7,239.5 221.4,239.6 223.1,239.5 224.9,239.3 226.6,239.1 228.4,238.9 230.1,238.9 231.8,238.8 233.6,238.7 235.3,238.7 237.0,238.7 238.8,238.7 240.5,238.6 242.2,238.5 244.0,238.4 245.7,238.5 247.5,238.8 249.2,239.2 250.9,239.5 252.7,239.5 254.4,239.3 256.1,238.9 257.9,238.7 259.6,238.5 261.4,238.5 263.1,238.6 264.8,238.7 266.6,238.7 268.3,238.6 270.0,238.3 271.8,237.9 273.5,237.7 275.3,237.5 277.0,237.7 278.7,238.1 280.5,238.8 282.2,239.4 283.9,239.9 285.7,240.3 287.4,240.5 289.1,240.5 290.9,240.4 292.6,240.2 294.4,240.0 296.1,239.8 297.8,239.6 299.6,239.3 301.3,239.0 303.0,238.8 304.8,238.4 306.5,238.1 308.3,237.9 310.0,237.8 311.7,238.1 313.5,238.4 315.2,238.7 316.9,239.1 318.7,239.3 320.4,239.5 322.2,239.4 323.9,239.2 325.6,238.8 327.4,238.5 329.1,238.5 330.8,238.8 332.6,239.2 334.3,239.4 336.0,239.4 337.8,239.3 339.5,239.0 341.3,238.9 343.0,238.8 344.7,238.7 346.5,238.7 348.2,238.9 349.9,239.0 351.7,239.1 353.4,239.2 355.2,239.2 356.9,239.4 358.6,239.6 360.4,239.7 362.1,239.7 363.8,239.7 365.6,239.7 367.3,239.9 369.1,240.1 370.8,240.3 372.5,240.3 374.3,240.1 376.0,239.8 377.7,239.4 379.5,238.9 381.2,238.5 382.9,238.3 384.7,237.9 386.4,237.6 388.2,237.3 389.9,237.1 391.6,237.1 393.4,237.1 395.1,237.0 396.8,236.5 398.6,236.0 400.3,235.7 402.1,235.7 403.8,235.9 405.5,236.2 407.3,236.2 409.0,235.9 410.7,235.5 412.5,235.2 414.2,235.1 416.0,235.4 417.7,235.8 419.4,236.1 421.2,236.0 422.9,235.6 424.6,235.2 426.4,234.9 428.1,235.0 429.8,235.6 431.6,236.1 433.3,236.4 435.1,236.3 436.8,236.0 438.5,235.8 440.3,235.9 442.0,236.1 443.7,236.2 445.5,236.1 447.2,235.9 449.0,235.8 450.7,235.7 452.4,235.7 454.2,235.7 455.9,235.6 457.6,235.5 459.4,235.3 461.1,235.3 462.9,235.4" stroke="#fde725" stroke-width="0.6" fill="none" opacity="0.9"/>
<polyline points="204.0,232.2 205.8,234.9 207.5,236.5 209.2,239.0 211.0,239.4 212.7,240.8 214.5,240.9 216.2,240.8 217.9,240.8 219.7,240.8 221.4,241.0 223.1,241.0 224.9,240.9 226.6,240.6 228.4,240.2 230.1,240.0 231.8,240.1 233.6,240.3 235.3,240.5 237.0,240.7 238.8,240.7 240.5,240.6 242.2,240.7 244.0,240.9 245.7,241.2 247.5,241.6 249.2,241.9 250.9,242.0 252.7,241.9 254.4,241.6 256.1,241.1 257.9,240.6 259.6,240.2 261.4,240.0 263.1,239.9 264.8,239.9 266.6,239.9 268.3,240.1 270.0,240.3 271.8,240.6 273.5,241.1 275.3,241.6 277.0,242.1 278.7,242.3 280.5,242.3 282.2,242.1 283.9,241.8 285.7,241.3 287.4,240.8 289.1,240.6 290.9,240.6 292.6,240.6 294.4,240.5 296.1,240.3 297.8,240.2 299.6,240.2 301.3,240.3 303.0,240.4 304.8,240.3 306.5,240.1 308.3,239.9 310.0,239.8 311.7,240.0 313.5,240.2 315.2,240.4 316.9,240.6 318.7,240.6 320.4,240.5 322.2,240.4 323.9,240.5 325.6,240.6 327.4,240.8 329.1,240.7 330.8,240.5 332.6,240.0 334.3,239.6 336.0,239.3 337.8,239.3 339.5,239.8 341.3,240.4 343.0,241.0 344.7,241.5 346.5,241.7 348.2,241.7 349.9,241.5 351.7,241.0 353.4,240.4 355.2,240.2 356.9,240.2 358.6,240.2 360.4,240.2 362.1,240.0 363.8,239.8 365.6,239.8 367.3,239.7 369.1,239.7 370.8,239.7 372.5,239.8 374.3,240.1 376.0,240.3 377.7,240.5 379.5,240.6 381.2,240.7 382.9,240.7 384.7,240.6 386.4,240.5 388.2,240.3 389.9,240.3 391.6,240.7 393.4,241.3 395.1,241.8 396.8,242.0 398.6,241.8 400.3,241.7 402.1,241.6 403.8,241.8 405.5,242.1 407.3,242.3 409.0,242.3 410.7,242.2 412.5,241.8 414.2,241.5 416.0,241.3 417.7,241.3 419.4,241.5 421.2,241.6 422.9,241.4 424.6,241.1 426.4,240.9 428.1,240.9 429.8,241.0 431.6,241.2 433.3,241.4 435.1,241.4 436.8,241.2 438.5,240.8 440.3,240.5 442.0,240.4 443.7,240.4 445.5,240.5 447.2,240.6 449.0,240.6 450.7,240.7 452.4,240.7 454.2,240.7 455.9,240.6 457.6,240.6 459.4,240.8 461.1,241.2 462.9,241.5" stroke="#f1e41c" stroke-width="0.6" fill="none" opacity="0.9"/>
<polyline points="204.0,229.3 205.8,236.2 207.5,235.5 209.2,232.4 211.0,236.5 212.7,236.5 214.5,237.7 216.2,237.9 217.9,238.1 219.7,238.5 221.4,238.9 223.1,239.2 224.9,239.3 226.6,239.3 228.4,239.3 230.1,239.3 231.8,239.4 233.6,239.6 235.3,239.7 237.0,239.8 238.8,239.8 240.5,239.8 242.2,239.8 244.0,239.7 245.7,239.6 247.5,239.6 249.2,239.7 250.9,239.8 252.7,239.8 254.4,239.8 256.1,239.7 257.9,239.5 259.6,239.2 261.4,239.0 263.1,238.8 264.8,238.6 266.6,238.6 268.3,238.6 270.0,238.8 271.8,239.0 273.5,239.2 275.3,239.4 277.0,239.5 278.7,239.8 280.5,240.1 282.2,240.4 283.9,240.5 285.7,240.6 287.4,240.7 289.1,240.5 290.9,240.2 292.6,239.9 294.4,239.6 296.1,239.4 297.8,239.5 299.6,239.6 301.3,239.8 303.0,239.9 304.8,240.0 306.5,240.1 308.3,240.1 310.0,240.1 311.7,240.0 313.5,239.9 315.2,239.8 316.9,239.9 318.7,240.0 320.4,240.0 322.2,239.9 323.9,239.6 325.6,239.4 327.4,239.3 329.1,239.3 330.8,239.5 332.6,239.7 334.3,240.1 336.0,240.3 337.8,240.4 339.5,240.2 341.3,239.9 343.0,239.6 344.7,239.4 346.5,239.3 348.2,239.4 349.9,239.5 351.7,239.6 353.4,239.6 355.2,239.5 356.9,239.5 358.6,239.4 360.4,239.2 362.1,239.0 363.8,238.8 365.6,238.5 367.3,238.4 369.1,238.4 370.8,238.4 372.5,238.6 374.3,238.8 376.0,238.9 377.7,238.9 379.5,238.8 381.2,238.6 382.9,238.5 384.7,238.4 386.4,238.1 388.2,238.0 389.9,237.9 391.6,237.9 393.4,238.0 395.1,238.1 396.8,238.2 398.6,238.1 400.3,238.1 402.1,238.0 403.8,238.0 405.5,238.2 407.3,238.3 409.0,238.3 410.7,238.1 412.5,237.8 414.2,237.5 416.0,237.3 417.7,237.2 419.4,237.1 421.2,237.1 422.9,236.9 424.6,236.7 426.4,236.4 428.1,236.2 429.8,236.3 431.6,236.6 433.3,237.1 435.1,237.6 436.8,238.0 438.5,238.1 440.3,238.2 442.0,238.3 443.7,238.2 445.5,238.0 447.2,237.9 449.0,237.8 450.7,238.0 452.4,238.3 454.2,238.8 455.9,239.1 457.6,239.4 459.4,239.5 461.1,239.5 462.9,239.3" stroke="#e2e31a" stroke-width="0.6" fill="none" opacity="0.9"/>
<polyline points="204.0,228.0 205.8,234.8 207.5,236.2 209.2,234.8 211.0,237.1 212.7,238.4 214.5,240.0 216.2,239.4 217.9,238.9 219.7,238.5 221.4,238.6 223.1,238.9 224.9,239.4 226.6,239.8 228.4,240.0 230.1,239.9 231.8,239.8 233.6,239.7 235.3,239.7 237.0,239.8 238.8,239.9 240.5,240.0 242.2,240.0 244.0,239.9 245.7,239.7 247.5,239.6 249.2,239.6 250.9,239.6 252.7,239.5 254.4,239.4 256.1,239.6 257.9,240.1 259.6,240.7 261.4,241.3 263.1,241.5 264.8,241.5 266.6,241.2 268.3,240.9 270.0,240.6 271.8,240.4 273.5,240.3 275.3,240.3 277.0,240.3 278.7,240.2 280.5,239.9 282.2,239.7 283.9,239.7 285.7,239.9 287.4,240.3 289.1,240.9 290.9,241.4 292.6,241.7 294.4,241.5 296.1,240.9 297.8,240.1 299.6,239.2 301.3,238.7 303.0,238.6 304.8,238.9 306.5,239.2 308.3,239.7 310.0,240.1 311.7,240.5 313.5,240.8 315.2,241.0 316.9,241.1 318.7,241.1 320.4,241.0 322.2,240.9 323.9,240.8 325.6,240.7 327.4,240.5 329.1,240.2 330.8,239.9 332.6,239.6 334.3,239.7 336.0,240.2 337.8,240.8 339.5,241.3 341.3,241.3 343.0,241.0 344.7,240.5 346.5,240.1 348.2,239.9 349.9,240.0 351.7,240.2 353.4,240.5 355.2,240.7 356.9,240.8 358.6,240.6 360.4,240.3 362.1,240.1 363.8,239.9 365.6,239.9 367.3,239.8 369.1,239.7 370.8,239.5 372.5,239.5 374.3,239.6 376.0,240.0 377.7,240.5 379.5,240.9 381.2,241.0 382.9,241.0 384.7,240.9 386.4,240.8 388.2,240.8 389.9,240.8 391.6,240.8 393.4,240.7 395.1,240.5 396.8,240.3 398.6,240.1 400.3,240.0 402.1,240.0 403.8,240.2 405.5,240.4 407.3,240.5 409.0,240.7 410.7,240.9 412.5,241.2 414.2,241.4 416.0,241.4 417.7,241.3 419.4,241.1 421.2,240.8 422.9,240.5 424.6,240.3 426.4,240.2 428.1,240.3 429.8,240.4 431.6,240.6 433.3,240.8 435.1,240.8 436.8,240.9 438.5,240.8 440.3,240.8 442.0,240.6 443.7,240.3 445.5,240.0 447.2,239.7 449.0,239.8 450.7,240.1 452.4,240.5 454.2,241.0 455.9,241.3 457.6,241.5 459.4,241.5 461.1,241.4 462.9,241.3" stroke="#fde725" stroke-width="0.6" fill="none" opacity="0.9"/>
<polyline points="204.0,228.3 205.8,232.4 207.5,234.7 209.2,236.1 211.0,237.8 212.7,239.1 214.5,239.8 216.2,240.4 217.9,240.6 219.7,240.7 221.4,240.7 223.1,240.6 224.9,240.5 226.6,240.2 228.4,239.9 230.1,239.7 231.8,239.8 233.6,240.2 235.3,240.5 237.0,240.8 238.8,240.9 240.5,240.8 242.2,240.5 244.0,240.0 245.7,239.6 247.5,239.2 249.2,239.1 250.9,239.2 252.7,239.6 254.4,240.0 256.1,240.2 257.9,240.3 259.6,240.2 261.4,240.2 263.1,240.2 264.8,240.1 266.6,239.9 268.3,239.8 270.0,239.9 271.8,240.1 273.5,240.1 275.3,240.0 277.0,239.8 278.7,239.9 280.5,240.3 282.2,240.8 283.9,241.1 285.7,241.4 287.4,241.5 289.1,241.5 290.9,241.3 292.6,240.9 294.4,240.6 296.1,240.5 297.8,240.4 299.6,240.4 301.3,240.4 303.0,240.5 304.8,240.6 306.5,240.7 308.3,240.7 310.0,240.5 311.7,240.4 313.5,240.3 315.2,240.3 316.9,240.4 318.7,240.7 320.4,240.9 322.2,240.7 323.9,240.1 325.6,239.6 327.4,239.4 329.1,239.5 330.8,239.9 332.6,240.3 334.3,240.7 336.0,240.9 337.8,240.9 339.5,240.9 341.3,241.0 343.0,241.1 344.7,241.3 346.5,241.2 348.2,240.9 349.9,240.5 351.7,240.5 353.4,240.7 355.2,241.1 356.9,241.3 358.6,241.2 360.4,241.0 362.1,240.7 363.8,240.3 365.6,239.9 367.3,239.5 369.1,239.5 370.8,239.7 372.5,240.1 374.3,240.3 376.0,240.3 377.7,240.1 379.5,239.8 381.2,239.6 382.9,239.5 384.7,239.6 386.4,240.1 388.2,240.8 389.9,241.6 391.6,242.3 393.4,242.4 395.1,242.1 396.8,241.5 398.6,241.0 400.3,240.8 402.1,240.7 403.8,240.5 405.5,240.3 407.3,240.4 409.0,240.7 410.7,241.1 412.5,241.3 414.2,241.0 416.0,240.5 417.7,240.0 419.4,239.8 421.2,239.9 422.9,240.3 424.6,240.5 426.4,240.6 428.1,240.4 429.8,240.0 431.6,239.5 433.3,239.3 435.1,239.4 436.8,240.0 438.5,240.6 440.3,241.1 442.0,241.3 443.7,241.1 445.5,240.6 447.2,240.2 449.0,240.0 450.7,240.0 452.4,240.3 454.2,240.6 455.9,240.7 457.6,240.7 459.4,240.6 461.1,240.6 462.9,240.7" stroke="#f1e41c" stroke-width="0.6" fill="none" opacity="0.9"/>
<polyline points="204.0,254.3 205.8,242.0 207.5,244.4 209.2,243.0 211.0,242.7 212.7,240.4 214.5,239.7 216.2,239.9 217.9,240.1 219.7,240.2 221.4,240.3 223.1,240.3 224.9,240.5 226.6,240.7 228.4,240.8 230.1,240.6 231.8,240.2 233.6,239.8 235.3,239.5 237.0,239.3 238.8,239.5 240.5,239.8 242.2,240.3 244.0,240.7 245.7,241.0 247.5,241.0 249.2,240.7 250.9,240.1 252.7,239.6 254.4,239.1 256.1,238.7 257.9,238.6 259.6,238.5 261.4,238.5 263.1,238.4 264.8,238.4 266.6,238.5 268.3,238.7 270.0,239.0 271.8,239.4 273.5,239.8 275.3,240.1 277.0,240.4 278.7,240.6 280.5,240.7 282.2,240.5 283.9,240.1 285.7,239.7 287.4,239.2 289.1,239.0 290.9,239.0 292.6,239.2 294.4,239.4 296.1,239.4 297.8,239.3 299.6,239.1 301.3,239.1 303.0,239.3 304.8,239.6 306.5,239.7 308.3,239.7 310.0,239.4 311.7,239.1 313.5,238.9 315.2,238.9 316.9,239.2 318.7,239.6 320.4,239.8 322.2,239.7 323.9,239.4 325.6,239.1 327.4,239.0 329.1,239.1 330.8,239.3 332.6,239.7 334.3,240.1 336.0,240.4 337.8,240.4 339.5,240.1 341.3,239.5 343.0,238.9 344.7,238.6 346.5,238.5 348.2,238.5 349.9,238.5 351.7,238.6 353.4,238.6 355.2,238.6 356.9,238.7 358.6,239.0 360.4,239.2 362.1,239.4 363.8,239.4 365.6,239.5 367.3,239.5 369.1,239.5 370.8,239.5 372.5,239.5 374.3,239.5 376.0,239.7 377.7,239.8 379.5,239.8 381.2,239.7 382.9,239.6 384.7,239.6 386.4,239.8 388.2,240.0 389.9,240.2 391.6,240.2 393.4,240.0 395.1,239.7 396.8,239.4 398.6,239.1 400.3,239.0 402.1,239.1 403.8,239.3 405.5,239.5 407.3,239.5 409.0,239.4 410.7,239.2 412.5,239.1 414.2,239.2 416.0,239.3 417.7,239.4 419.4,239.3 421.2,239.0 422.9,238.8 424.6,238.8 426.4,238.8 428.1,238.7 429.8,238.3 431.6,237.9 433.3,237.6 435.1,237.7 436.8,238.0 438.5,238.5 440.3,238.8 442.0,239.0 443.7,238.9 445.5,238.9 447.2,238.9 449.0,239.0 450.7,239.1 452.4,239.2 454.2,239.4 455.9,239.7 457.6,240.1 459.4,240.3 461.1,240.5 462.9,240.4" stroke="#e2e31a" stroke-width="0.6" fill="none" opacity="0.9"/>
<polyline points="204.0,254.4 205.8,257.5 207.5,252.1 209.2,249.0 211.0,247.5 212.7,243.4 214.5,241.3 216.2,241.3 217.9,241.1 219.7,240.8 221.4,240.5 223.1,240.2 224.9,240.0 226.6,240.0 228.4,240.2 230.1,240.4 231.8,240.6 233.6,240.6 235.3,240.4 237.0,240.1 238.8,240.0 240.5,240.1 242.2,240.5 244.0,240.9 245.7,241.1 247.5,241.1 249.2,240.8 250.9,240.6 252.7,240.5 254.4,240.5 256.1,240.5 257.9,240.4 259.6,240.3 261.4,240.2 263.1,240.2 264.8,240.4 266.6,240.5 268.3,240.5 270.0,240.4 271.8,240.5 273.5,240.8 275.3,241.0 277.0,241.1 278.7,241.0 280.5,240.8 282.2,240.6 283.9,240.6 285.7,240.9 287.4,241.2 289.1,241.5 290.9,241.5 292.6,241.2 294.4,240.9 296.1,240.6 297.8,240.4 299.6,240.4 301.3,240.3 303.0,240.3 304.8,240.3 306.5,240.4 308.3,240.6 310.0,240.8 311.7,241.0 313.5,241.1 315.2,241.2 316.9,241.3 318.7,241.4 320.4,241.5 322.2,241.9 323.9,242.2 325.6,242.3 327.4,242.2 329.1,241.8 330.8,241.5 332.6,241.2 334.3,241.1 336.0,241.0 337.8,240.9 339.5,240.8 341.3,240.8 343.0,240.8 344.7,240.7 346.5,240.6 348.2,240.5 349.9,240.6 351.7,240.6 353.4,240.7 355.2,240.6 356.9,240.6 358.6,240.6 360.4,240.8 362.1,241.0 363.8,241.2 365.6,241.4 367.3,241.6 369.1,241.7 370.8,241.7 372.5,241.8 374.3,241.9 376.0,241.9 377.7,241.8 379.5,241.6 381.2,241.2 382.9,240.9 384.7,240.7 386.4,240.5 388.2,240.5 389.9,240.4 391.6,240.3 393.4,240.2 395.1,240.0 396.8,239.9 398.6,239.8 400.3,239.8 402.1,239.8 403.8,240.1 405.5,240.7 407.3,241.3 409.0,241.6 410.7,241.6 412.5,241.1 414.2,240.6 416.0,240.3 417.7,240.2 419.4,240.2 421.2,240.3 422.9,240.4 424.6,240.6 426.4,240.8 428.1,241.0 429.8,241.0 431.6,240.8 433.3,240.5 435.1,240.3 436.8,240.3 438.5,240.4 440.3,240.4 442.0,240.4 443.7,240.4 445.5,240.4 447.2,240.5 449.0,240.4 450.7,240.3 452.4,240.2 454.2,240.2 455.9,240.5 457.6,241.1 459.4,241.7 461.1,242.3 462.9,242.5" stroke="#fde725" stroke-width="0.6" fill="none" opacity="0.9"/>
<polyline points="204.0,242.7 205.8,236.8 207.5,237.8 209.2,240.8 211.0,238.4 212.7,238.8 214.5,238.6 216.2,238.8 217.9,239.2 219.7,239.6 221.4,240.0 223.1,240.2 224.9,240.3 226.6,240.3 228.4,240.3 230.1,240.3 231.8,240.1 233.6,239.9 235.3,239.7 237.0,239.7 238.8,239.7 240.5,239.5 242.2,239.3 244.0,239.0 245.7,238.9 247.5,238.8 249.2,238.8 250.9,238.8 252.7,238.8 254.4,238.7 256.1,238.3 257.9,238.0 259.6,238.0 261.4,238.4 263.1,239.0 264.8,239.6 266.6,240.0 268.3,240.3 270.0,240.4 271.8,240.3 273.5,240.1 275.3,239.8 277.0,239.6 278.7,239.7 280.5,239.9 282.2,240.2 283.9,240.4 285.7,240.3 287.4,240.1 289.1,239.7 290.9,239.4 292.6,239.2 294.4,239.0 296.1,238.8 297.8,238.6 299.6,238.8 301.3,239.1 303.0,239.6 304.8,239.9 306.5,239.9 308.3,239.6 310.0,239.1 311.7,238.7 313.5,238.6 315.2,238.9 316.9,239.3 318.7,239.8 320.4,240.0 322.2,240.1 323.9,239.8 325.6,239.5 327.4,239.1 329.1,238.9 330.8,238.9 332.6,239.1 334.3,239.4 336.0,239.7 337.8,240.0 339.5,240.2 341.3,240.4 343.0,240.5 344.7,240.7 346.5,240.9 348.2,241.0 349.9,240.8 351.7,240.3 353.4,239.7 355.2,239.2 356.9,239.0 358.6,239.0 360.4,239.2 362.1,239.4 363.8,239.6 365.6,239.8 367.3,240.0 369.1,239.9 370.8,239.6 372.5,239.0 374.3,238.5 376.0,238.2 377.7,238.2 379.5,238.3 381.2,238.5 382.9,238.7 384.7,239.0 386.4,239.4 388.2,239.8 389.9,240.1 391.6,240.2 393.4,240.1 395.1,239.7 396.8,239.2 398.6,238.6 400.3,237.9 402.1,237.4 403.8,237.2 405.5,237.2 407.3,237.3 409.0,237.4 410.7,237.4 412.5,237.4 414.2,237.4 416.0,237.3 417.7,237.2 419.4,237.0 421.2,236.9 422.9,237.0 424.6,237.2 426.4,237.5 428.1,237.8 429.8,237.9 431.6,237.8 433.3,237.5 435.1,237.2 436.8,237.2 438.5,237.5 440.3,237.9 442.0,238.2 443.7,238.3 445.5,238.3 447.2,238.2 449.0,238.0 450.7,237.8 452.4,237.6 454.2,237.4 455.9,237.3 457.6,237.6 459.4,238.0 461.1,238.3 462.9,238.5" stroke="#f1e41c" stroke-width="0.6" fill="none" opacity="0.9"/>
<polyline points="204.0,224.3 205.8,230.9 207.5,232.8 209.2,233.2 211.0,236.0 212.7,237.7 214.5,239.2 216.2,239.1 217.9,238.9 219.7,238.7 221.4,238.7 223.1,239.1 224.9,239.6 226.6,240.1 228.4,240.3 230.1,240.3 231.8,240.1 233.6,239.8 235.3,239.6 237.0,239.4 238.8,239.2 240.5,239.1 242.2,239.2 244.0,239.4 245.7,239.7 247.5,240.2 249.2,240.4 250.9,240.3 252.7,240.0 254.4,239.5 256.1,239.2 257.9,239.2 259.6,239.5 261.4,239.7 263.1,239.8 264.8,239.7 266.6,239.4 268.3,239.1 270.0,238.9 271.8,238.8 273.5,238.9 275.3,239.1 277.0,239.2 278.7,239.1 280.5,239.0 282.2,238.8 283.9,238.7 285.7,238.7 287.4,238.8 289.1,238.8 290.9,238.8 292.6,238.6 294.4,238.2 296.1,237.9 297.8,237.7 299.6,237.7 301.3,238.0 303.0,238.5 304.8,239.0 306.5,239.3 308.3,239.5 310.0,239.5 311.7,239.6 313.5,239.5 315.2,239.4 316.9,239.3 318.7,239.2 320.4,239.2 322.2,239.2 323.9,239.2 325.6,239.2 327.4,239.1 329.1,239.2 330.8,239.3 332.6,239.2 334.3,238.9 336.0,238.5 337.8,238.2 339.5,238.2 341.3,238.3 343.0,238.4 344.7,238.7 346.5,239.1 348.2,239.5 349.9,240.1 351.7,240.5 353.4,240.9 355.2,240.9 356.9,240.7 358.6,240.2 360.4,239.5 362.1,238.9 363.8,238.2 365.6,237.8 367.3,237.6 369.1,237.7 370.8,238.0 372.5,238.2 374.3,238.3 376.0,238.4 377.7,238.5 379.5,238.6 381.2,238.7 382.9,238.6 384.7,238.2 386.4,237.8 388.2,237.5 389.9,237.6 391.6,238.0 393.4,238.4 395.1,238.8 396.8,238.9 398.6,238.8 400.3,238.5 402.1,238.2 403.8,237.9 405.5,237.7 407.3,237.6 409.0,237.5 410.7,237.4 412.5,237.5 414.2,237.6 416.0,237.7 417.7,237.6 419.4,237.5 421.2,237.3 422.9,237.3 424.6,237.2 426.4,237.2 428.1,237.2 429.8,237.2 431.6,237.2 433.3,237.3 435.1,237.2 436.8,237.2 438.5,237.2 440.3,237.3 442.0,237.4 443.7,237.4 445.5,237.4 447.2,237.4 449.0,237.6 450.7,237.8 452.4,238.0 454.2,238.3 455.9,238.5 457.6,238.6 459.4,238.5 461.1,238.3 462.9,238.1" stroke="#e2e31a" stroke-width="0.6" fill="none" opacity="0.9"/>
<polyline points="204.0,252.7 205.8,248.3 207.5,247.5 209.2,244.4 211.0,242.0 212.7,240.3 214.5,239.6 216.2,239.6 217.9,239.8 219.7,240.0 221.4,240.2 223.1,240.4 224.9,240.2 226.6,239.6 228.4,238.8 230.1,238.1 231.8,237.6 233.6,237.5 235.3,237.6 237.0,237.8 238.8,238.1 240.5,238.6 242.2,239.1 244.0,239.6 245.7,239.7 247.5,239.5 249.2,239.1 250.9,238.7 252.7,238.7 254.4,238.8 256.1,238.9 257.9,239.0 259.6,239.0 261.4,239.0 263.1,239.0 264.8,239.1 266.6,239.3 268.3,239.5 270.0,239.8 271.8,240.0 273.5,240.0 275.3,239.9 277.0,239.7 278.7,239.4 280.5,239.2 282.2,239.1 283.9,239.2 285.7,239.4 287.4,239.4 289.1,239.3 290.9,239.1 292.6,238.8 294.4,238.6 296.1,238.4 297.8,238.3 299.6,238.2 301.3,238.3 303.0,238.4 304.8,238.6 306.5,238.8 308.3,239.0 310.0,239.0 311.7,238.9 313.5,238.7 315.2,238.4 316.9,238.3 318.7,238.4 320.4,238.7 322.2,239.2 323.9,239.8 325.6,240.4 327.4,240.8 329.1,240.9 330.8,240.7 332.6,240.1 334.3,239.5 336.0,239.1 337.8,239.1 339.5,239.2 341.3,239.3 343.0,239.4 344.7,239.3 346.5,239.3 348.2,239.0 349.9,238.7 351.7,238.4 353.4,238.2 355.2,238.1 356.9,238.1 358.6,238.2 360.4,238.3 362.1,238.3 363.8,238.2 365.6,238.1 367.3,238.1 369.1,238.2 370.8,238.3 372.5,238.5 374.3,238.6 376.0,238.7 377.7,238.8 379.5,238.6 381.2,238.3 382.9,237.8 384.7,237.4 386.4,237.1 388.2,237.0 389.9,237.0 391.6,237.1 393.4,237.2 395.1,237.1 396.8,236.8 398.6,236.6 400.3,236.5 402.1,236.6 403.8,236.6 405.5,236.4 407.3,236.2 409.0,236.1 410.7,236.3 412.5,236.7 414.2,237.0 416.0,237.0 417.7,236.7 419.4,236.4 421.2,236.1 422.9,235.9 424.6,235.9 426.4,235.9 428.1,235.9 429.8,235.7 431.6,235.4 433.3,235.1 435.1,234.9 436.8,234.9 438.5,235.1 440.3,235.3 442.0,235.3 443.7,235.2 445.5,235.0 447.2,235.1 449.0,235.4 450.7,235.8 452.4,236.1 454.2,236.4 455.9,236.4 457.6,236.4 459.4,236.4 461.1,236.4 462.9,236.5" stroke="#fde725" stroke-width="0.6" fill="none" opacity="0.9"/>
<polyline points="204.0,237.5 205.8,237.5 207.5,239.6 209.2,239.9 211.0,239.7 212.7,239.8 214.5,240.6 216.2,240.7 217.9,240.7 219.7,240.5 221.4,240.2 223.1,240.0 224.9,240.1 226.6,240.3 228.4,240.6 230.1,240.9 231.8,241.1 233.6,241.1 235.3,240.9 237.0,240.7 238.8,240.5 240.5,240.4 242.2,240.2 244.0,240.1 245.7,240.2 247.5,240.3 249.2,240.5 250.9,240.8 252.7,241.0 254.4,241.1 256.1,241.0 257.9,240.9 259.6,240.7 261.4,240.6 263.1,240.4 264.8,240.2 266.6,240.1 268.3,240.1 270.0,240.1 271.8,240.1 273.5,240.1 275.3,240.1 277.0,240.1 278.7,240.2 280.5,240.3 282.2,240.5 283.9,240.7 285.7,241.1 287.4,241.6 289.1,241.9 290.9,241.9 292.6,241.7 294.4,241.4 296.1,241.0 297.8,240.8 299.6,240.8 301.3,240.9 303.0,241.1 304.8,241.2 306.5,241.3 308.3,241.3 310.0,241.4 311.7,241.5 313.5,241.5 315.2,241.5 316.9,241.3 318.7,241.0 320.4,240.6 322.2,240.2 323.9,240.0 325.6,240.3 327.4,240.8 329.1,241.5 330.8,242.1 332.6,242.2 334.3,242.1 336.0,241.8 337.8,241.6 339.5,241.5 341.3,241.5 343.0,241.4 344.7,241.2 346.5,241.2 348.2,241.1 349.9,241.2 351.7,241.2 353.4,241.3 355.2,241.5 356.9,241.5 358.6,241.5 360.4,241.2 362.1,240.6 363.8,240.0 365.6,239.7 367.3,239.7 369.1,240.0 370.8,240.2 372.5,240.3 374.3,240.4 376.0,240.6 377.7,240.9 379.5,241.2 381.2,241.3 382.9,241.2 384.7,240.9 386.4,240.5 388.2,240.1 389.9,239.9 391.6,239.7 393.4,239.6 395.1,239.6 396.8,239.6 398.6,239.7 400.3,239.8 402.1,239.9 403.8,240.0 405.5,240.3 407.3,240.6 409.0,241.0 410.7,241.3 412.5,241.5 414.2,241.5 416.0,241.3 417.7,241.0 419.4,240.9 421.2,241.0 422.9,241.2 424.6,241.5 426.4,241.7 428.1,241.7 429.8,241.4 431.6,241.1 433.3,240.9 435.1,240.9 436.8,241.1 438.5,241.5 440.3,241.7 442.0,241.7 443.7,241.5 445.5,241.3 447.2,241.1 449.0,241.0 450.7,240.9 452.4,240.8 454.2,240.8 455.9,240.9 457.6,240.9 459.4,241.0 461.1,241.2 462.9,241.4" stroke="#f1e41c" stroke-width="0.6" fill="none" opacity="0.9"/>
<polyline points="204.0,233.4 205.8,231.4 207.5,233.9 209.2,235.1 211.0,237.5 212.7,238.2 214.5,239.9 216.2,240.1 217.9,240.2 219.7,240.2 221.4,240.0 223.1,239.7 224.9,239.4 226.6,239.0 228.4,238.6 230.1,238.2 231.8,238.1 233.6,238.2 235.3,238.7 237.0,239.1 238.8,239.4 240.5,239.4 242.2,239.4 244.0,239.3 245.7,239.5 247.5,239.8 249.2,240.3 250.9,240.6 252.7,240.6 254.4,240.5 256.1,240.3 257.9,240.1 259.6,240.0 261.4,240.0 263.1,240.0 264.8,239.9 266.6,239.8 268.3,239.6 270.0,239.4 271.8,239.3 273.5,239.1 275.3,239.1 277.0,239.3 278.7,239.6 280.5,239.9 282.2,240.0 283.9,240.0 285.7,239.8 287.4,239.5 289.1,239.4 290.9,239.5 292.6,239.8 294.4,240.2 296.1,240.5 297.8,240.7 299.6,240.9 301.3,240.8 303.0,240.6 304.8,240.3 306.5,239.9 308.3,239.6 310.0,239.4 311.7,239.4 313.5,239.4 315.2,239.4 316.9,239.5 318.7,239.4 320.4,239.3 322.2,239.1 323.9,239.0 325.6,239.0 327.4,239.3 329.1,239.7 330.8,240.1 332.6,240.3 334.3,240.3 336.0,240.4 337.8,240.5 339.5,240.5 341.3,240.4 343.0,240.3 344.7,240.3 346.5,240.3 348.2,240.2 349.9,240.2 351.7,240.0 353.4,239.9 355.2,239.9 356.9,239.8 358.6,239.8 360.4,239.7 362.1,239.6 363.8,239.5 365.6,239.4 367.3,239.2 369.1,239.2 370.8,239.3 372.5,239.5 374.3,239.8 376.0,240.0 377.7,240.1 379.5,240.2 381.2,240.3 382.9,240.3 384.7,240.3 386.4,240.3 388.2,240.4 389.9,240.6 391.6,240.9 393.4,241.0 395.1,240.9 396.8,240.7 398.6,240.5 400.3,240.2 402.1,239.8 403.8,239.3 405.5,239.0 407.3,238.9 409.0,239.0 410.7,239.2 412.5,239.3 414.2,239.3 416.0,239.3 417.7,239.4 419.4,239.7 421.2,240.1 422.9,240.3 424.6,240.3 426.4,240.1 428.1,239.7 429.8,239.2 431.6,238.9 433.3,238.8 435.1,239.0 436.8,239.3 438.5,239.6 440.3,239.9 442.0,240.2 443.7,240.5 445.5,240.8 447.2,241.0 449.0,241.1 450.7,241.1 452.4,241.0 454.2,240.9 455.9,240.7 457.6,240.5 459.4,240.1 461.1,239.8 462.9,239.6" stroke="#e2e31a" stroke-width="0.6" fill="none" opacity="0.9"/>
<polyline points="204.0,243.3 205.8,240.3 207.5,243.4 209.2,239.2 211.0,241.0 212.7,240.5 214.5,240.1 216.2,240.2 217.9,240.3 219.7,240.3 221.4,240.1 223.1,239.9 224.9,239.8 226.6,239.8 228.4,239.8 230.1,239.7 231.8,239.5 233.6,239.3 235.3,239.0 237.0,238.9 238.8,238.7 240.5,238.7 242.2,238.8 244.0,239.1 245.7,239.6 247.5,240.1 249.2,240.4 250.9,240.4 252.7,240.1 254.4,239.6 256.1,239.1 257.9,238.7 259.6,238.7 261.4,239.0 263.1,239.5 264.8,239.8 266.6,239.9 268.3,239.9 270.0,239.9 271.8,240.1 273.5,240.4 275.3,240.6 277.0,240.4 278.7,240.0 280.5,239.5 282.2,238.9 283.9,238.5 285.7,238.2 287.4,238.3 289.1,238.8 290.9,239.5 292.6,240.1 294.4,240.3 296.1,240.2 297.8,239.9 299.6,239.5 301.3,239.3 303.0,239.3 304.8,239.6 306.5,239.9 308.3,240.2 310.0,240.4 311.7,240.6 313.5,240.8 315.2,240.8 316.9,240.7 318.7,240.5 320.4,240.3 322.2,240.2 323.9,240.2 325.6,240.2 327.4,240.1 329.1,240.2 330.8,240.4 332.6,240.8 334.3,241.2 336.0,241.3 337.8,241.2 339.5,240.7 341.3,240.2 343.0,239.6 344.7,239.2 346.5,239.0 348.2,239.0 349.9,239.2 351.7,239.6 353.4,239.8 355.2,239.9 356.9,239.7 358.6,239.5 360.4,239.2 362.1,238.9 363.8,238.7 365.6,238.5 367.3,238.2 369.1,238.1 370.8,238.1 372.5,238.2 374.3,238.4 376.0,238.6 377.7,238.6 379.5,238.7 381.2,238.7 382.9,238.9 384.7,239.0 386.4,239.0 388.2,238.9 389.9,238.9 391.6,238.9 393.4,238.9 395.1,238.8 396.8,238.7 398.6,238.7 400.3,238.8 402.1,238.9 403.8,238.9 405.5,238.8 407.3,238.5 409.0,238.2 410.7,237.8 412.5,237.6 414.2,237.5 416.0,237.5 417.7,237.8 419.4,238.1 421.2,238.5 422.9,238.8 424.6,239.0 426.4,238.8 428.1,238.4 429.8,237.9 431.6,237.5 433.3,237.3 435.1,237.3 436.8,237.4 438.5,237.4 440.3,237.3 442.0,237.4 443.7,237.5 445.5,237.7 447.2,237.8 449.0,238.0 450.7,238.3 452.4,238.5 454.2,238.6 455.9,238.6 457.6,238.6 459.4,238.6 461.1,238.6 462.9,238.6" stroke="#fde725" stroke-width="0.6" fill="none" opacity="0.9"/>
<polyline points="204.0,226.8 205.8,230.2 207.5,232.9 209.2,234.4 211.0,235.6 212.7,237.9 214.5,239.1 216.2,238.9 217.9,239.0 219.7,239.0 221.4,238.8 223.1,238.5 224.9,238.1 226.6,237.6 228.4,237.3 230.1,237.1 231.8,237.2 233.6,237.4 235.3,237.6 237.0,237.8 238.8,237.9 240.5,238.0 242.2,238.2 244.0,238.5 245.7,238.7 247.5,238.7 249.2,238.6 250.9,238.5 252.7,238.5 254.4,238.5 256.1,238.5 257.9,238.4 259.6,238.1 261.4,237.8 263.1,237.6 264.8,237.6 266.6,237.9 268.3,238.1 270.0,238.3 271.8,238.1 273.5,237.9 275.3,237.6 277.0,237.6 278.7,237.9 280.5,238.3 282.2,238.7 283.9,238.9 285.7,239.0 287.4,239.0 289.1,239.0 290.9,238.8 292.6,238.6 294.4,238.3 296.1,238.0 297.8,237.7 299.6,237.4 301.3,237.2 303.0,237.2 304.8,237.3 306.5,237.5 308.3,237.6 310.0,237.7 311.7,237.6 313.5,237.7 315.2,237.9 316.9,238.4 318.7,239.0 320.4,239.4 322.2,239.6 323.9,239.6 325.6,239.4 327.4,239.0 329.1,238.7 330.8,238.6 332.6,238.7 334.3,238.8 336.0,238.8 337.8,238.6 339.5,238.5 341.3,238.5 343.0,238.6 344.7,238.8 346.5,238.9 348.2,238.9 349.9,238.7 351.7,238.4 353.4,238.0 355.2,237.8 356.9,237.8 358.6,238.3 360.4,238.9 362.1,239.6 363.8,240.0 365.6,240.1 367.3,239.8 369.1,239.5 370.8,239.4 372.5,239.5 374.3,239.7 376.0,239.6 377.7,239.2 379.5,238.6 381.2,238.2 382.9,238.0 384.7,237.9 386.4,237.8 388.2,237.5 389.9,237.1 391.6,236.6 393.4,236.1 395.1,235.8 396.8,235.7 398.6,235.6 400.3,235.4 402.1,235.2 403.8,235.0 405.5,235.0 407.3,235.1 409.0,235.3 410.7,235.4 412.5,235.4 414.2,235.3 416.0,234.9 417.7,234.6 419.4,234.5 421.2,234.6 422.9,235.0 424.6,235.4 426.4,235.5 428.1,235.5 429.8,235.4 431.6,235.3 433.3,235.2 435.1,235.0 436.8,234.8 438.5,234.6 440.3,234.7 442.0,235.0 443.7,235.2 445.5,235.3 447.2,235.4 449.0,235.3 450.7,235.2 452.4,235.1 454.2,235.0 455.9,234.8 457.6,234.6 459.4,234.5 461.1,234.6 462.9,234.9" stroke="#f1e41c" stroke-width="0.6" fill="none" opacity="0.9"/>
<polyline points="204.0,247.6 205.8,247.1 207.5,245.2 209.2,245.2 211.0,242.6 212.7,241.8 214.5,240.3 216.2,239.9 217.9,239.4 219.7,239.1 221.4,238.9 223.1,239.0 224.9,239.3 226.6,239.8 228.4,240.1 230.1,240.1 231.8,239.9 233.6,239.4 235.3,239.0 237.0,238.6 238.8,238.5 240.5,238.7 242.2,239.0 244.0,239.3 245.7,239.4 247.5,239.5 249.2,239.5 250.9,239.7 252.7,239.9 254.4,240.2 256.1,240.3 257.9,240.3 259.6,240.1 261.4,239.8 263.1,239.6 264.8,239.5 266.6,239.7 268.3,239.9 270.0,240.1 271.8,240.3 273.5,240.4 275.3,240.5 277.0,240.5 278.7,240.4 280.5,240.2 282.2,240.1 283.9,240.1 285.7,240.2 287.4,240.3 289.1,240.4 290.9,240.5 292.6,240.6 294.4,240.7 296.1,240.7 297.8,240.5 299.6,240.2 301.3,239.9 303.0,240.0 304.8,240.4 306.5,240.9 308.3,241.1 310.0,241.0 311.7,240.8 313.5,240.6 315.2,240.7 316.9,240.9 318.7,241.1 320.4,241.3 322.2,241.4 323.9,241.5 325.6,241.4 327.4,241.2 329.1,241.0 330.8,240.7 332.6,240.3 334.3,240.0 336.0,239.7 337.8,239.5 339.5,239.2 341.3,239.0 343.0,239.0 344.7,239.1 346.5,239.2 348.2,239.3 349.9,239.2 351.7,239.1 353.4,239.1 355.2,239.1 356.9,239.0 358.6,238.8 360.4,238.7 362.1,238.7 363.8,238.9 365.6,239.2 367.3,239.7 369.1,240.2 370.8,240.5 372.5,240.8 374.3,240.7 376.0,240.5 377.7,240.0 379.5,239.5 381.2,239.1 382.9,239.0 384.7,239.1 386.4,239.3 388.2,239.3 389.9,239.2 391.6,238.9 393.4,238.6 395.1,238.4 396.8,238.4 398.6,238.5 400.3,238.7 402.1,238.9 403.8,239.0 405.5,239.2 407.3,239.3 409.0,239.4 410.7,239.5 412.5,239.6 414.2,239.6 416.0,239.6 417.7,239.5 419.4,239.3 421.2,239.1 422.9,238.9 424.6,238.9 426.4,239.0 428.1,239.2 429.8,239.3 431.6,239.2 433.3,239.0 435.1,238.7 436.8,238.5 438.5,238.4 440.3,238.3 442.0,238.4 443.7,238.5 445.5,238.8 447.2,239.0 449.0,239.2 450.7,239.2 452.4,239.1 454.2,239.1 455.9,239.1 457.6,239.0 459.4,239.0 461.1,239.0 462.9,239.0" stroke="#e2e31a" stroke-width="0.6" fill="none" opacity="0.9"/>
<polyline points="204.0,259.9 205.8,258.4 207.5,250.9 209.2,250.2 211.0,247.5 212.7,242.4 214.5,240.3 216.2,240.2 217.9,240.1 219.7,239.9 221.4,239.8 223.1,239.7 224.9,239.7 226.6,239.7 228.4,239.9 230.1,240.0 231.8,240.1 233.6,240.2 235.3,240.4 237.0,240.5 238.8,240.4 240.5,240.1 242.2,239.7 244.0,239.2 245.7,239.0 247.5,238.9 249.2,238.9 250.9,239.1 252.7,239.3 254.4,239.4 256.1,239.6 257.9,239.7 259.6,240.0 261.4,240.1 263.1,240.0 264.8,239.9 266.6,239.9 268.3,240.0 270.0,240.2 271.8,240.2 273.5,240.1 275.3,240.0 277.0,239.8 278.7,239.7 280.5,239.7 282.2,239.7 283.9,239.7 285.7,239.6 287.4,239.4 289.1,238.9 290.9,238.4 292.6,238.0 294.4,237.8 296.1,238.0 297.8,238.5 299.6,239.1 301.3,239.7 303.0,240.1 304.8,240.4 306.5,240.3 308.3,239.9 310.0,239.4 311.7,239.0 313.5,239.1 315.2,239.3 316.9,239.4 318.7,239.4 320.4,239.3 322.2,239.4 323.9,239.5 325.6,239.5 327.4,239.5 329.1,239.4 330.8,239.3 332.6,239.3 334.3,239.1 336.0,239.0 337.8,238.8 339.5,238.7 341.3,238.7 343.0,238.8 344.7,239.1 346.5,239.6 348.2,240.3 349.9,241.0 351.7,241.6 353.4,241.9 355.2,241.7 356.9,241.3 358.6,240.7 360.4,240.1 362.1,239.6 363.8,239.3 365.6,239.4 367.3,239.6 369.1,240.0 370.8,240.3 372.5,240.5 374.3,240.4 376.0,240.1 377.7,239.8 379.5,239.5 381.2,239.5 382.9,239.6 384.7,239.6 386.4,239.5 388.2,239.2 389.9,238.9 391.6,238.6 393.4,238.6 395.1,238.8 396.8,238.9 398.6,238.8 400.3,238.6 402.1,238.6 403.8,238.7 405.5,239.0 407.3,239.2 409.0,239.4 410.7,239.5 412.5,239.5 414.2,239.3 416.0,238.9 417.7,238.5 419.4,238.3 421.2,238.3 422.9,238.4 424.6,238.5 426.4,238.6 428.1,238.6 429.8,238.7 431.6,239.0 433.3,239.3 435.1,239.4 436.8,239.2 438.5,238.8 440.3,238.5 442.0,238.4 443.7,238.4 445.5,238.4 447.2,238.2 449.0,238.1 450.7,238.2 452.4,238.6 454.2,239.1 455.9,239.6 457.6,239.9 459.4,240.1 461.1,240.1 462.9,240.1" stroke="#fde725" stroke-width="0.6" fill="none" opacity="0.9"/>
<polyline points="204.0,255.7 205.8,252.5 207.5,248.1 209.2,245.2 211.0,245.3 212.7,242.8 214.5,241.0 216.2,240.7 217.9,240.8 219.7,241.0 221.4,241.4 223.1,241.7 224.9,241.8 226.6,241.7 228.4,241.6 230.1,241.5 231.8,241.6 233.6,241.7 235.3,241.5 237.0,241.1 238.8,240.6 240.5,240.2 242.2,240.0 244.0,240.2 245.7,240.5 247.5,240.8 249.2,241.0 250.9,241.3 252.7,241.5 254.4,241.6 256.1,241.8 257.9,241.8 259.6,241.7 261.4,241.5 263.1,241.1 264.8,240.8 266.6,240.7 268.3,240.9 270.0,241.1 271.8,241.2 273.5,241.3 275.3,241.3 277.0,241.4 278.7,241.5 280.5,241.5 282.2,241.5 283.9,241.5 285.7,241.5 287.4,241.5 289.1,241.5 290.9,241.5 292.6,241.6 294.4,241.8 296.1,242.0 297.8,242.0 299.6,241.8 301.3,241.4 303.0,241.1 304.8,240.9 306.5,241.0 308.3,241.1 310.0,241.0 311.7,240.9 313.5,240.7 315.2,240.5 316.9,240.4 318.7,240.4 320.4,240.3 322.2,240.2 323.9,240.0 325.6,239.9 327.4,240.0 329.1,240.5 330.8,240.9 332.6,241.4 334.3,241.6 336.0,241.7 337.8,241.6 339.5,241.3 341.3,240.9 343.0,240.5 344.7,240.3 346.5,240.1 348.2,239.9 349.9,239.8 351.7,239.7 353.4,239.9 355.2,240.2 356.9,240.7 358.6,241.1 360.4,241.3 362.1,241.3 363.8,241.4 365.6,241.5 367.3,241.5 369.1,241.4 370.8,241.4 372.5,241.3 374.3,241.2 376.0,241.1 377.7,241.1 379.5,241.1 381.2,241.0 382.9,240.9 384.7,240.7 386.4,240.7 388.2,241.1 389.9,241.5 391.6,241.9 393.4,242.0 395.1,241.8 396.8,241.5 398.6,241.3 400.3,241.4 402.1,241.6 403.8,241.9 405.5,242.4 407.3,242.8 409.0,243.1 410.7,243.0 412.5,242.5 414.2,242.0 416.0,241.5 417.7,241.2 419.4,240.9 421.2,240.9 422.9,241.0 424.6,241.2 426.4,241.6 428.1,241.9 429.8,242.2 431.6,242.2 433.3,242.0 435.1,241.7 436.8,241.3 438.5,241.1 440.3,241.2 442.0,241.7 443.7,242.3 445.5,242.7 447.2,242.7 449.0,242.5 450.7,242.1 452.4,241.6 454.2,241.4 455.9,241.3 457.6,241.3 459.4,241.4 461.1,241.7 462.9,242.1" stroke="#f1e41c" stroke-width="0.6" fill="none" opacity="0.9"/>
<polyline points="204.0,225.1 205.8,231.9 207.5,233.3 209.2,234.4 211.0,236.9 212.7,238.3 214.5,240.8 216.2,240.6 217.9,240.7 219.7,240.9 221.4,241.0 223.1,241.1 224.9,241.1 226.6,241.0 228.4,240.8 230.1,240.6 231.8,240.5 233.6,240.3 235.3,240.1 237.0,239.9 238.8,239.7 240.5,239.5 242.2,239.4 244.0,239.3 245.7,239.3 247.5,239.2 249.2,239.1 250.9,239.0 252.7,239.0 254.4,239.2 256.1,239.6 257.9,240.0 259.6,240.2 261.4,240.1 263.1,239.9 264.8,239.7 266.6,239.6 268.3,239.7 270.0,240.0 271.8,240.2 273.5,240.3 275.3,240.1 277.0,239.6 278.7,239.1 280.5,238.7 282.2,238.6 283.9,238.8 285.7,239.1 287.4,239.4 289.1,239.5 290.9,239.4 292.6,239.3 294.4,239.1 296.1,239.0 297.8,239.0 299.6,239.0 301.3,239.0 303.0,239.2 304.8,239.4 306.5,239.7 308.3,239.9 310.0,240.2 311.7,240.5 313.5,240.7 315.2,240.7 316.9,240.5 318.7,240.1 320.4,239.9 322.2,239.8 323.9,239.7 325.6,239.7 327.4,239.7 329.1,239.8 330.8,240.0 332.6,240.1 334.3,240.0 336.0,240.0 337.8,240.1 339.5,240.3 341.3,240.5 343.0,240.5 344.7,240.4 346.5,240.3 348.2,240.4 349.9,240.6 351.7,240.9 353.4,241.2 355.2,241.5 356.9,241.6 358.6,241.4 360.4,241.0 362.1,240.4 363.8,239.9 365.6,239.7 367.3,239.7 369.1,239.9 370.8,240.1 372.5,240.2 374.3,240.2 376.0,240.2 377.7,240.2 379.5,240.2 381.2,240.3 382.9,240.4 384.7,240.5 386.4,240.7 388.2,240.9 389.9,240.9 391.6,240.9 393.4,240.7 395.1,240.3 396.8,239.7 398.6,239.0 400.3,238.6 402.1,238.5 403.8,238.7 405.5,239.1 407.3,239.3 409.0,239.2 410.7,239.0 412.5,238.7 414.2,238.4 416.0,238.3 417.7,238.3 419.4,238.4 421.2,238.6 422.9,238.9 424.6,239.0 426.4,239.0 428.1,239.0 429.8,238.9 431.6,238.9 433.3,238.9 435.1,238.8 436.8,238.8 438.5,238.8 440.3,238.9 442.0,239.0 443.7,238.9 445.5,238.7 447.2,238.7 449.0,238.8 450.7,239.1 452.4,239.3 454.2,239.5 455.9,239.5 457.6,239.4 459.4,239.3 461.1,239.2 462.9,239.1" stroke="#e2e31a" stroke-width="0.6" fill="none" opacity="0.9"/>
<polyline points="204.0,264.9 205.8,257.4 207.5,252.4 209.2,248.0 211.0,245.8 212.7,244.8 214.5,242.2 216.2,241.9 217.9,241.6 219.7,241.3 221.4,241.2 223.1,241.1 224.9,240.9 226.6,240.6 228.4,240.3 230.1,240.1 231.8,240.1 233.6,240.2 235.3,240.3 237.0,240.4 238.8,240.7 240.5,241.0 242.2,241.3 244.0,241.4 245.7,241.4 247.5,241.3 249.2,241.4 250.9,241.5 252.7,241.6 254.4,241.6 256.1,241.5 257.9,241.3 259.6,241.3 261.4,241.3 263.1,241.4 264.8,241.6 266.6,241.8 268.3,241.9 270.0,241.9 271.8,241.7 273.5,241.6 275.3,241.3 277.0,241.1 278.7,241.0 280.5,240.9 282.2,240.8 283.9,240.9 285.7,240.9 287.4,240.9 289.1,240.9 290.9,241.1 292.6,241.2 294.4,241.3 296.1,241.3 297.8,241.4 299.6,241.4 301.3,241.6 303.0,241.6 304.8,241.4 306.5,241.0 308.3,240.6 310.0,240.3 311.7,240.2 313.5,240.3 315.2,240.5 316.9,240.8 318.7,241.2 320.4,241.6 322.2,241.8 323.9,242.0 325.6,242.0 327.4,241.8 329.1,241.5 330.8,241.2 332.6,240.8 334.3,240.7 336.0,240.8 337.8,241.3 339.5,241.9 341.3,242.4 343.0,242.5 344.7,242.3 346.5,242.0 348.2,241.8 349.9,241.9 351.7,242.2 353.4,242.6 355.2,242.7 356.9,242.4 358.6,241.9 360.4,241.2 362.1,240.9 363.8,240.9 365.6,241.2 367.3,241.6 369.1,241.9 370.8,242.0 372.5,241.9 374.3,241.5 376.0,241.0 377.7,240.7 379.5,240.6 381.2,240.9 382.9,241.4 384.7,242.0 386.4,242.5 388.2,242.8 389.9,243.1 391.6,243.2 393.4,243.3 395.1,243.2 396.8,243.0 398.6,242.9 400.3,242.8 402.1,242.9 403.8,243.1 405.5,243.5 407.3,243.8 409.0,244.1 410.7,244.4 412.5,244.5 414.2,244.4 416.0,244.2 417.7,244.0 419.4,243.8 421.2,243.8 422.9,243.9 424.6,244.0 426.4,244.2 428.1,244.2 429.8,244.0 431.6,243.7 433.3,243.4 435.1,243.1 436.8,242.9 438.5,242.9 440.3,243.2 442.0,243.5 443.7,243.6 445.5,243.4 447.2,243.0 449.0,242.8 450.7,242.8 452.4,242.8 454.2,242.8 455.9,242.7 457.6,242.6 459.4,242.7 461.1,243.1 462.9,243.4" stroke="#fde725" stroke-width="0.6" fill="none" opacity="0.9"/>
<polyline points="204.0,251.1 205.8,251.9 207.5,246.8 209.2,245.7 211.0,243.8 212.7,240.8 214.5,239.8 216.2,240.0 217.9,240.0 219.7,239.8 221.4,239.4 223.1,239.0 224.9,238.8 226.6,238.9 228.4,239.2 230.1,239.5 231.8,239.7 233.6,239.7 235.3,239.5 237.0,239.1 238.8,238.7 240.5,238.3 242.2,238.2 244.0,238.2 245.7,238.5 247.5,238.8 249.2,239.0 250.9,239.2 252.7,239.1 254.4,239.0 256.1,238.9 257.9,238.8 259.6,238.8 261.4,238.9 263.1,239.1 264.8,239.4 266.6,239.7 268.3,239.9 270.0,239.9 271.8,239.8 273.5,239.6 275.3,239.4 277.0,239.2 278.7,239.1 280.5,239.1 282.2,239.3 283.9,239.6 285.7,239.7 287.4,239.7 289.1,239.5 290.9,239.4 292.6,239.4 294.4,239.4 296.1,239.4 297.8,239.3 299.6,239.2 301.3,238.9 303.0,238.6 304.8,238.3 306.5,238.0 308.3,237.8 310.0,237.8 311.7,237.9 313.5,238.1 315.2,238.5 316.9,238.8 318.7,239.0 320.4,239.2 322.2,239.5 323.9,239.8 325.6,240.2 327.4,240.4 329.1,240.5 330.8,240.6 332.6,240.5 334.3,240.3 336.0,240.1 337.8,239.8 339.5,239.5 341.3,239.4 343.0,239.3 344.7,239.2 346.5,239.1 348.2,239.1 349.9,239.2 351.7,239.4 353.4,239.7 355.2,240.1 356.9,240.2 358.6,240.1 360.4,239.9 362.1,239.7 363.8,239.8 365.6,240.0 367.3,240.1 369.1,240.1 370.8,240.0 372.5,239.9 374.3,239.9 376.0,239.9 377.7,239.9 379.5,239.7 381.2,239.4 382.9,239.1 384.7,238.9 386.4,239.0 388.2,239.2 389.9,239.4 391.6,239.5 393.4,239.5 395.1,239.3 396.8,239.0 398.6,238.6 400.3,238.2 402.1,237.6 403.8,237.3 405.5,237.1 407.3,237.1 409.0,237.2 410.7,237.1 412.5,236.9 414.2,236.6 416.0,236.3 417.7,236.2 419.4,236.1 421.2,235.9 422.9,235.8 424.6,235.8 426.4,235.9 428.1,236.3 429.8,236.7 431.6,237.0 433.3,237.1 435.1,237.0 436.8,236.8 438.5,236.5 440.3,236.4 442.0,236.5 443.7,236.7 445.5,237.0 447.2,237.3 449.0,237.5 450.7,237.7 452.4,237.8 454.2,237.9 455.9,237.9 457.6,237.9 459.4,238.0 461.1,238.0 462.9,238.0" stroke="#f1e41c" stroke-width="0.6" fill="none" opacity="0.9"/>
 </g>
 <rect x="204" y="195.2" width="259.2" height="101.6" fill="none" stroke="#c6c6c6" stroke-width="0.7"/>
<line x1="202.8" y1="212.5" x2="204.0" y2="212.5" stroke="#555" stroke-width="0.5"/><line x1="202.8" y1="239.8" x2="204.0" y2="239.8" stroke="#555" stroke-width="0.5"/><line x1="202.8" y1="267.1" x2="204.0" y2="267.1" stroke="#555" stroke-width="0.5"/><line x1="202.8" y1="294.4" x2="204.0" y2="294.4" stroke="#555" stroke-width="0.5"/>
</svg>
<div class="tk" style="right:607.5px;top:210.5px;font-size:3.6px;color:#444">0.005</div><div class="tk" style="right:607.5px;top:237.8px;font-size:3.6px;color:#444">0</div><div class="tk" style="right:607.5px;top:265.1px;font-size:3.6px;color:#444">-0.005</div><div class="tk" style="right:607.5px;top:292.4px;font-size:3.6px;color:#444">-0.01</div>
<div class="tkx" style="left:223.7px;top:300.2px;font-size:3.6px;color:#444">1000</div><div class="tkx" style="left:257.8px;top:300.2px;font-size:3.6px;color:#444">1100</div><div class="tkx" style="left:291.9px;top:300.2px;font-size:3.6px;color:#444">1200</div><div class="tkx" style="left:326.0px;top:300.2px;font-size:3.6px;color:#444">1300</div><div class="tkx" style="left:360.1px;top:300.2px;font-size:3.6px;color:#444">1400</div><div class="tkx" style="left:394.2px;top:300.2px;font-size:3.6px;color:#444">1500</div><div class="tkx" style="left:428.3px;top:300.2px;font-size:3.6px;color:#444">1600</div>
<div class="t" style="left:186.4px;top:244.2px;font-size:3.7px;color:#222;transform:rotate(-90deg)">value</div>
<div class="t" style="left:314.5px;top:309.6px;font-size:3.7px;color:#222">wavelength</div>

<!-- preprocessing -->
<div class="a" style="left:38px;top:322.8px;width:432.5px;height:1.1px;background:#737a8a;border-radius:1px"></div>
<div class="t" style="left:43.9px;top:329.4px;font-size:5.2px;color:#333">Preprocessing</div>

<div class="a tog ton" style="left:42.6px;top:343.7px"></div>
<div class="t plbl" style="left:55.3px;top:345.2px">First Derivative</div>
<div class="a info" style="left:161.4px;top:344.3px"></div>
<div class="a tog toff" style="left:42.6px;top:354.8px"></div>
<div class="t plbl" style="left:55.3px;top:356.3px">Msc</div>
<div class="a info" style="left:161.4px;top:355.3px"></div>
<div class="a tog toff" style="left:42.6px;top:365.8px"></div>
<div class="t plbl" style="left:55.3px;top:367.2px">Scale</div>
<div class="a info" style="left:161.4px;top:366.3px"></div>

<div class="a tog toff" style="left:185.3px;top:343.7px"></div>
<div class="t plbl" style="left:197.9px;top:345.2px">Second Derivative</div>
<div class="a info" style="left:303.8px;top:344.3px"></div>
<div class="a tog toff" style="left:185.3px;top:354.8px"></div>
<div class="t plbl" style="left:197.9px;top:356.3px">Snv</div>
<div class="a info" style="left:303.8px;top:355.3px"></div>

<div class="a tog toff" style="left:327.3px;top:343.7px"></div>
<div class="t plbl" style="left:340.1px;top:345.2px">Baseline</div>
<div class="a info" style="left:446.3px;top:344.3px"></div>
<div class="a tog ton" style="left:327.3px;top:354.8px"></div>
<div class="t plbl" style="left:340.1px;top:356.3px">Center</div>
<div class="a info" style="left:446.3px;top:355.3px"></div>

<div class="a btn" style="left:35px;top:387px;width:437.6px;height:9.7px;line-height:9.7px;background:#66cf9c;font-weight:bold;font-size:3.5px;padding-top:1.3px">Run Model</div>

<!-- ============ Model Performance ============ -->
<div class="a" style="left:487.6px;top:81.6px;width:317px;height:248.4px;background:#364256;border-radius:2px;box-shadow:0 0 1px rgba(0,0,0,.3)"></div>
<div class="a" style="left:487.6px;top:98.7px;width:317px;height:0.6px;background:#323d50"></div>
<div class="t title" style="left:494.5px;top:86.1px;color:#f3f4f6">Model Performance</div>
<div class="a" style="left:786px;top:88.6px;width:2.6px;height:0.6px;background:#aeb4be"></div>
<svg class="a" style="left:794.8px;top:86px" width="5" height="5" viewBox="0 0 5 5"><path d="M0.8 4.2 L4.2 0.8 M2.6 0.8H4.2V2.4 M0.8 2.6V4.2H2.4" stroke="#c4c9d2" stroke-width="0.5" fill="none"/></svg>

<div class="a pill" style="left:492.9px;top:105.1px;width:65.1px;background:#4646e3">model_Super.Alba_derivate.center</div>
<div class="a pill" style="left:493px;top:116.5px;width:19.7px;background:#22a35a">humidity</div>
<div class="a pill" style="left:571px;top:116.3px;width:23.7px;background:#4f5666;border:0.5px solid #6a717f;line-height:5.1px">Super Alba</div>
<div class="a pill" style="left:649px;top:116.3px;width:43.7px;background:#4f5666;border:0.5px solid #6a717f;line-height:5.1px">First Derivative.Center</div>

<div class="a metric" style="left:491.5px;top:127.9px;width:102.2px;height:37px"></div>
<div class="a metric" style="left:595.3px;top:127.9px;width:101.7px;height:37px"></div>
<div class="a metric" style="left:700px;top:127.9px;width:101px;height:37px"></div>
<div class="t mval" style="left:494.9px;top:133.6px">0.332</div>
<div class="t mval" style="left:598.6px;top:133.6px">0.881</div>
<div class="t mval" style="left:703.2px;top:133.6px">0.273</div>
<div class="a mpill" style="left:494.2px;top:159px">RMSE</div>
<div class="a mpill" style="left:598px;top:159px">RSQ</div>
<div class="a mpill" style="left:702.8px;top:159px">MAE</div>
<div class="a minfo" style="left:585.4px;top:158.4px"></div>
<div class="a minfo" style="left:688.8px;top:158.4px"></div>
<div class="a minfo" style="left:792.8px;top:158.4px"></div>

<!-- scatter -->
<svg class="a" style="left:0;top:0" width="810" height="400" viewBox="0 0 810 400">
 <rect x="507.7" y="183" width="288.6" height="101" fill="#444e61"/>
 <g stroke="#3c4658" stroke-width="0.5">
  <line x1="553.3" y1="183" x2="553.3" y2="284"/><line x1="604.6" y1="183" x2="604.6" y2="284"/>
  <line x1="656.4" y1="183" x2="656.4" y2="284"/><line x1="708" y1="183" x2="708" y2="284"/>
  <line x1="759.3" y1="183" x2="759.3" y2="284"/>
  <line x1="507.7" y1="188.8" x2="796.3" y2="188.8"/><line x1="507.7" y1="201.2" x2="796.3" y2="201.2"/>
  <line x1="507.7" y1="214.4" x2="796.3" y2="214.4"/><line x1="507.7" y1="227.3" x2="796.3" y2="227.3"/>
  <line x1="507.7" y1="240.5" x2="796.3" y2="240.5"/><line x1="507.7" y1="253.4" x2="796.3" y2="253.4"/>
  <line x1="507.7" y1="266.1" x2="796.3" y2="266.1"/><line x1="507.7" y1="278.2" x2="796.3" y2="278.2"/>
 </g>
 <g stroke="#aab0ba" stroke-width="0.5"><line x1="506.2" y1="188.8" x2="507.7" y2="188.8"/><line x1="506.2" y1="201.2" x2="507.7" y2="201.2"/><line x1="506.2" y1="214.4" x2="507.7" y2="214.4"/><line x1="506.2" y1="227.3" x2="507.7" y2="227.3"/><line x1="506.2" y1="240.5" x2="507.7" y2="240.5"/><line x1="506.2" y1="253.4" x2="507.7" y2="253.4"/><line x1="506.2" y1="266.1" x2="507.7" y2="266.1"/><line x1="506.2" y1="278.2" x2="507.7" y2="278.2"/><line x1="553.3" y1="284" x2="553.3" y2="285.5"/><line x1="604.6" y1="284" x2="604.6" y2="285.5"/><line x1="656.4" y1="284" x2="656.4" y2="285.5"/><line x1="708" y1="284" x2="708" y2="285.5"/><line x1="759.3" y1="284" x2="759.3" y2="285.5"/></g>
 <line x1="612.9" y1="269.3" x2="687.9" y2="196.5" stroke="#e9ebef" stroke-width="0.85" stroke-dasharray="3 1.8"/>
<circle cx="617.6" cy="258.8" r="1.35" fill="#fff"/>
<circle cx="617.4" cy="261.6" r="1.35" fill="#fff"/>
<circle cx="617.2" cy="264.3" r="1.35" fill="#fff"/>
<circle cx="617.4" cy="268.0" r="1.35" fill="#fff"/>
<circle cx="623.4" cy="257.5" r="1.35" fill="#fff"/>
<circle cx="623.5" cy="261.0" r="1.35" fill="#fff"/>
<circle cx="624.2" cy="264.5" r="1.35" fill="#fff"/>
<circle cx="624.0" cy="268.0" r="1.35" fill="#fff"/>
<circle cx="622.6" cy="271.5" r="1.35" fill="#fff"/>
<circle cx="623.1" cy="275.0" r="1.35" fill="#fff"/>
<circle cx="622.9" cy="278.0" r="1.35" fill="#fff"/>
<circle cx="622.4" cy="241.8" r="1.35" fill="#fff"/>
<circle cx="622.5" cy="243.9" r="1.35" fill="#fff"/>
<circle cx="623.2" cy="246.0" r="1.35" fill="#fff"/>
<circle cx="640.3" cy="234.0" r="1.35" fill="#fff"/>
<circle cx="642.8" cy="236.5" r="1.35" fill="#fff"/>
<circle cx="640.5" cy="239.0" r="1.35" fill="#fff"/>
<circle cx="640.6" cy="241.5" r="1.35" fill="#fff"/>
<circle cx="639.7" cy="244.0" r="1.35" fill="#fff"/>
<circle cx="641.8" cy="246.5" r="1.35" fill="#fff"/>
<circle cx="642.8" cy="249.0" r="1.35" fill="#fff"/>
<circle cx="642.1" cy="251.5" r="1.35" fill="#fff"/>
<circle cx="642.3" cy="254.0" r="1.35" fill="#fff"/>
<circle cx="639.8" cy="257.5" r="1.35" fill="#fff"/>
<circle cx="661.8" cy="206.6" r="1.35" fill="#fff"/>
<circle cx="662.2" cy="209.0" r="1.35" fill="#fff"/>
<circle cx="662.4" cy="211.3" r="1.35" fill="#fff"/>
<circle cx="661.9" cy="213.5" r="1.35" fill="#fff"/>
<circle cx="670.0" cy="203.4" r="1.35" fill="#fff"/>
<circle cx="670.9" cy="206.5" r="1.35" fill="#fff"/>
<circle cx="671.9" cy="209.7" r="1.35" fill="#fff"/>
<circle cx="687.7" cy="188.8" r="1.35" fill="#fff"/>
<circle cx="687.3" cy="190.8" r="1.35" fill="#fff"/>
<circle cx="687.4" cy="192.9" r="1.35" fill="#fff"/>
<circle cx="687.2" cy="195.0" r="1.35" fill="#fff"/>
<circle cx="686.9" cy="197.0" r="1.35" fill="#fff"/>
<circle cx="688.2" cy="199.1" r="1.35" fill="#fff"/>
<circle cx="688.3" cy="201.2" r="1.35" fill="#fff"/>
</svg>
<div class="tk" style="left:494px;top:186.8px;color:#c3c8d1;width:11px;text-align:right;font-size:3.4px">5.5</div>
<div class="tk" style="left:494px;top:199.2px;color:#c3c8d1;width:11px;text-align:right;font-size:3.4px">5</div>
<div class="tk" style="left:494px;top:212.4px;color:#c3c8d1;width:11px;text-align:right;font-size:3.4px">4.5</div>
<div class="tk" style="left:494px;top:225.3px;color:#c3c8d1;width:11px;text-align:right;font-size:3.4px">4</div>
<div class="tk" style="left:494px;top:238.5px;color:#c3c8d1;width:11px;text-align:right;font-size:3.4px">3.5</div>
<div class="tk" style="left:494px;top:251.4px;color:#c3c8d1;width:11px;text-align:right;font-size:3.4px">3</div>
<div class="tk" style="left:494px;top:264.1px;color:#c3c8d1;width:11px;text-align:right;font-size:3.4px">2.5</div>
<div class="tk" style="left:494px;top:276.2px;color:#c3c8d1;width:11px;text-align:right;font-size:3.4px">2</div>
<div class="tkx" style="left:543.3px;top:287.3px;color:#c3c8d1;font-size:3.4px">2</div>
<div class="tkx" style="left:594.6px;top:287.3px;color:#c3c8d1;font-size:3.4px">3</div>
<div class="tkx" style="left:646.4px;top:287.3px;color:#c3c8d1;font-size:3.4px">4</div>
<div class="tkx" style="left:698.0px;top:287.3px;color:#c3c8d1;font-size:3.4px">5</div>
<div class="tkx" style="left:749.3px;top:287.3px;color:#c3c8d1;font-size:3.4px">6</div>
<div class="t" style="left:493.6px;top:231.5px;font-size:3.4px;color:#fff;font-weight:bold;transform:rotate(-90deg)">pred</div>
<div class="t" style="left:646px;top:297.2px;font-size:3.3px;color:#fff;font-weight:bold">outcome</div>

<div class="t" style="left:492.9px;top:302.6px;font-size:3.8px;color:#fff;font-weight:bold">Model name:</div>
<div class="a" style="left:492.4px;top:309.4px;width:203.6px;height:9.8px;background:#fff;border-radius:1.5px"></div>
<div class="a btn" style="left:699.4px;top:309.4px;width:101.5px;height:9.8px;line-height:9.8px;background:#218c5f;color:#b9dccb;font-size:3.6px">Save Model</div>
</body></html>
